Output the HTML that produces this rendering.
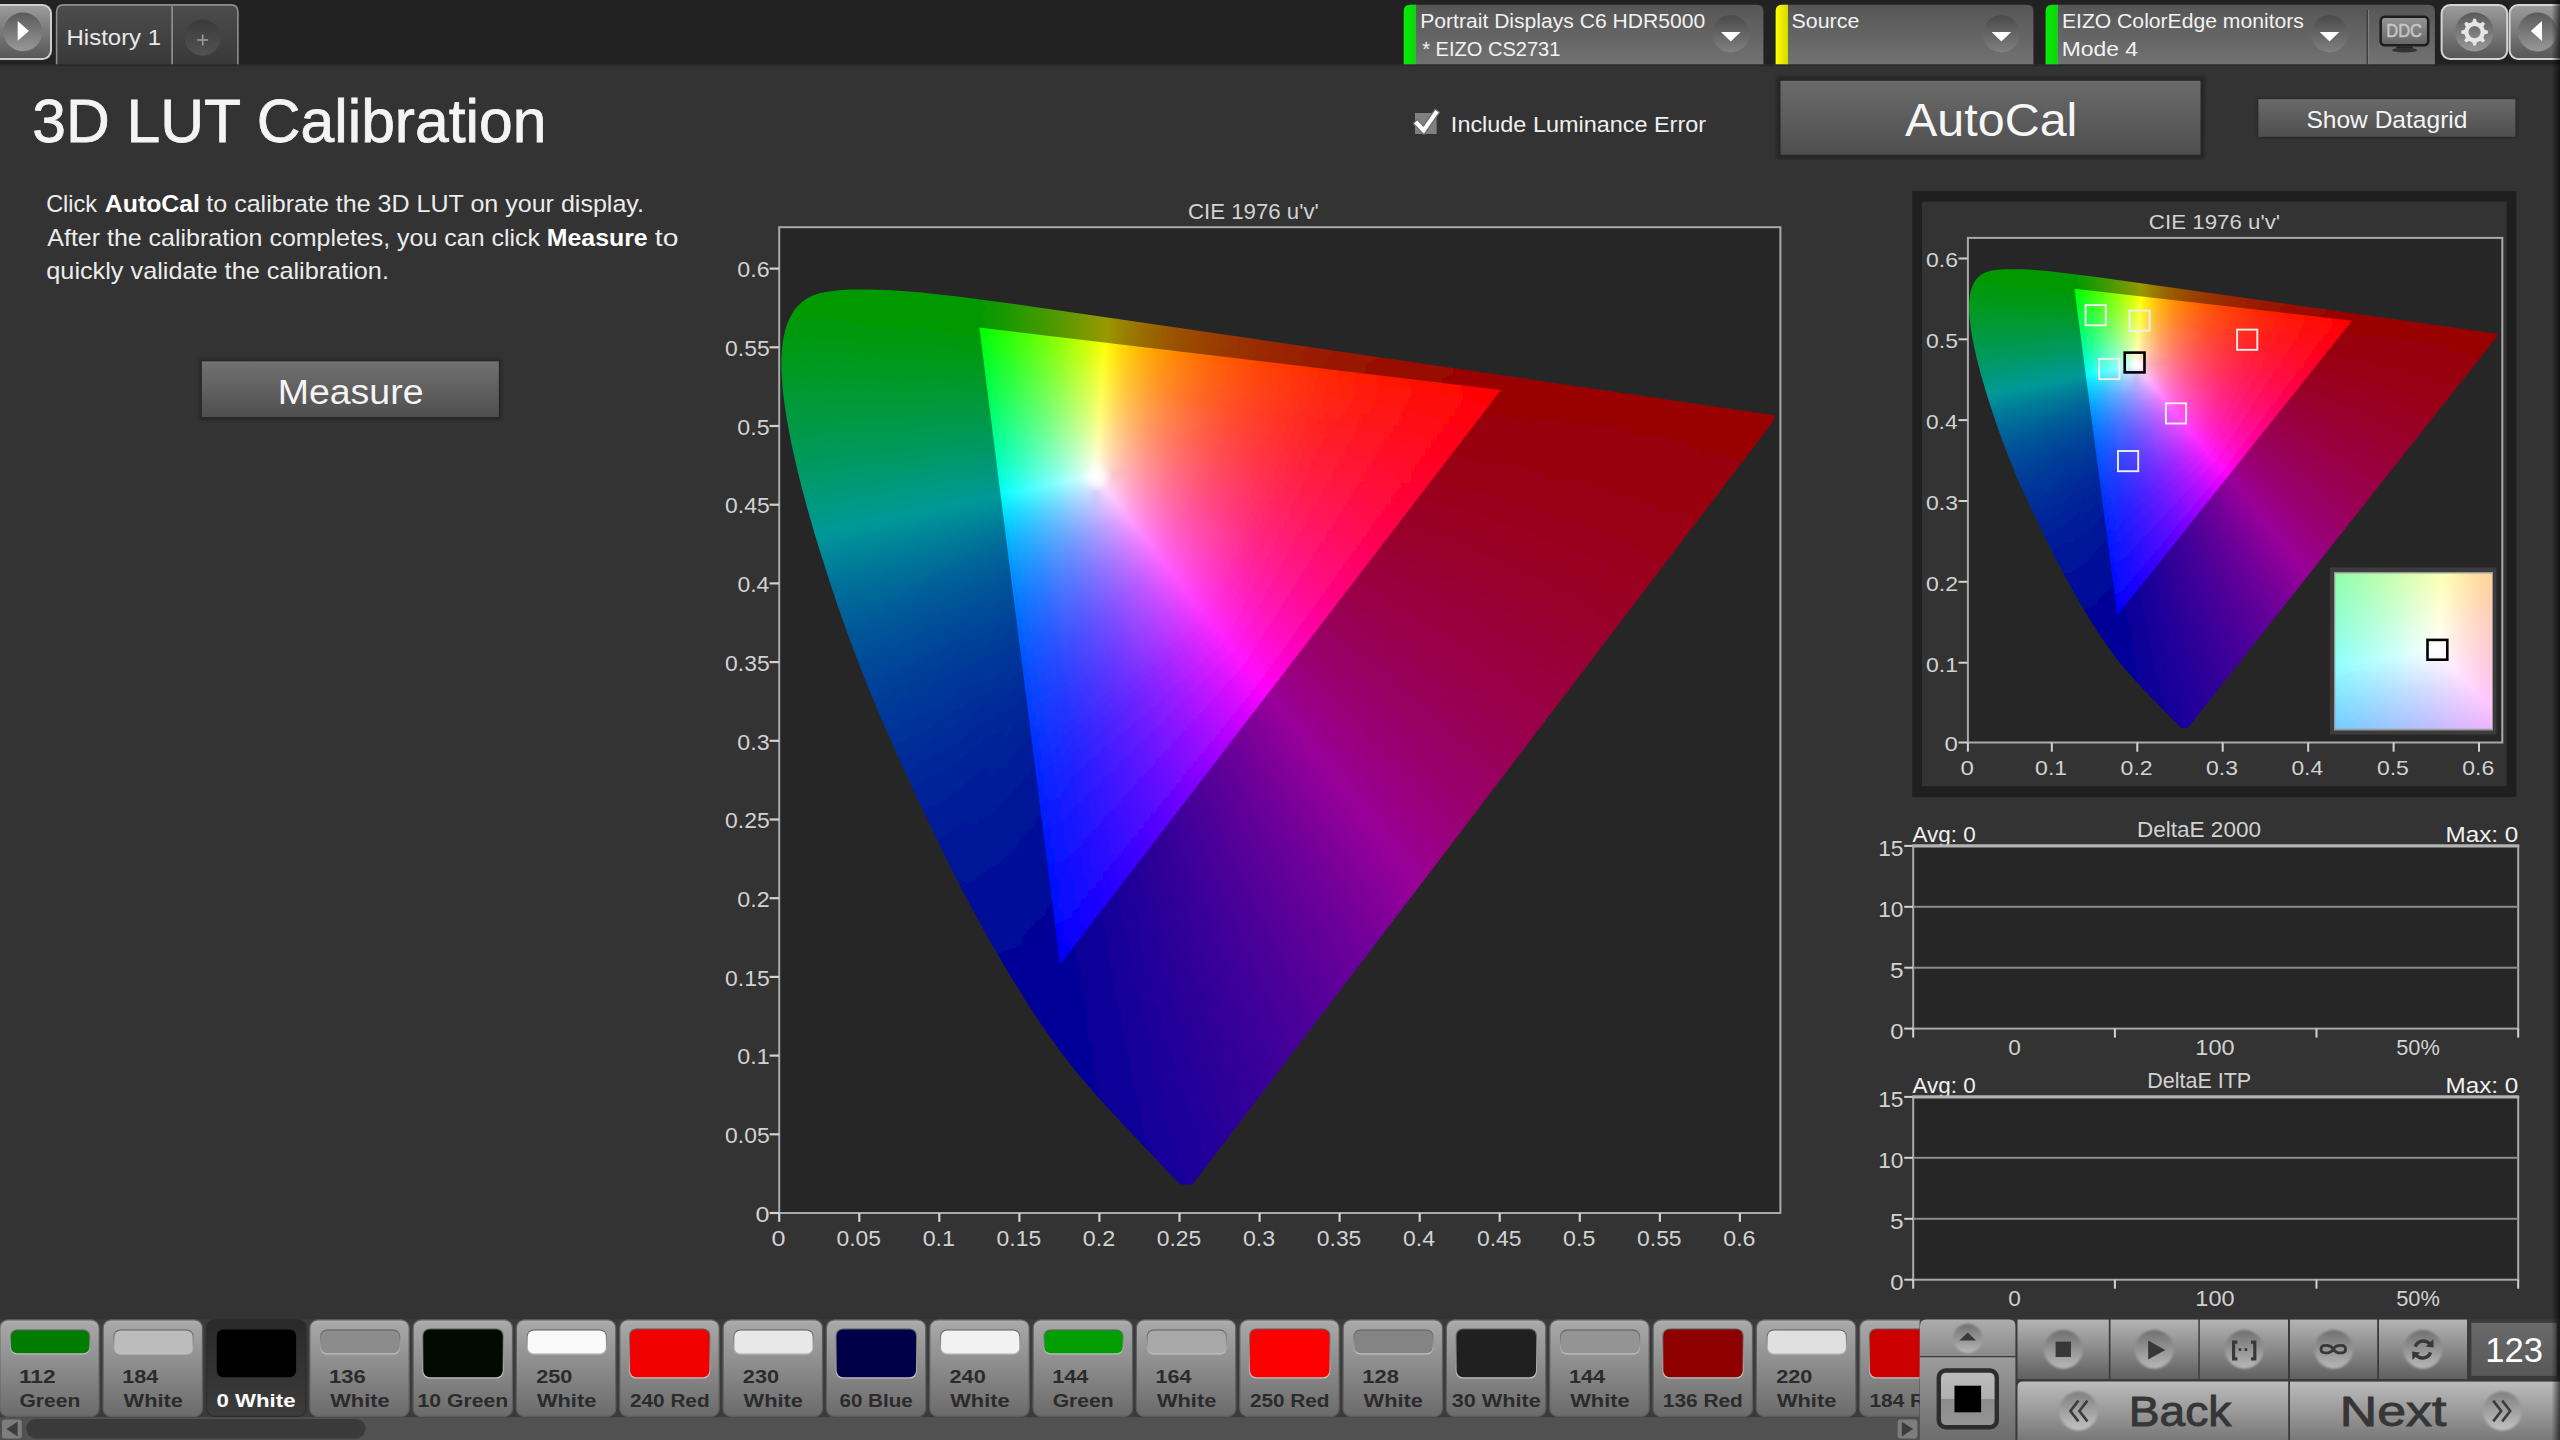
<!DOCTYPE html><html><head><meta charset="utf-8"><title>3D LUT Calibration</title><style>html,body{margin:0;padding:0;background:#333;overflow:hidden}body{width:2560px;height:1440px;font-family:"Liberation Sans",sans-serif}svg{display:block}</style></head><body><svg width="2560" height="1440" viewBox="0 0 2560 1440" font-family="Liberation Sans, sans-serif"><defs><clipPath id="cl"><path d="M1180.6,1184.5 1176.9,1181 1167,1171.1 1150.3,1153 1109.1,1109.4 1090.2,1088.3 1074.2,1069.2 1062.6,1054.4 1056.4,1046.1 1042.7,1026.6 1027.1,1003 1009.9,975.3 991.8,944.3 982.3,927.5 972.7,909.8 962.8,891.2 952.8,871.7 942.6,851.3 922.1,808.7 901.6,764.4 891.5,741.9 881.5,719.2 871.9,696.4 862.7,673.6 854,651 845.8,628.8 838.1,607 831,585.7 818,545 812.3,525.8 807.1,507.4 802.4,489.9 798.2,473.5 794.6,458 791.4,443.5 788.8,430 786.5,417.3 784.7,405.4 783.3,394.4 782.3,384.2 781.7,374.8 781.4,366.1 781.5,358.1 781.9,350.5 782.6,343.5 783.6,337 785,331 786.6,325.5 788.6,320.5 790.8,315.9 793.2,311.8 795.9,308.1 798.8,304.9 802,302 805.3,299.6 808.8,297.5 812.4,295.8 816.2,294.3 820.1,293.1 824.1,292.2 832.5,290.9 841.3,290.1 850.3,289.6 863.9,289.4 877.6,289.7 891.6,290.3 906.1,291.2 921.2,292.5 937.1,294.2 959.7,296.8 1010.4,303.5 1121.4,319.4 1774,415.3 1774,420.2 1192.4,1184.5Z"/></clipPath>
<clipPath id="ct"><path d="M1500.9,390 979.4,327.6 1060.1,964.5Z"/></clipPath>
<linearGradient id="o0" gradientUnits="userSpaceOnUse" x1="1096" y1="475.8" x2="1728.6" y2="479.8"><stop offset=".453" stop-color="#99061e"/><stop offset=".535" stop-color="#990019"/><stop offset="1" stop-color="#99000a"/></linearGradient>
<linearGradient id="o1" gradientUnits="userSpaceOnUse" x1="1096" y1="475.8" x2="1722.6" y2="487.7"><stop offset=".453" stop-color="#99061f"/><stop offset=".535" stop-color="#99001a"/><stop offset="1" stop-color="#99000b"/></linearGradient>
<linearGradient id="o2" gradientUnits="userSpaceOnUse" x1="1096" y1="475.8" x2="1716.7" y2="495.5"><stop offset=".453" stop-color="#990620"/><stop offset=".535" stop-color="#99001b"/><stop offset="1" stop-color="#99000c"/></linearGradient>
<linearGradient id="o3" gradientUnits="userSpaceOnUse" x1="1096" y1="475.8" x2="1710.8" y2="503.3"><stop offset=".453" stop-color="#990622"/><stop offset=".535" stop-color="#99001d"/><stop offset="1" stop-color="#99000e"/></linearGradient>
<linearGradient id="o4" gradientUnits="userSpaceOnUse" x1="1096" y1="475.8" x2="1704.9" y2="510.9"><stop offset=".453" stop-color="#990623"/><stop offset=".535" stop-color="#99001e"/><stop offset="1" stop-color="#99000f"/></linearGradient>
<linearGradient id="o5" gradientUnits="userSpaceOnUse" x1="1096" y1="475.8" x2="1699.1" y2="518.6"><stop offset=".453" stop-color="#990625"/><stop offset=".535" stop-color="#990020"/><stop offset="1" stop-color="#901"/></linearGradient>
<linearGradient id="o6" gradientUnits="userSpaceOnUse" x1="1096" y1="475.8" x2="1693.4" y2="526.1"><stop offset=".453" stop-color="#990626"/><stop offset=".535" stop-color="#990021"/><stop offset="1" stop-color="#990012"/></linearGradient>
<linearGradient id="o7" gradientUnits="userSpaceOnUse" x1="1096" y1="475.8" x2="1687.7" y2="533.6"><stop offset=".453" stop-color="#990627"/><stop offset=".535" stop-color="#990023"/><stop offset="1" stop-color="#990014"/></linearGradient>
<linearGradient id="o8" gradientUnits="userSpaceOnUse" x1="1096" y1="475.8" x2="1682.1" y2="541"><stop offset=".453" stop-color="#990629"/><stop offset=".535" stop-color="#990024"/><stop offset="1" stop-color="#990015"/></linearGradient>
<linearGradient id="o9" gradientUnits="userSpaceOnUse" x1="1096" y1="475.8" x2="1676.5" y2="548.4"><stop offset=".453" stop-color="#99062a"/><stop offset=".535" stop-color="#990026"/><stop offset="1" stop-color="#990017"/></linearGradient>
<linearGradient id="o10" gradientUnits="userSpaceOnUse" x1="1096" y1="475.8" x2="1670.9" y2="555.7"><stop offset=".453" stop-color="#99062c"/><stop offset=".535" stop-color="#990027"/><stop offset="1" stop-color="#990018"/></linearGradient>
<linearGradient id="o11" gradientUnits="userSpaceOnUse" x1="1096" y1="475.8" x2="1665.4" y2="562.9"><stop offset=".453" stop-color="#99062d"/><stop offset=".535" stop-color="#990029"/><stop offset="1" stop-color="#99001a"/></linearGradient>
<linearGradient id="o12" gradientUnits="userSpaceOnUse" x1="1096" y1="475.8" x2="1659.9" y2="570.1"><stop offset=".453" stop-color="#99062f"/><stop offset=".535" stop-color="#99002a"/><stop offset="1" stop-color="#99001c"/></linearGradient>
<linearGradient id="o13" gradientUnits="userSpaceOnUse" x1="1096" y1="475.8" x2="1654.5" y2="577.3"><stop offset=".453" stop-color="#990730"/><stop offset=".535" stop-color="#99002c"/><stop offset="1" stop-color="#99001d"/></linearGradient>
<linearGradient id="o14" gradientUnits="userSpaceOnUse" x1="1096" y1="475.8" x2="1649.1" y2="584.3"><stop offset=".453" stop-color="#990732"/><stop offset=".535" stop-color="#99002d"/><stop offset="1" stop-color="#99001f"/></linearGradient>
<linearGradient id="o15" gradientUnits="userSpaceOnUse" x1="1096" y1="475.8" x2="1643.7" y2="591.4"><stop offset=".453" stop-color="#990734"/><stop offset=".535" stop-color="#99002f"/><stop offset="1" stop-color="#990021"/></linearGradient>
<linearGradient id="o16" gradientUnits="userSpaceOnUse" x1="1096" y1="475.8" x2="1638.4" y2="598.4"><stop offset=".453" stop-color="#990735"/><stop offset=".535" stop-color="#990030"/><stop offset="1" stop-color="#902"/></linearGradient>
<linearGradient id="o17" gradientUnits="userSpaceOnUse" x1="1096" y1="475.8" x2="1633.1" y2="605.3"><stop offset=".453" stop-color="#990737"/><stop offset=".535" stop-color="#990032"/><stop offset="1" stop-color="#990024"/></linearGradient>
<linearGradient id="o18" gradientUnits="userSpaceOnUse" x1="1096" y1="475.8" x2="1627.8" y2="612.3"><stop offset=".453" stop-color="#990738"/><stop offset=".535" stop-color="#990034"/><stop offset="1" stop-color="#990026"/></linearGradient>
<linearGradient id="o19" gradientUnits="userSpaceOnUse" x1="1096" y1="475.8" x2="1622.6" y2="619.1"><stop offset=".453" stop-color="#99073a"/><stop offset=".535" stop-color="#990035"/><stop offset="1" stop-color="#990027"/></linearGradient>
<linearGradient id="o20" gradientUnits="userSpaceOnUse" x1="1096" y1="475.8" x2="1617.4" y2="626"><stop offset=".453" stop-color="#99073c"/><stop offset=".535" stop-color="#990037"/><stop offset="1" stop-color="#990029"/></linearGradient>
<linearGradient id="o21" gradientUnits="userSpaceOnUse" x1="1096" y1="475.8" x2="1612.3" y2="632.7"><stop offset=".453" stop-color="#99073d"/><stop offset=".535" stop-color="#990039"/><stop offset="1" stop-color="#99002b"/></linearGradient>
<linearGradient id="o22" gradientUnits="userSpaceOnUse" x1="1096" y1="475.8" x2="1607.1" y2="639.5"><stop offset=".453" stop-color="#99073f"/><stop offset=".535" stop-color="#99003b"/><stop offset="1" stop-color="#99002d"/></linearGradient>
<linearGradient id="o23" gradientUnits="userSpaceOnUse" x1="1096" y1="475.8" x2="1602" y2="646.2"><stop offset=".453" stop-color="#990741"/><stop offset=".535" stop-color="#99003c"/><stop offset="1" stop-color="#99002f"/></linearGradient>
<linearGradient id="o24" gradientUnits="userSpaceOnUse" x1="1096" y1="475.8" x2="1596.9" y2="652.9"><stop offset=".453" stop-color="#990742"/><stop offset=".535" stop-color="#99003e"/><stop offset="1" stop-color="#990031"/></linearGradient>
<linearGradient id="o25" gradientUnits="userSpaceOnUse" x1="1096" y1="475.8" x2="1591.9" y2="659.6"><stop offset=".452" stop-color="#990744"/><stop offset=".535" stop-color="#990040"/><stop offset="1" stop-color="#903"/></linearGradient>
<linearGradient id="o26" gradientUnits="userSpaceOnUse" x1="1096" y1="475.8" x2="1586.8" y2="666.2"><stop offset=".452" stop-color="#990746"/><stop offset=".535" stop-color="#990042"/><stop offset="1" stop-color="#990035"/></linearGradient>
<linearGradient id="o27" gradientUnits="userSpaceOnUse" x1="1096" y1="475.8" x2="1581.8" y2="672.8"><stop offset=".452" stop-color="#990748"/><stop offset=".535" stop-color="#904"/><stop offset="1" stop-color="#990037"/></linearGradient>
<linearGradient id="o28" gradientUnits="userSpaceOnUse" x1="1096" y1="475.8" x2="1576.8" y2="679.3"><stop offset=".452" stop-color="#99074a"/><stop offset=".535" stop-color="#990045"/><stop offset="1" stop-color="#990039"/></linearGradient>
<linearGradient id="o29" gradientUnits="userSpaceOnUse" x1="1096" y1="475.8" x2="1571.8" y2="685.9"><stop offset=".452" stop-color="#99074b"/><stop offset=".535" stop-color="#990047"/><stop offset="1" stop-color="#99003b"/></linearGradient>
<linearGradient id="o30" gradientUnits="userSpaceOnUse" x1="1096" y1="475.8" x2="1566.8" y2="692.4"><stop offset=".452" stop-color="#99084d"/><stop offset=".534" stop-color="#990049"/><stop offset="1" stop-color="#99003d"/></linearGradient>
<linearGradient id="o31" gradientUnits="userSpaceOnUse" x1="1096" y1="475.8" x2="1561.9" y2="698.9"><stop offset=".452" stop-color="#99084f"/><stop offset=".534" stop-color="#99004b"/><stop offset="1" stop-color="#99003f"/></linearGradient>
<linearGradient id="o32" gradientUnits="userSpaceOnUse" x1="1096" y1="475.8" x2="1557" y2="705.4"><stop offset=".452" stop-color="#990851"/><stop offset=".534" stop-color="#99004d"/><stop offset="1" stop-color="#990041"/></linearGradient>
<linearGradient id="o33" gradientUnits="userSpaceOnUse" x1="1096" y1="475.8" x2="1552.1" y2="711.9"><stop offset=".452" stop-color="#990853"/><stop offset=".534" stop-color="#99004f"/><stop offset="1" stop-color="#990043"/></linearGradient>
<linearGradient id="o34" gradientUnits="userSpaceOnUse" x1="1096" y1="475.8" x2="1547.2" y2="718.3"><stop offset=".452" stop-color="#990855"/><stop offset=".534" stop-color="#990051"/><stop offset="1" stop-color="#990045"/></linearGradient>
<linearGradient id="o35" gradientUnits="userSpaceOnUse" x1="1096" y1="475.8" x2="1542.3" y2="724.7"><stop offset=".452" stop-color="#990857"/><stop offset=".534" stop-color="#990053"/><stop offset="1" stop-color="#990048"/></linearGradient>
<linearGradient id="o36" gradientUnits="userSpaceOnUse" x1="1096" y1="475.8" x2="1537.4" y2="731.2"><stop offset=".452" stop-color="#990859"/><stop offset=".534" stop-color="#905"/><stop offset="1" stop-color="#99004a"/></linearGradient>
<linearGradient id="o37" gradientUnits="userSpaceOnUse" x1="1096" y1="475.8" x2="1532.5" y2="737.6"><stop offset=".452" stop-color="#99085b"/><stop offset=".534" stop-color="#990058"/><stop offset="1" stop-color="#99004c"/></linearGradient>
<linearGradient id="o38" gradientUnits="userSpaceOnUse" x1="1096" y1="475.8" x2="1527.6" y2="744"><stop offset=".452" stop-color="#99085d"/><stop offset=".534" stop-color="#99005a"/><stop offset="1" stop-color="#99004f"/></linearGradient>
<linearGradient id="o39" gradientUnits="userSpaceOnUse" x1="1096" y1="475.8" x2="1522.8" y2="750.3"><stop offset=".452" stop-color="#99085f"/><stop offset=".534" stop-color="#99005c"/><stop offset="1" stop-color="#990051"/></linearGradient>
<linearGradient id="o40" gradientUnits="userSpaceOnUse" x1="1096" y1="475.8" x2="1517.9" y2="756.7"><stop offset=".452" stop-color="#990862"/><stop offset=".534" stop-color="#99005e"/><stop offset="1" stop-color="#990054"/></linearGradient>
<linearGradient id="o41" gradientUnits="userSpaceOnUse" x1="1096" y1="475.8" x2="1513.1" y2="763.1"><stop offset=".452" stop-color="#990864"/><stop offset=".534" stop-color="#990061"/><stop offset="1" stop-color="#990057"/></linearGradient>
<linearGradient id="o42" gradientUnits="userSpaceOnUse" x1="1096" y1="475.8" x2="1508.2" y2="769.5"><stop offset=".452" stop-color="#990866"/><stop offset=".534" stop-color="#990063"/><stop offset="1" stop-color="#990059"/></linearGradient>
<linearGradient id="o43" gradientUnits="userSpaceOnUse" x1="1096" y1="475.8" x2="1503.4" y2="775.8"><stop offset=".452" stop-color="#990868"/><stop offset=".534" stop-color="#990065"/><stop offset="1" stop-color="#99005c"/></linearGradient>
<linearGradient id="o44" gradientUnits="userSpaceOnUse" x1="1096" y1="475.8" x2="1498.5" y2="782.2"><stop offset=".452" stop-color="#99096b"/><stop offset=".534" stop-color="#990068"/><stop offset="1" stop-color="#99005f"/></linearGradient>
<linearGradient id="o45" gradientUnits="userSpaceOnUse" x1="1096" y1="475.8" x2="1493.7" y2="788.6"><stop offset=".452" stop-color="#99096d"/><stop offset=".534" stop-color="#99006a"/><stop offset="1" stop-color="#990062"/></linearGradient>
<linearGradient id="o46" gradientUnits="userSpaceOnUse" x1="1096" y1="475.8" x2="1488.9" y2="794.9"><stop offset=".452" stop-color="#990970"/><stop offset=".534" stop-color="#99006d"/><stop offset="1" stop-color="#990065"/></linearGradient>
<linearGradient id="o47" gradientUnits="userSpaceOnUse" x1="1096" y1="475.8" x2="1484" y2="801.3"><stop offset=".452" stop-color="#990972"/><stop offset=".534" stop-color="#990070"/><stop offset="1" stop-color="#990068"/></linearGradient>
<linearGradient id="o48" gradientUnits="userSpaceOnUse" x1="1096" y1="475.8" x2="1479.1" y2="807.7"><stop offset=".452" stop-color="#990975"/><stop offset=".534" stop-color="#990072"/><stop offset="1" stop-color="#99006b"/></linearGradient>
<linearGradient id="o49" gradientUnits="userSpaceOnUse" x1="1096" y1="475.8" x2="1474.3" y2="814.1"><stop offset=".452" stop-color="#990977"/><stop offset=".534" stop-color="#990075"/><stop offset="1" stop-color="#99006e"/></linearGradient>
<linearGradient id="o50" gradientUnits="userSpaceOnUse" x1="1096" y1="475.8" x2="1469.4" y2="820.5"><stop offset=".452" stop-color="#99097a"/><stop offset=".534" stop-color="#990078"/><stop offset="1" stop-color="#990071"/></linearGradient>
<linearGradient id="o51" gradientUnits="userSpaceOnUse" x1="1096" y1="475.8" x2="1464.5" y2="826.9"><stop offset=".452" stop-color="#99097d"/><stop offset=".534" stop-color="#99007b"/><stop offset="1" stop-color="#990075"/></linearGradient>
<linearGradient id="o52" gradientUnits="userSpaceOnUse" x1="1096" y1="475.8" x2="1459.7" y2="833.3"><stop offset=".452" stop-color="#99097f"/><stop offset=".534" stop-color="#99007e"/><stop offset="1" stop-color="#990078"/></linearGradient>
<linearGradient id="o53" gradientUnits="userSpaceOnUse" x1="1096" y1="475.8" x2="1454.8" y2="839.7"><stop offset=".452" stop-color="#990982"/><stop offset=".534" stop-color="#990081"/><stop offset="1" stop-color="#99007c"/></linearGradient>
<linearGradient id="o54" gradientUnits="userSpaceOnUse" x1="1096" y1="475.8" x2="1449.9" y2="846.2"><stop offset=".452" stop-color="#990985"/><stop offset=".534" stop-color="#990084"/><stop offset="1" stop-color="#99007f"/></linearGradient>
<linearGradient id="o55" gradientUnits="userSpaceOnUse" x1="1096" y1="475.8" x2="1445" y2="852.6"><stop offset=".452" stop-color="#990a88"/><stop offset=".534" stop-color="#990087"/><stop offset="1" stop-color="#990083"/></linearGradient>
<linearGradient id="o56" gradientUnits="userSpaceOnUse" x1="1096" y1="475.8" x2="1440" y2="859.1"><stop offset=".452" stop-color="#990a8b"/><stop offset=".534" stop-color="#99008a"/><stop offset="1" stop-color="#990087"/></linearGradient>
<linearGradient id="o57" gradientUnits="userSpaceOnUse" x1="1096" y1="475.8" x2="1435.1" y2="865.6"><stop offset=".452" stop-color="#990a8e"/><stop offset=".534" stop-color="#99008e"/><stop offset="1" stop-color="#99008b"/></linearGradient>
<linearGradient id="o58" gradientUnits="userSpaceOnUse" x1="1096" y1="475.8" x2="1430.1" y2="872.1"><stop offset=".452" stop-color="#990a92"/><stop offset=".534" stop-color="#990091"/><stop offset="1" stop-color="#99008f"/></linearGradient>
<linearGradient id="o59" gradientUnits="userSpaceOnUse" x1="1096" y1="475.8" x2="1425.1" y2="878.7"><stop offset=".452" stop-color="#990a95"/><stop offset=".534" stop-color="#990095"/><stop offset="1" stop-color="#990094"/></linearGradient>
<linearGradient id="o60" gradientUnits="userSpaceOnUse" x1="1096" y1="475.8" x2="1420.1" y2="885.3"><stop offset=".451" stop-color="#990a98"/><stop offset=".534" stop-color="#990098"/><stop offset="1" stop-color="#990098"/></linearGradient>
<linearGradient id="o61" gradientUnits="userSpaceOnUse" x1="1096" y1="475.8" x2="1415.1" y2="891.9"><stop offset=".451" stop-color="#960a99"/><stop offset=".534" stop-color="#960099"/><stop offset="1" stop-color="#950099"/></linearGradient>
<linearGradient id="o62" gradientUnits="userSpaceOnUse" x1="1096" y1="475.8" x2="1410.1" y2="898.5"><stop offset=".451" stop-color="#930a99"/><stop offset=".534" stop-color="#920099"/><stop offset="1" stop-color="#910099"/></linearGradient>
<linearGradient id="o63" gradientUnits="userSpaceOnUse" x1="1096" y1="475.8" x2="1405" y2="905.1"><stop offset=".451" stop-color="#8f0a99"/><stop offset=".534" stop-color="#8f0099"/><stop offset="1" stop-color="#8d0099"/></linearGradient>
<linearGradient id="o64" gradientUnits="userSpaceOnUse" x1="1096" y1="475.8" x2="1399.9" y2="911.8"><stop offset=".451" stop-color="#8c0a99"/><stop offset=".534" stop-color="#8b0099"/><stop offset="1" stop-color="#809"/></linearGradient>
<linearGradient id="o65" gradientUnits="userSpaceOnUse" x1="1096" y1="475.8" x2="1394.8" y2="918.5"><stop offset=".451" stop-color="#890a99"/><stop offset=".534" stop-color="#809"/><stop offset="1" stop-color="#840099"/></linearGradient>
<linearGradient id="o66" gradientUnits="userSpaceOnUse" x1="1096" y1="475.8" x2="1389.7" y2="925.3"><stop offset=".451" stop-color="#860a99"/><stop offset=".534" stop-color="#840099"/><stop offset="1" stop-color="#800099"/></linearGradient>
<linearGradient id="o67" gradientUnits="userSpaceOnUse" x1="1096" y1="475.8" x2="1384.5" y2="932.1"><stop offset=".451" stop-color="#830999"/><stop offset=".534" stop-color="#810099"/><stop offset="1" stop-color="#7c0099"/></linearGradient>
<linearGradient id="o68" gradientUnits="userSpaceOnUse" x1="1096" y1="475.8" x2="1379.3" y2="938.9"><stop offset=".451" stop-color="#800999"/><stop offset=".534" stop-color="#7e0099"/><stop offset="1" stop-color="#780099"/></linearGradient>
<linearGradient id="o69" gradientUnits="userSpaceOnUse" x1="1096" y1="475.8" x2="1374.1" y2="945.8"><stop offset=".451" stop-color="#7c0999"/><stop offset=".534" stop-color="#7b0099"/><stop offset="1" stop-color="#740099"/></linearGradient>
<linearGradient id="o70" gradientUnits="userSpaceOnUse" x1="1096" y1="475.8" x2="1368.8" y2="952.7"><stop offset=".451" stop-color="#790999"/><stop offset=".534" stop-color="#709"/><stop offset="1" stop-color="#710099"/></linearGradient>
<linearGradient id="o71" gradientUnits="userSpaceOnUse" x1="1096" y1="475.8" x2="1363.5" y2="959.7"><stop offset=".451" stop-color="#770999"/><stop offset=".533" stop-color="#740099"/><stop offset="1" stop-color="#6d0099"/></linearGradient>
<linearGradient id="o72" gradientUnits="userSpaceOnUse" x1="1096" y1="475.8" x2="1358.2" y2="966.7"><stop offset=".451" stop-color="#740999"/><stop offset=".533" stop-color="#710099"/><stop offset="1" stop-color="#690099"/></linearGradient>
<linearGradient id="o73" gradientUnits="userSpaceOnUse" x1="1096" y1="475.8" x2="1352.8" y2="973.7"><stop offset=".451" stop-color="#710999"/><stop offset=".533" stop-color="#6e0099"/><stop offset="1" stop-color="#609"/></linearGradient>
<linearGradient id="o74" gradientUnits="userSpaceOnUse" x1="1096" y1="475.8" x2="1347.4" y2="980.8"><stop offset=".451" stop-color="#6e0999"/><stop offset=".533" stop-color="#6b0099"/><stop offset="1" stop-color="#620099"/></linearGradient>
<linearGradient id="o75" gradientUnits="userSpaceOnUse" x1="1096" y1="475.8" x2="1342" y2="988"><stop offset=".451" stop-color="#6b0999"/><stop offset=".533" stop-color="#680099"/><stop offset="1" stop-color="#5f0099"/></linearGradient>
<linearGradient id="o76" gradientUnits="userSpaceOnUse" x1="1096" y1="475.8" x2="1336.5" y2="995.2"><stop offset=".451" stop-color="#680999"/><stop offset=".533" stop-color="#650099"/><stop offset="1" stop-color="#5c0099"/></linearGradient>
<linearGradient id="o77" gradientUnits="userSpaceOnUse" x1="1096" y1="475.8" x2="1331" y2="1002.4"><stop offset=".451" stop-color="#660999"/><stop offset=".533" stop-color="#620099"/><stop offset="1" stop-color="#580099"/></linearGradient>
<linearGradient id="o78" gradientUnits="userSpaceOnUse" x1="1096" y1="475.8" x2="1325.4" y2="1009.7"><stop offset=".451" stop-color="#630899"/><stop offset=".533" stop-color="#600099"/><stop offset="1" stop-color="#509"/></linearGradient>
<linearGradient id="o79" gradientUnits="userSpaceOnUse" x1="1096" y1="475.8" x2="1319.8" y2="1017.1"><stop offset=".451" stop-color="#600899"/><stop offset=".533" stop-color="#5d0099"/><stop offset="1" stop-color="#520099"/></linearGradient>
<linearGradient id="o80" gradientUnits="userSpaceOnUse" x1="1096" y1="475.8" x2="1314.1" y2="1024.5"><stop offset=".451" stop-color="#5e0899"/><stop offset=".533" stop-color="#5a0099"/><stop offset="1" stop-color="#4f0099"/></linearGradient>
<linearGradient id="o81" gradientUnits="userSpaceOnUse" x1="1096" y1="475.8" x2="1308.4" y2="1032"><stop offset=".451" stop-color="#5b0899"/><stop offset=".533" stop-color="#570099"/><stop offset="1" stop-color="#4c0099"/></linearGradient>
<linearGradient id="o82" gradientUnits="userSpaceOnUse" x1="1096" y1="475.8" x2="1302.7" y2="1039.6"><stop offset=".451" stop-color="#580899"/><stop offset=".533" stop-color="#509"/><stop offset="1" stop-color="#490099"/></linearGradient>
<linearGradient id="o83" gradientUnits="userSpaceOnUse" x1="1096" y1="475.8" x2="1296.9" y2="1047.2"><stop offset=".451" stop-color="#560899"/><stop offset=".533" stop-color="#520099"/><stop offset="1" stop-color="#460099"/></linearGradient>
<linearGradient id="o84" gradientUnits="userSpaceOnUse" x1="1096" y1="475.8" x2="1291" y2="1054.9"><stop offset=".451" stop-color="#530899"/><stop offset=".533" stop-color="#4f0099"/><stop offset="1" stop-color="#430099"/></linearGradient>
<linearGradient id="o85" gradientUnits="userSpaceOnUse" x1="1096" y1="475.8" x2="1285.1" y2="1062.7"><stop offset=".451" stop-color="#510899"/><stop offset=".533" stop-color="#4d0099"/><stop offset="1" stop-color="#400099"/></linearGradient>
<linearGradient id="o86" gradientUnits="userSpaceOnUse" x1="1096" y1="475.8" x2="1279.2" y2="1070.5"><stop offset=".451" stop-color="#4e0899"/><stop offset=".533" stop-color="#4a0099"/><stop offset="1" stop-color="#3d0099"/></linearGradient>
<linearGradient id="o87" gradientUnits="userSpaceOnUse" x1="1096" y1="475.8" x2="1273.2" y2="1078.4"><stop offset=".451" stop-color="#4c0899"/><stop offset=".53" stop-color="#480099"/><stop offset="1" stop-color="#3a0099"/></linearGradient>
<linearGradient id="o88" gradientUnits="userSpaceOnUse" x1="1096" y1="475.8" x2="1267.1" y2="1086.4"><stop offset=".451" stop-color="#490899"/><stop offset=".53" stop-color="#450099"/><stop offset="1" stop-color="#380099"/></linearGradient>
<linearGradient id="o89" gradientUnits="userSpaceOnUse" x1="1096" y1="475.8" x2="1261" y2="1094.4"><stop offset=".451" stop-color="#470899"/><stop offset=".53" stop-color="#430099"/><stop offset="1" stop-color="#350099"/></linearGradient>
<linearGradient id="o90" gradientUnits="userSpaceOnUse" x1="1096" y1="475.8" x2="1254.8" y2="1102.6"><stop offset=".451" stop-color="#450899"/><stop offset=".53" stop-color="#400099"/><stop offset="1" stop-color="#320099"/></linearGradient>
<linearGradient id="o91" gradientUnits="userSpaceOnUse" x1="1096" y1="475.8" x2="1248.5" y2="1110.8"><stop offset=".45" stop-color="#420799"/><stop offset=".529" stop-color="#3e0099"/><stop offset="1" stop-color="#300099"/></linearGradient>
<linearGradient id="o92" gradientUnits="userSpaceOnUse" x1="1096" y1="475.8" x2="1242.2" y2="1119.1"><stop offset=".45" stop-color="#400799"/><stop offset=".529" stop-color="#3c0099"/><stop offset="1" stop-color="#2d0099"/></linearGradient>
<linearGradient id="o93" gradientUnits="userSpaceOnUse" x1="1096" y1="475.8" x2="1235.8" y2="1127.6"><stop offset=".45" stop-color="#3e0799"/><stop offset=".529" stop-color="#390099"/><stop offset="1" stop-color="#2a0099"/></linearGradient>
<linearGradient id="o94" gradientUnits="userSpaceOnUse" x1="1096" y1="475.8" x2="1229.2" y2="1136.2"><stop offset=".45" stop-color="#3b0799"/><stop offset=".529" stop-color="#370099"/><stop offset="1" stop-color="#280099"/></linearGradient>
<linearGradient id="o95" gradientUnits="userSpaceOnUse" x1="1096" y1="475.8" x2="1222.5" y2="1145"><stop offset=".45" stop-color="#390799"/><stop offset=".529" stop-color="#340099"/><stop offset="1" stop-color="#250099"/></linearGradient>
<linearGradient id="o96" gradientUnits="userSpaceOnUse" x1="1096" y1="475.8" x2="1215.6" y2="1154"><stop offset=".45" stop-color="#370799"/><stop offset=".529" stop-color="#320099"/><stop offset="1" stop-color="#230099"/></linearGradient>
<linearGradient id="o97" gradientUnits="userSpaceOnUse" x1="1096" y1="475.8" x2="1208.6" y2="1163.2"><stop offset=".45" stop-color="#340799"/><stop offset=".529" stop-color="#300099"/><stop offset="1" stop-color="#200099"/></linearGradient>
<linearGradient id="o98" gradientUnits="userSpaceOnUse" x1="1096" y1="475.8" x2="1201.4" y2="1172.7"><stop offset=".45" stop-color="#320799"/><stop offset=".529" stop-color="#2d0099"/><stop offset="1" stop-color="#1d0099"/></linearGradient>
<linearGradient id="o99" gradientUnits="userSpaceOnUse" x1="1096" y1="475.8" x2="1194.1" y2="1182.3"><stop offset=".45" stop-color="#300799"/><stop offset=".529" stop-color="#2b0099"/><stop offset="1" stop-color="#1b0099"/></linearGradient>
<linearGradient id="o100" gradientUnits="userSpaceOnUse" x1="1096" y1="475.8" x2="1185.6" y2="1184.5"><stop offset=".455" stop-color="#2d0799"/><stop offset=".537" stop-color="#280099"/><stop offset="1" stop-color="#190099"/></linearGradient>
<linearGradient id="o101" gradientUnits="userSpaceOnUse" x1="1096" y1="475.8" x2="1176.3" y2="1180.5"><stop offset=".464" stop-color="#2b0799"/><stop offset=".548" stop-color="#260099"/><stop offset="1" stop-color="#170099"/></linearGradient>
<linearGradient id="o102" gradientUnits="userSpaceOnUse" x1="1096" y1="475.8" x2="1166.6" y2="1170.7"><stop offset=".477" stop-color="#290799"/><stop offset=".562" stop-color="#240099"/><stop offset="1" stop-color="#150099"/></linearGradient>
<linearGradient id="o103" gradientUnits="userSpaceOnUse" x1="1096" y1="475.8" x2="1157.1" y2="1160.3"><stop offset=".491" stop-color="#260799"/><stop offset=".58" stop-color="#210099"/><stop offset="1" stop-color="#130099"/></linearGradient>
<linearGradient id="o104" gradientUnits="userSpaceOnUse" x1="1096" y1="475.8" x2="1148" y2="1150.5"><stop offset=".506" stop-color="#240799"/><stop offset=".595" stop-color="#1f0099"/><stop offset="1" stop-color="#109"/></linearGradient>
<linearGradient id="o105" gradientUnits="userSpaceOnUse" x1="1096" y1="475.8" x2="1139.1" y2="1141.1"><stop offset=".521" stop-color="#220699"/><stop offset=".614" stop-color="#1c0099"/><stop offset="1" stop-color="#0f0099"/></linearGradient>
<linearGradient id="o106" gradientUnits="userSpaceOnUse" x1="1096" y1="475.8" x2="1130.4" y2="1132"><stop offset=".536" stop-color="#1f0699"/><stop offset=".632" stop-color="#1a0099"/><stop offset="1" stop-color="#0d0099"/></linearGradient>
<linearGradient id="o107" gradientUnits="userSpaceOnUse" x1="1096" y1="475.8" x2="1122" y2="1123.1"><stop offset=".551" stop-color="#1d0699"/><stop offset=".65" stop-color="#170099"/><stop offset="1" stop-color="#0b0099"/></linearGradient>
<linearGradient id="o108" gradientUnits="userSpaceOnUse" x1="1096" y1="475.8" x2="1113.8" y2="1114.4"><stop offset=".568" stop-color="#1a0699"/><stop offset=".668" stop-color="#150099"/><stop offset="1" stop-color="#090099"/></linearGradient>
<linearGradient id="o109" gradientUnits="userSpaceOnUse" x1="1096" y1="475.8" x2="1105.6" y2="1105.6"><stop offset=".585" stop-color="#180699"/><stop offset=".689" stop-color="#120099"/><stop offset="1" stop-color="#080099"/></linearGradient>
<linearGradient id="o110" gradientUnits="userSpaceOnUse" x1="1096" y1="475.8" x2="1097.6" y2="1096.7"><stop offset=".603" stop-color="#150699"/><stop offset=".71" stop-color="#100099"/><stop offset="1" stop-color="#060099"/></linearGradient>
<linearGradient id="o111" gradientUnits="userSpaceOnUse" x1="1096" y1="475.8" x2="1089.7" y2="1087.7"><stop offset=".622" stop-color="#130699"/><stop offset=".733" stop-color="#0d0099"/><stop offset="1" stop-color="#040099"/></linearGradient>
<linearGradient id="o112" gradientUnits="userSpaceOnUse" x1="1096" y1="475.8" x2="1081.9" y2="1078.6"><stop offset=".643" stop-color="#100699"/><stop offset=".757" stop-color="#0a0099"/><stop offset="1" stop-color="#020099"/></linearGradient>
<linearGradient id="o113" gradientUnits="userSpaceOnUse" x1="1096" y1="475.8" x2="1074.3" y2="1069.3"><stop offset=".665" stop-color="#0d0699"/><stop offset=".782" stop-color="#080099"/><stop offset="1" stop-color="#009"/></linearGradient>
<linearGradient id="o114" gradientUnits="userSpaceOnUse" x1="1096" y1="475.8" x2="1066.7" y2="1059.8"><stop offset=".688" stop-color="#0a0699"/><stop offset=".809" stop-color="#050099"/><stop offset="1" stop-color="#009"/></linearGradient>
<linearGradient id="o115" gradientUnits="userSpaceOnUse" x1="1096" y1="475.8" x2="1059.3" y2="1050"><stop offset=".713" stop-color="#080699"/><stop offset=".839" stop-color="#020099"/><stop offset="1" stop-color="#009"/></linearGradient>
<linearGradient id="o116" gradientUnits="userSpaceOnUse" x1="1096" y1="475.8" x2="1052.1" y2="1040.1"><stop offset=".72" stop-color="#060799"/><stop offset=".848" stop-color="#000199"/><stop offset="1" stop-color="#009"/></linearGradient>
<linearGradient id="o117" gradientUnits="userSpaceOnUse" x1="1096" y1="475.8" x2="1045" y2="1030"><stop offset=".686" stop-color="#060a99"/><stop offset=".808" stop-color="#000499"/><stop offset="1" stop-color="#009"/></linearGradient>
<linearGradient id="o118" gradientUnits="userSpaceOnUse" x1="1096" y1="475.8" x2="1038" y2="1019.7"><stop offset=".655" stop-color="#060d99"/><stop offset=".772" stop-color="#000799"/><stop offset="1" stop-color="#009"/></linearGradient>
<linearGradient id="o119" gradientUnits="userSpaceOnUse" x1="1096" y1="475.8" x2="1031.2" y2="1009.3"><stop offset=".628" stop-color="#061099"/><stop offset=".74" stop-color="#000a99"/><stop offset="1" stop-color="#009"/></linearGradient>
<linearGradient id="o120" gradientUnits="userSpaceOnUse" x1="1096" y1="475.8" x2="1024.6" y2="999"><stop offset=".604" stop-color="#071399"/><stop offset=".71" stop-color="#000c99"/><stop offset="1" stop-color="#000199"/></linearGradient>
<linearGradient id="o121" gradientUnits="userSpaceOnUse" x1="1096" y1="475.8" x2="1018.1" y2="988.6"><stop offset=".582" stop-color="#071699"/><stop offset=".684" stop-color="#000f99"/><stop offset="1" stop-color="#000299"/></linearGradient>
<linearGradient id="o122" gradientUnits="userSpaceOnUse" x1="1096" y1="475.8" x2="1011.7" y2="978.2"><stop offset=".562" stop-color="#071899"/><stop offset=".66" stop-color="#001299"/><stop offset="1" stop-color="#000499"/></linearGradient>
<linearGradient id="o123" gradientUnits="userSpaceOnUse" x1="1096" y1="475.8" x2="1005.5" y2="967.8"><stop offset=".544" stop-color="#081b99"/><stop offset=".641" stop-color="#001599"/><stop offset="1" stop-color="#000599"/></linearGradient>
<linearGradient id="o124" gradientUnits="userSpaceOnUse" x1="1096" y1="475.8" x2="999.4" y2="957.5"><stop offset=".527" stop-color="#081e99"/><stop offset=".622" stop-color="#001799"/><stop offset="1" stop-color="#000699"/></linearGradient>
<linearGradient id="o125" gradientUnits="userSpaceOnUse" x1="1096" y1="475.8" x2="993.4" y2="947.2"><stop offset=".512" stop-color="#082199"/><stop offset=".604" stop-color="#001a99"/><stop offset="1" stop-color="#000899"/></linearGradient>
<linearGradient id="o126" gradientUnits="userSpaceOnUse" x1="1096" y1="475.8" x2="987.6" y2="936.9"><stop offset=".498" stop-color="#082399"/><stop offset=".586" stop-color="#001d99"/><stop offset="1" stop-color="#000999"/></linearGradient>
<linearGradient id="o127" gradientUnits="userSpaceOnUse" x1="1096" y1="475.8" x2="981.9" y2="926.8"><stop offset=".486" stop-color="#092699"/><stop offset=".572" stop-color="#001f99"/><stop offset="1" stop-color="#000b99"/></linearGradient>
<linearGradient id="o128" gradientUnits="userSpaceOnUse" x1="1096" y1="475.8" x2="976.4" y2="916.6"><stop offset=".474" stop-color="#092999"/><stop offset=".559" stop-color="#029"/><stop offset="1" stop-color="#000c99"/></linearGradient>
<linearGradient id="o129" gradientUnits="userSpaceOnUse" x1="1096" y1="475.8" x2="971" y2="906.6"><stop offset=".463" stop-color="#092b99"/><stop offset=".547" stop-color="#002499"/><stop offset="1" stop-color="#000e99"/></linearGradient>
<linearGradient id="o130" gradientUnits="userSpaceOnUse" x1="1096" y1="475.8" x2="965.7" y2="896.6"><stop offset=".453" stop-color="#092e99"/><stop offset=".535" stop-color="#002799"/><stop offset="1" stop-color="#001099"/></linearGradient>
<linearGradient id="o131" gradientUnits="userSpaceOnUse" x1="1096" y1="475.8" x2="960.5" y2="886.8"><stop offset=".443" stop-color="#0a3199"/><stop offset=".523" stop-color="#002999"/><stop offset="1" stop-color="#019"/></linearGradient>
<linearGradient id="o132" gradientUnits="userSpaceOnUse" x1="1096" y1="475.8" x2="955.5" y2="877"><stop offset=".435" stop-color="#0a3399"/><stop offset=".512" stop-color="#002c99"/><stop offset="1" stop-color="#001399"/></linearGradient>
<linearGradient id="o133" gradientUnits="userSpaceOnUse" x1="1096" y1="475.8" x2="950.6" y2="867.3"><stop offset=".426" stop-color="#0a3699"/><stop offset=".502" stop-color="#002f99"/><stop offset=".72" stop-color="#002099"/><stop offset="1" stop-color="#001599"/></linearGradient>
<linearGradient id="o134" gradientUnits="userSpaceOnUse" x1="1096" y1="475.8" x2="945.7" y2="857.6"><stop offset=".419" stop-color="#0a3899"/><stop offset=".495" stop-color="#003199"/><stop offset=".717" stop-color="#029"/><stop offset="1" stop-color="#001699"/></linearGradient>
<linearGradient id="o135" gradientUnits="userSpaceOnUse" x1="1096" y1="475.8" x2="941" y2="848.1"><stop offset=".411" stop-color="#0a3b99"/><stop offset=".485" stop-color="#003499"/><stop offset=".713" stop-color="#002499"/><stop offset="1" stop-color="#001899"/></linearGradient>
<linearGradient id="o136" gradientUnits="userSpaceOnUse" x1="1096" y1="475.8" x2="936.4" y2="838.7"><stop offset=".405" stop-color="#0b3d99"/><stop offset=".479" stop-color="#003699"/><stop offset=".71" stop-color="#002699"/><stop offset="1" stop-color="#001a99"/></linearGradient>
<linearGradient id="o137" gradientUnits="userSpaceOnUse" x1="1096" y1="475.8" x2="931.9" y2="829.4"><stop offset=".398" stop-color="#0b3f99"/><stop offset=".47" stop-color="#003999"/><stop offset=".703" stop-color="#002899"/><stop offset="1" stop-color="#001c99"/></linearGradient>
<linearGradient id="o138" gradientUnits="userSpaceOnUse" x1="1096" y1="475.8" x2="927.5" y2="820.2"><stop offset=".392" stop-color="#0b4299"/><stop offset=".464" stop-color="#003b99"/><stop offset=".7" stop-color="#002a99"/><stop offset="1" stop-color="#001e99"/></linearGradient>
<linearGradient id="o139" gradientUnits="userSpaceOnUse" x1="1096" y1="475.8" x2="923.2" y2="811.1"><stop offset=".386" stop-color="#0b4499"/><stop offset=".455" stop-color="#003d99"/><stop offset=".693" stop-color="#002d99"/><stop offset="1" stop-color="#001f99"/></linearGradient>
<linearGradient id="o140" gradientUnits="userSpaceOnUse" x1="1096" y1="475.8" x2="919" y2="802.1"><stop offset=".381" stop-color="#0c4799"/><stop offset=".45" stop-color="#004099"/><stop offset=".69" stop-color="#002f99"/><stop offset="1" stop-color="#002199"/></linearGradient>
<linearGradient id="o141" gradientUnits="userSpaceOnUse" x1="1096" y1="475.8" x2="914.9" y2="793.3"><stop offset=".376" stop-color="#0c4999"/><stop offset=".442" stop-color="#004299"/><stop offset=".688" stop-color="#003199"/><stop offset="1" stop-color="#002399"/></linearGradient>
<linearGradient id="o142" gradientUnits="userSpaceOnUse" x1="1096" y1="475.8" x2="910.8" y2="784.5"><stop offset=".371" stop-color="#0c4b99"/><stop offset=".438" stop-color="#004599"/><stop offset=".681" stop-color="#039"/><stop offset="1" stop-color="#002599"/></linearGradient>
<linearGradient id="o143" gradientUnits="userSpaceOnUse" x1="1096" y1="475.8" x2="906.8" y2="775.8"><stop offset=".366" stop-color="#0c4e99"/><stop offset=".433" stop-color="#004799"/><stop offset=".679" stop-color="#003599"/><stop offset="1" stop-color="#002899"/></linearGradient>
<linearGradient id="o144" gradientUnits="userSpaceOnUse" x1="1096" y1="475.8" x2="902.9" y2="767.3"><stop offset=".361" stop-color="#0c5099"/><stop offset=".425" stop-color="#004a99"/><stop offset=".677" stop-color="#003899"/><stop offset="1" stop-color="#002a99"/></linearGradient>
<linearGradient id="o145" gradientUnits="userSpaceOnUse" x1="1096" y1="475.8" x2="899" y2="758.8"><stop offset=".357" stop-color="#0d5299"/><stop offset=".421" stop-color="#004c99"/><stop offset=".675" stop-color="#003a99"/><stop offset="1" stop-color="#002c99"/></linearGradient>
<linearGradient id="o146" gradientUnits="userSpaceOnUse" x1="1096" y1="475.8" x2="895.3" y2="750.4"><stop offset=".353" stop-color="#0d5599"/><stop offset=".418" stop-color="#004e99"/><stop offset=".672" stop-color="#003c99"/><stop offset="1" stop-color="#002e99"/></linearGradient>
<linearGradient id="o147" gradientUnits="userSpaceOnUse" x1="1096" y1="475.8" x2="891.5" y2="742.1"><stop offset=".349" stop-color="#0d5799"/><stop offset=".414" stop-color="#005199"/><stop offset=".67" stop-color="#003e99"/><stop offset="1" stop-color="#003099"/></linearGradient>
<linearGradient id="o148" gradientUnits="userSpaceOnUse" x1="1096" y1="475.8" x2="887.9" y2="733.8"><stop offset=".345" stop-color="#0d5999"/><stop offset=".407" stop-color="#005399"/><stop offset=".665" stop-color="#004199"/><stop offset="1" stop-color="#039"/></linearGradient>
<linearGradient id="o149" gradientUnits="userSpaceOnUse" x1="1096" y1="475.8" x2="884.4" y2="725.7"><stop offset=".342" stop-color="#0d5c99"/><stop offset=".404" stop-color="#005699"/><stop offset=".663" stop-color="#004399"/><stop offset="1" stop-color="#003599"/></linearGradient>
<linearGradient id="o150" gradientUnits="userSpaceOnUse" x1="1096" y1="475.8" x2="880.9" y2="717.6"><stop offset=".338" stop-color="#0e5e99"/><stop offset=".4" stop-color="#005899"/><stop offset=".661" stop-color="#004699"/><stop offset="1" stop-color="#003899"/></linearGradient>
<linearGradient id="o151" gradientUnits="userSpaceOnUse" x1="1096" y1="475.8" x2="877.5" y2="709.5"><stop offset=".335" stop-color="#0e6099"/><stop offset=".397" stop-color="#005a99"/><stop offset=".659" stop-color="#004899"/><stop offset="1" stop-color="#003a99"/></linearGradient>
<linearGradient id="o152" gradientUnits="userSpaceOnUse" x1="1096" y1="475.8" x2="874.1" y2="701.5"><stop offset=".332" stop-color="#0e6399"/><stop offset=".39" stop-color="#005d99"/><stop offset=".658" stop-color="#004b99"/><stop offset="1" stop-color="#003d99"/></linearGradient>
<linearGradient id="o153" gradientUnits="userSpaceOnUse" x1="1096" y1="475.8" x2="870.8" y2="693.6"><stop offset=".329" stop-color="#0e6599"/><stop offset=".388" stop-color="#006099"/><stop offset=".656" stop-color="#004e99"/><stop offset="1" stop-color="#004099"/></linearGradient>
<linearGradient id="o154" gradientUnits="userSpaceOnUse" x1="1096" y1="475.8" x2="867.6" y2="685.7"><stop offset=".326" stop-color="#0f6799"/><stop offset=".385" stop-color="#006299"/><stop offset=".655" stop-color="#005099"/><stop offset="1" stop-color="#004299"/></linearGradient>
<linearGradient id="o155" gradientUnits="userSpaceOnUse" x1="1096" y1="475.8" x2="864.4" y2="677.8"><stop offset=".323" stop-color="#0f6a99"/><stop offset=".383" stop-color="#006499"/><stop offset=".653" stop-color="#005399"/><stop offset="1" stop-color="#004599"/></linearGradient>
<linearGradient id="o156" gradientUnits="userSpaceOnUse" x1="1096" y1="475.8" x2="861.3" y2="670"><stop offset=".321" stop-color="#0f6c99"/><stop offset=".38" stop-color="#006799"/><stop offset=".652" stop-color="#005699"/><stop offset="1" stop-color="#004899"/></linearGradient>
<linearGradient id="o157" gradientUnits="userSpaceOnUse" x1="1096" y1="475.8" x2="858.3" y2="662.2"><stop offset=".318" stop-color="#0f6e99"/><stop offset=".378" stop-color="#006999"/><stop offset=".651" stop-color="#005999"/><stop offset="1" stop-color="#004b99"/></linearGradient>
<linearGradient id="o158" gradientUnits="userSpaceOnUse" x1="1096" y1="475.8" x2="855.3" y2="654.5"><stop offset=".316" stop-color="#0f7199"/><stop offset=".371" stop-color="#006c99"/><stop offset=".649" stop-color="#005c99"/><stop offset="1" stop-color="#004f99"/></linearGradient>
<linearGradient id="o159" gradientUnits="userSpaceOnUse" x1="1096" y1="475.8" x2="852.4" y2="646.7"><stop offset=".314" stop-color="#107399"/><stop offset=".369" stop-color="#006f99"/><stop offset=".648" stop-color="#005f99"/><stop offset="1" stop-color="#005299"/></linearGradient>
<linearGradient id="o160" gradientUnits="userSpaceOnUse" x1="1096" y1="475.8" x2="849.6" y2="639"><stop offset=".311" stop-color="#107699"/><stop offset=".367" stop-color="#007199"/><stop offset=".647" stop-color="#006299"/><stop offset="1" stop-color="#059"/></linearGradient>
<linearGradient id="o161" gradientUnits="userSpaceOnUse" x1="1096" y1="475.8" x2="846.7" y2="631.3"><stop offset=".309" stop-color="#107899"/><stop offset=".365" stop-color="#007499"/><stop offset=".646" stop-color="#006599"/><stop offset="1" stop-color="#005999"/></linearGradient>
<linearGradient id="o162" gradientUnits="userSpaceOnUse" x1="1096" y1="475.8" x2="844" y2="623.7"><stop offset=".307" stop-color="#107a99"/><stop offset=".363" stop-color="#079"/><stop offset="1" stop-color="#005d99"/></linearGradient>
<linearGradient id="o163" gradientUnits="userSpaceOnUse" x1="1096" y1="475.8" x2="841.3" y2="616"><stop offset=".305" stop-color="#117d99"/><stop offset=".362" stop-color="#007999"/><stop offset="1" stop-color="#006199"/></linearGradient>
<linearGradient id="o164" gradientUnits="userSpaceOnUse" x1="1096" y1="475.8" x2="838.6" y2="608.4"><stop offset=".303" stop-color="#117f99"/><stop offset=".36" stop-color="#007c99"/><stop offset="1" stop-color="#006599"/></linearGradient>
<linearGradient id="o165" gradientUnits="userSpaceOnUse" x1="1096" y1="475.8" x2="836.1" y2="600.8"><stop offset=".302" stop-color="#118299"/><stop offset=".358" stop-color="#007f99"/><stop offset="1" stop-color="#006999"/></linearGradient>
<linearGradient id="o166" gradientUnits="userSpaceOnUse" x1="1096" y1="475.8" x2="833.5" y2="593.2"><stop offset=".3" stop-color="#118499"/><stop offset=".357" stop-color="#008299"/><stop offset="1" stop-color="#006e99"/></linearGradient>
<linearGradient id="o167" gradientUnits="userSpaceOnUse" x1="1096" y1="475.8" x2="830.9" y2="585.6"><stop offset=".298" stop-color="#118799"/><stop offset=".351" stop-color="#008599"/><stop offset="1" stop-color="#007299"/></linearGradient>
<linearGradient id="o168" gradientUnits="userSpaceOnUse" x1="1096" y1="475.8" x2="828.5" y2="577.9"><stop offset=".297" stop-color="#128a99"/><stop offset=".349" stop-color="#089"/><stop offset="1" stop-color="#079"/></linearGradient>
<linearGradient id="o169" gradientUnits="userSpaceOnUse" x1="1096" y1="475.8" x2="826" y2="570.3"><stop offset=".295" stop-color="#128c99"/><stop offset=".348" stop-color="#008b99"/><stop offset="1" stop-color="#007d99"/></linearGradient>
<linearGradient id="o170" gradientUnits="userSpaceOnUse" x1="1096" y1="475.8" x2="823.6" y2="562.7"><stop offset=".293" stop-color="#128f99"/><stop offset=".346" stop-color="#008e99"/><stop offset="1" stop-color="#008299"/></linearGradient>
<linearGradient id="o171" gradientUnits="userSpaceOnUse" x1="1096" y1="475.8" x2="821.2" y2="555.1"><stop offset=".292" stop-color="#129299"/><stop offset=".345" stop-color="#009199"/><stop offset="1" stop-color="#089"/></linearGradient>
<linearGradient id="o172" gradientUnits="userSpaceOnUse" x1="1096" y1="475.8" x2="818.8" y2="547.4"><stop offset=".29" stop-color="#139499"/><stop offset=".344" stop-color="#009499"/><stop offset="1" stop-color="#008e99"/></linearGradient>
<linearGradient id="o173" gradientUnits="userSpaceOnUse" x1="1096" y1="475.8" x2="816.5" y2="539.8"><stop offset=".289" stop-color="#139799"/><stop offset=".342" stop-color="#009799"/><stop offset="1" stop-color="#009599"/></linearGradient>
<linearGradient id="o174" gradientUnits="userSpaceOnUse" x1="1096" y1="475.8" x2="814.2" y2="532.1"><stop offset=".288" stop-color="#139998"/><stop offset=".341" stop-color="#009998"/><stop offset="1" stop-color="#009996"/></linearGradient>
<linearGradient id="o175" gradientUnits="userSpaceOnUse" x1="1096" y1="475.8" x2="811.9" y2="524.3"><stop offset=".287" stop-color="#139995"/><stop offset=".34" stop-color="#009994"/><stop offset="1" stop-color="#00998f"/></linearGradient>
<linearGradient id="o176" gradientUnits="userSpaceOnUse" x1="1096" y1="475.8" x2="809.7" y2="516.6"><stop offset=".285" stop-color="#139992"/><stop offset=".339" stop-color="#009991"/><stop offset="1" stop-color="#098"/></linearGradient>
<linearGradient id="o177" gradientUnits="userSpaceOnUse" x1="1096" y1="475.8" x2="807.5" y2="508.8"><stop offset=".284" stop-color="#13998f"/><stop offset=".338" stop-color="#00998e"/><stop offset="1" stop-color="#009981"/></linearGradient>
<linearGradient id="o178" gradientUnits="userSpaceOnUse" x1="1096" y1="475.8" x2="805.3" y2="500.9"><stop offset=".283" stop-color="#13998c"/><stop offset=".337" stop-color="#00998b"/><stop offset="1" stop-color="#00997b"/></linearGradient>
<linearGradient id="o179" gradientUnits="userSpaceOnUse" x1="1096" y1="475.8" x2="803.2" y2="493"><stop offset=".282" stop-color="#13998a"/><stop offset=".336" stop-color="#009987"/><stop offset="1" stop-color="#009974"/></linearGradient>
<linearGradient id="o180" gradientUnits="userSpaceOnUse" x1="1096" y1="475.8" x2="801.1" y2="485.1"><stop offset=".281" stop-color="#139987"/><stop offset=".33" stop-color="#009985"/><stop offset="1" stop-color="#00996e"/></linearGradient>
<linearGradient id="o181" gradientUnits="userSpaceOnUse" x1="1096" y1="475.8" x2="799.1" y2="477.1"><stop offset=".28" stop-color="#129984"/><stop offset=".329" stop-color="#009982"/><stop offset="1" stop-color="#009968"/></linearGradient>
<linearGradient id="o182" gradientUnits="userSpaceOnUse" x1="1096" y1="475.8" x2="797.2" y2="469.1"><stop offset=".279" stop-color="#129982"/><stop offset=".329" stop-color="#00997f"/><stop offset="1" stop-color="#009962"/></linearGradient>
<linearGradient id="o183" gradientUnits="userSpaceOnUse" x1="1096" y1="475.8" x2="795.3" y2="461"><stop offset=".278" stop-color="#12997f"/><stop offset=".328" stop-color="#00997c"/><stop offset=".63" stop-color="#00996a"/><stop offset="1" stop-color="#00995c"/></linearGradient>
<linearGradient id="o184" gradientUnits="userSpaceOnUse" x1="1096" y1="475.8" x2="793.4" y2="452.8"><stop offset=".278" stop-color="#12997d"/><stop offset=".327" stop-color="#009979"/><stop offset=".63" stop-color="#096"/><stop offset="1" stop-color="#009956"/></linearGradient>
<linearGradient id="o185" gradientUnits="userSpaceOnUse" x1="1096" y1="475.8" x2="791.7" y2="444.6"><stop offset=".277" stop-color="#12997a"/><stop offset=".327" stop-color="#009976"/><stop offset=".629" stop-color="#009961"/><stop offset="1" stop-color="#009951"/></linearGradient>
<linearGradient id="o186" gradientUnits="userSpaceOnUse" x1="1096" y1="475.8" x2="790" y2="436.3"><stop offset=".276" stop-color="#129977"/><stop offset=".326" stop-color="#009973"/><stop offset=".629" stop-color="#00995d"/><stop offset="1" stop-color="#00994b"/></linearGradient>
<linearGradient id="o187" gradientUnits="userSpaceOnUse" x1="1096" y1="475.8" x2="788.4" y2="428"><stop offset=".276" stop-color="#129975"/><stop offset=".326" stop-color="#009970"/><stop offset=".629" stop-color="#009959"/><stop offset="1" stop-color="#009946"/></linearGradient>
<linearGradient id="o188" gradientUnits="userSpaceOnUse" x1="1096" y1="475.8" x2="786.9" y2="419.6"><stop offset=".275" stop-color="#129972"/><stop offset=".325" stop-color="#00996d"/><stop offset=".629" stop-color="#009954"/><stop offset="1" stop-color="#009940"/></linearGradient>
<linearGradient id="o189" gradientUnits="userSpaceOnUse" x1="1096" y1="475.8" x2="785.6" y2="411.1"><stop offset=".275" stop-color="#129970"/><stop offset=".325" stop-color="#00996a"/><stop offset=".629" stop-color="#009950"/><stop offset="1" stop-color="#00993b"/></linearGradient>
<linearGradient id="o190" gradientUnits="userSpaceOnUse" x1="1096" y1="475.8" x2="784.4" y2="402.6"><stop offset=".275" stop-color="#12996d"/><stop offset=".325" stop-color="#009967"/><stop offset=".628" stop-color="#00994c"/><stop offset="1" stop-color="#009936"/></linearGradient>
<linearGradient id="o191" gradientUnits="userSpaceOnUse" x1="1096" y1="475.8" x2="783.3" y2="394.1"><stop offset=".275" stop-color="#12996b"/><stop offset=".325" stop-color="#009964"/><stop offset=".624" stop-color="#009948"/><stop offset="1" stop-color="#009931"/></linearGradient>
<linearGradient id="o192" gradientUnits="userSpaceOnUse" x1="1096" y1="475.8" x2="782.4" y2="385.5"><stop offset=".275" stop-color="#129968"/><stop offset=".325" stop-color="#009962"/><stop offset=".624" stop-color="#094"/><stop offset="1" stop-color="#00992c"/></linearGradient>
<linearGradient id="o193" gradientUnits="userSpaceOnUse" x1="1096" y1="475.8" x2="781.8" y2="376.9"><stop offset=".276" stop-color="#196"/><stop offset=".326" stop-color="#00995f"/><stop offset=".624" stop-color="#009940"/><stop offset="1" stop-color="#009927"/></linearGradient>
<linearGradient id="o194" gradientUnits="userSpaceOnUse" x1="1096" y1="475.8" x2="781.5" y2="368.3"><stop offset=".276" stop-color="#119963"/><stop offset=".326" stop-color="#00995c"/><stop offset=".625" stop-color="#00993c"/><stop offset="1" stop-color="#092"/></linearGradient>
<linearGradient id="o195" gradientUnits="userSpaceOnUse" x1="1096" y1="475.8" x2="781.5" y2="359.8"><stop offset=".277" stop-color="#119960"/><stop offset=".327" stop-color="#009959"/><stop offset=".625" stop-color="#009938"/><stop offset="1" stop-color="#00991d"/></linearGradient>
<linearGradient id="o196" gradientUnits="userSpaceOnUse" x1="1096" y1="475.8" x2="781.8" y2="351.3"><stop offset=".279" stop-color="#11995e"/><stop offset=".328" stop-color="#009956"/><stop offset=".626" stop-color="#009934"/><stop offset="1" stop-color="#009918"/></linearGradient>
<linearGradient id="o197" gradientUnits="userSpaceOnUse" x1="1096" y1="475.8" x2="782.7" y2="343"><stop offset=".281" stop-color="#11995b"/><stop offset=".33" stop-color="#009953"/><stop offset=".627" stop-color="#009930"/><stop offset="1" stop-color="#009914"/></linearGradient>
<linearGradient id="o198" gradientUnits="userSpaceOnUse" x1="1096" y1="475.8" x2="784.1" y2="334.9"><stop offset=".283" stop-color="#119959"/><stop offset=".337" stop-color="#009950"/><stop offset=".632" stop-color="#00992c"/><stop offset="1" stop-color="#009910"/></linearGradient>
<linearGradient id="o199" gradientUnits="userSpaceOnUse" x1="1096" y1="475.8" x2="786.2" y2="327"><stop offset=".286" stop-color="#119956"/><stop offset=".339" stop-color="#00994d"/><stop offset=".634" stop-color="#009928"/><stop offset="1" stop-color="#00990b"/></linearGradient>
<linearGradient id="o200" gradientUnits="userSpaceOnUse" x1="1096" y1="475.8" x2="789" y2="319.5"><stop offset=".29" stop-color="#119953"/><stop offset=".343" stop-color="#00994a"/><stop offset=".636" stop-color="#009925"/><stop offset="1" stop-color="#009907"/></linearGradient>
<linearGradient id="o201" gradientUnits="userSpaceOnUse" x1="1096" y1="475.8" x2="792.8" y2="312.4"><stop offset=".294" stop-color="#119950"/><stop offset=".347" stop-color="#009947"/><stop offset=".638" stop-color="#009921"/><stop offset="1" stop-color="#009904"/></linearGradient>
<linearGradient id="o202" gradientUnits="userSpaceOnUse" x1="1096" y1="475.8" x2="797.8" y2="306"><stop offset=".301" stop-color="#11994e"/><stop offset=".357" stop-color="#094"/><stop offset=".642" stop-color="#00991e"/><stop offset="1" stop-color="#090"/></linearGradient>
<linearGradient id="o203" gradientUnits="userSpaceOnUse" x1="1096" y1="475.8" x2="804.1" y2="300.5"><stop offset=".308" stop-color="#11994b"/><stop offset=".365" stop-color="#009941"/><stop offset=".68" stop-color="#009918"/><stop offset=".935" stop-color="#009902"/><stop offset="1" stop-color="#090"/></linearGradient>
<linearGradient id="o204" gradientUnits="userSpaceOnUse" x1="1096" y1="475.8" x2="812" y2="296"><stop offset=".318" stop-color="#109948"/><stop offset=".378" stop-color="#00993d"/><stop offset=".723" stop-color="#091"/><stop offset=".919" stop-color="#090"/><stop offset="1" stop-color="#090"/></linearGradient>
<linearGradient id="o205" gradientUnits="userSpaceOnUse" x1="1096" y1="475.8" x2="821.6" y2="292.8"><stop offset=".331" stop-color="#109945"/><stop offset=".39" stop-color="#00993a"/><stop offset=".565" stop-color="#009921"/><stop offset=".766" stop-color="#00990b"/><stop offset=".891" stop-color="#090"/><stop offset="1" stop-color="#090"/></linearGradient>
<linearGradient id="o206" gradientUnits="userSpaceOnUse" x1="1096" y1="475.8" x2="832.7" y2="290.8"><stop offset=".347" stop-color="#109941"/><stop offset=".408" stop-color="#009937"/><stop offset=".596" stop-color="#00991c"/><stop offset=".808" stop-color="#009906"/><stop offset=".873" stop-color="#090"/><stop offset="1" stop-color="#090"/></linearGradient>
<linearGradient id="o207" gradientUnits="userSpaceOnUse" x1="1096" y1="475.8" x2="844.8" y2="289.9"><stop offset=".365" stop-color="#10993e"/><stop offset=".433" stop-color="#093"/><stop offset=".631" stop-color="#009918"/><stop offset=".857" stop-color="#090"/><stop offset="1" stop-color="#090"/></linearGradient>
<linearGradient id="o208" gradientUnits="userSpaceOnUse" x1="1096" y1="475.8" x2="857.4" y2="289.5"><stop offset=".387" stop-color="#10993a"/><stop offset=".456" stop-color="#00992f"/><stop offset=".64" stop-color="#009916"/><stop offset=".851" stop-color="#090"/><stop offset="1" stop-color="#090"/></linearGradient>
<linearGradient id="o209" gradientUnits="userSpaceOnUse" x1="1096" y1="475.8" x2="869.9" y2="289.5"><stop offset=".411" stop-color="#109936"/><stop offset=".485" stop-color="#00992b"/><stop offset=".842" stop-color="#090"/><stop offset="1" stop-color="#090"/></linearGradient>
<linearGradient id="o210" gradientUnits="userSpaceOnUse" x1="1096" y1="475.8" x2="882.5" y2="289.8"><stop offset=".438" stop-color="#109932"/><stop offset=".515" stop-color="#009926"/><stop offset=".835" stop-color="#090"/><stop offset="1" stop-color="#090"/></linearGradient>
<linearGradient id="o211" gradientUnits="userSpaceOnUse" x1="1096" y1="475.8" x2="895" y2="290.5"><stop offset=".469" stop-color="#10992d"/><stop offset=".552" stop-color="#009921"/><stop offset=".831" stop-color="#090"/><stop offset="1" stop-color="#090"/></linearGradient>
<linearGradient id="o212" gradientUnits="userSpaceOnUse" x1="1096" y1="475.8" x2="907.3" y2="291.3"><stop offset=".503" stop-color="#0f9928"/><stop offset=".593" stop-color="#00991c"/><stop offset=".829" stop-color="#090"/><stop offset="1" stop-color="#090"/></linearGradient>
<linearGradient id="o213" gradientUnits="userSpaceOnUse" x1="1096" y1="475.8" x2="919.4" y2="292.4"><stop offset=".543" stop-color="#0f9923"/><stop offset=".64" stop-color="#009916"/><stop offset=".826" stop-color="#090"/><stop offset="1" stop-color="#090"/></linearGradient>
<linearGradient id="o214" gradientUnits="userSpaceOnUse" x1="1096" y1="475.8" x2="931.3" y2="293.6"><stop offset=".587" stop-color="#0f991d"/><stop offset=".691" stop-color="#00990f"/><stop offset=".825" stop-color="#090"/><stop offset="1" stop-color="#090"/></linearGradient>
<linearGradient id="o215" gradientUnits="userSpaceOnUse" x1="1096" y1="475.8" x2="942.8" y2="294.8"><stop offset=".639" stop-color="#0f9916"/><stop offset=".752" stop-color="#009908"/><stop offset=".826" stop-color="#090"/><stop offset="1" stop-color="#090"/></linearGradient>
<linearGradient id="o216" gradientUnits="userSpaceOnUse" x1="1096" y1="475.8" x2="954.1" y2="296.1"><stop offset=".698" stop-color="#0f990f"/><stop offset=".824" stop-color="#090"/><stop offset="1" stop-color="#090"/></linearGradient>
<linearGradient id="o217" gradientUnits="userSpaceOnUse" x1="1096" y1="475.8" x2="965" y2="297.5"><stop offset=".701" stop-color="#16990f"/><stop offset=".825" stop-color="#089900"/><stop offset=".903" stop-color="#090"/><stop offset="1" stop-color="#090"/></linearGradient>
<linearGradient id="o218" gradientUnits="userSpaceOnUse" x1="1096" y1="475.8" x2="975.6" y2="298.8"><stop offset=".702" stop-color="#1e990f"/><stop offset=".827" stop-color="#109900"/><stop offset="1" stop-color="#090"/></linearGradient>
<linearGradient id="o219" gradientUnits="userSpaceOnUse" x1="1096" y1="475.8" x2="985.8" y2="300.2"><stop offset=".702" stop-color="#25990f"/><stop offset=".827" stop-color="#199900"/><stop offset="1" stop-color="#099900"/></linearGradient>
<linearGradient id="o220" gradientUnits="userSpaceOnUse" x1="1096" y1="475.8" x2="995.8" y2="301.5"><stop offset=".703" stop-color="#2d990f"/><stop offset=".827" stop-color="#219900"/><stop offset="1" stop-color="#129900"/></linearGradient>
<linearGradient id="o221" gradientUnits="userSpaceOnUse" x1="1096" y1="475.8" x2="1005.6" y2="302.8"><stop offset=".704" stop-color="#359910"/><stop offset=".828" stop-color="#2a9900"/><stop offset="1" stop-color="#1c9900"/></linearGradient>
<linearGradient id="o222" gradientUnits="userSpaceOnUse" x1="1096" y1="475.8" x2="1015" y2="304.2"><stop offset=".704" stop-color="#3d9910"/><stop offset=".828" stop-color="#329900"/><stop offset="1" stop-color="#259900"/></linearGradient>
<linearGradient id="o223" gradientUnits="userSpaceOnUse" x1="1096" y1="475.8" x2="1024.2" y2="305.4"><stop offset=".705" stop-color="#459910"/><stop offset=".831" stop-color="#3b9900"/><stop offset="1" stop-color="#2f9900"/></linearGradient>
<linearGradient id="o224" gradientUnits="userSpaceOnUse" x1="1096" y1="475.8" x2="1033.2" y2="306.7"><stop offset=".706" stop-color="#4d9910"/><stop offset=".831" stop-color="#439900"/><stop offset="1" stop-color="#389900"/></linearGradient>
<linearGradient id="o225" gradientUnits="userSpaceOnUse" x1="1096" y1="475.8" x2="1042" y2="308"><stop offset=".707" stop-color="#591"/><stop offset=".832" stop-color="#4c9900"/><stop offset="1" stop-color="#429900"/></linearGradient>
<linearGradient id="o226" gradientUnits="userSpaceOnUse" x1="1096" y1="475.8" x2="1050.6" y2="309.2"><stop offset=".708" stop-color="#5d9911"/><stop offset=".832" stop-color="#590"/><stop offset="1" stop-color="#4c9900"/></linearGradient>
<linearGradient id="o227" gradientUnits="userSpaceOnUse" x1="1096" y1="475.8" x2="1059.1" y2="310.4"><stop offset=".709" stop-color="#659911"/><stop offset=".834" stop-color="#5e9900"/><stop offset="1" stop-color="#569900"/></linearGradient>
<linearGradient id="o228" gradientUnits="userSpaceOnUse" x1="1096" y1="475.8" x2="1067.4" y2="311.6"><stop offset=".71" stop-color="#6d9911"/><stop offset=".835" stop-color="#689900"/><stop offset="1" stop-color="#619900"/></linearGradient>
<linearGradient id="o229" gradientUnits="userSpaceOnUse" x1="1096" y1="475.8" x2="1075.6" y2="312.8"><stop offset=".71" stop-color="#769912"/><stop offset=".835" stop-color="#719900"/><stop offset="1" stop-color="#6b9900"/></linearGradient>
<linearGradient id="o230" gradientUnits="userSpaceOnUse" x1="1096" y1="475.8" x2="1083.7" y2="313.9"><stop offset=".711" stop-color="#7e9912"/><stop offset=".838" stop-color="#7b9900"/><stop offset="1" stop-color="#769900"/></linearGradient>
<linearGradient id="o231" gradientUnits="userSpaceOnUse" x1="1096" y1="475.8" x2="1091.8" y2="315.1"><stop offset=".712" stop-color="#879912"/><stop offset=".838" stop-color="#849900"/><stop offset="1" stop-color="#829900"/></linearGradient>
<linearGradient id="o232" gradientUnits="userSpaceOnUse" x1="1096" y1="475.8" x2="1099.7" y2="316.3"><stop offset=".713" stop-color="#909912"/><stop offset=".839" stop-color="#8f9900"/><stop offset="1" stop-color="#8d9900"/></linearGradient>
<linearGradient id="o233" gradientUnits="userSpaceOnUse" x1="1096" y1="475.8" x2="1107.7" y2="317.4"><stop offset=".714" stop-color="#999913"/><stop offset=".841" stop-color="#990"/><stop offset="1" stop-color="#990"/></linearGradient>
<linearGradient id="o234" gradientUnits="userSpaceOnUse" x1="1096" y1="475.8" x2="1115.6" y2="318.6"><stop offset=".715" stop-color="#999012"/><stop offset=".842" stop-color="#998f00"/><stop offset="1" stop-color="#998d00"/></linearGradient>
<linearGradient id="o235" gradientUnits="userSpaceOnUse" x1="1096" y1="475.8" x2="1123.5" y2="319.7"><stop offset=".716" stop-color="#981"/><stop offset=".842" stop-color="#998600"/><stop offset="1" stop-color="#998300"/></linearGradient>
<linearGradient id="o236" gradientUnits="userSpaceOnUse" x1="1096" y1="475.8" x2="1131.4" y2="320.9"><stop offset=".717" stop-color="#998010"/><stop offset=".844" stop-color="#997d00"/><stop offset="1" stop-color="#997a00"/></linearGradient>
<linearGradient id="o237" gradientUnits="userSpaceOnUse" x1="1096" y1="475.8" x2="1139.4" y2="322.1"><stop offset=".718" stop-color="#997910"/><stop offset=".845" stop-color="#997600"/><stop offset="1" stop-color="#997200"/></linearGradient>
<linearGradient id="o238" gradientUnits="userSpaceOnUse" x1="1096" y1="475.8" x2="1147.4" y2="323.2"><stop offset=".719" stop-color="#99730f"/><stop offset=".845" stop-color="#996e00"/><stop offset="1" stop-color="#996a00"/></linearGradient>
<linearGradient id="o239" gradientUnits="userSpaceOnUse" x1="1096" y1="475.8" x2="1155.6" y2="324.4"><stop offset=".72" stop-color="#996c0f"/><stop offset=".848" stop-color="#996800"/><stop offset="1" stop-color="#996300"/></linearGradient>
<linearGradient id="o240" gradientUnits="userSpaceOnUse" x1="1096" y1="475.8" x2="1163.8" y2="325.7"><stop offset=".721" stop-color="#99670e"/><stop offset=".848" stop-color="#996200"/><stop offset="1" stop-color="#995c00"/></linearGradient>
<linearGradient id="o241" gradientUnits="userSpaceOnUse" x1="1096" y1="475.8" x2="1172.1" y2="326.9"><stop offset=".722" stop-color="#99610d"/><stop offset=".849" stop-color="#995c00"/><stop offset="1" stop-color="#995600"/></linearGradient>
<linearGradient id="o242" gradientUnits="userSpaceOnUse" x1="1096" y1="475.8" x2="1180.6" y2="328.1"><stop offset=".723" stop-color="#995c0d"/><stop offset=".851" stop-color="#995600"/><stop offset="1" stop-color="#995100"/></linearGradient>
<linearGradient id="o243" gradientUnits="userSpaceOnUse" x1="1096" y1="475.8" x2="1189.3" y2="329.4"><stop offset=".724" stop-color="#99570d"/><stop offset=".852" stop-color="#995100"/><stop offset="1" stop-color="#994b00"/></linearGradient>
<linearGradient id="o244" gradientUnits="userSpaceOnUse" x1="1096" y1="475.8" x2="1198.2" y2="330.7"><stop offset=".725" stop-color="#99520c"/><stop offset=".854" stop-color="#994c00"/><stop offset="1" stop-color="#994600"/></linearGradient>
<linearGradient id="o245" gradientUnits="userSpaceOnUse" x1="1096" y1="475.8" x2="1207.2" y2="332"><stop offset=".727" stop-color="#994e0c"/><stop offset=".855" stop-color="#994800"/><stop offset="1" stop-color="#994200"/></linearGradient>
<linearGradient id="o246" gradientUnits="userSpaceOnUse" x1="1096" y1="475.8" x2="1216.6" y2="333.4"><stop offset=".728" stop-color="#99490b"/><stop offset=".855" stop-color="#994300"/><stop offset="1" stop-color="#993d00"/></linearGradient>
<linearGradient id="o247" gradientUnits="userSpaceOnUse" x1="1096" y1="475.8" x2="1226.1" y2="334.8"><stop offset=".729" stop-color="#99450b"/><stop offset=".858" stop-color="#993f00"/><stop offset="1" stop-color="#993900"/></linearGradient>
<linearGradient id="o248" gradientUnits="userSpaceOnUse" x1="1096" y1="475.8" x2="1236" y2="336.3"><stop offset=".73" stop-color="#99410b"/><stop offset=".858" stop-color="#993b00"/><stop offset="1" stop-color="#993500"/></linearGradient>
<linearGradient id="o249" gradientUnits="userSpaceOnUse" x1="1096" y1="475.8" x2="1246.2" y2="337.8"><stop offset=".731" stop-color="#993d0a"/><stop offset=".861" stop-color="#993700"/><stop offset="1" stop-color="#993100"/></linearGradient>
<linearGradient id="o250" gradientUnits="userSpaceOnUse" x1="1096" y1="475.8" x2="1256.7" y2="339.3"><stop offset=".733" stop-color="#993a0a"/><stop offset=".861" stop-color="#930"/><stop offset="1" stop-color="#992d00"/></linearGradient>
<linearGradient id="o251" gradientUnits="userSpaceOnUse" x1="1096" y1="475.8" x2="1267.6" y2="340.9"><stop offset=".734" stop-color="#993609"/><stop offset=".864" stop-color="#992f00"/><stop offset="1" stop-color="#992a00"/></linearGradient>
<linearGradient id="o252" gradientUnits="userSpaceOnUse" x1="1096" y1="475.8" x2="1279" y2="342.6"><stop offset=".736" stop-color="#993209"/><stop offset=".866" stop-color="#992c00"/><stop offset="1" stop-color="#992600"/></linearGradient>
<linearGradient id="o253" gradientUnits="userSpaceOnUse" x1="1096" y1="475.8" x2="1290.7" y2="344.3"><stop offset=".737" stop-color="#992f09"/><stop offset=".867" stop-color="#992800"/><stop offset="1" stop-color="#992300"/></linearGradient>
<linearGradient id="o254" gradientUnits="userSpaceOnUse" x1="1096" y1="475.8" x2="1302.9" y2="346.1"><stop offset=".739" stop-color="#992c09"/><stop offset=".869" stop-color="#992500"/><stop offset="1" stop-color="#992000"/></linearGradient>
<linearGradient id="o255" gradientUnits="userSpaceOnUse" x1="1096" y1="475.8" x2="1315.6" y2="347.9"><stop offset=".74" stop-color="#992808"/><stop offset=".87" stop-color="#920"/><stop offset="1" stop-color="#991d00"/></linearGradient>
<linearGradient id="o256" gradientUnits="userSpaceOnUse" x1="1096" y1="475.8" x2="1328.8" y2="349.9"><stop offset=".742" stop-color="#992508"/><stop offset=".873" stop-color="#991f00"/><stop offset="1" stop-color="#991a00"/></linearGradient>
<linearGradient id="o257" gradientUnits="userSpaceOnUse" x1="1096" y1="475.8" x2="1342.6" y2="351.9"><stop offset=".744" stop-color="#992208"/><stop offset=".875" stop-color="#991c00"/><stop offset="1" stop-color="#991700"/></linearGradient>
<linearGradient id="o258" gradientUnits="userSpaceOnUse" x1="1096" y1="475.8" x2="1356.9" y2="354"><stop offset=".746" stop-color="#991f07"/><stop offset=".878" stop-color="#991900"/><stop offset="1" stop-color="#991400"/></linearGradient>
<linearGradient id="o259" gradientUnits="userSpaceOnUse" x1="1096" y1="475.8" x2="1371.9" y2="356.2"><stop offset=".748" stop-color="#991c07"/><stop offset=".88" stop-color="#991600"/><stop offset="1" stop-color="#991200"/></linearGradient>
<linearGradient id="o260" gradientUnits="userSpaceOnUse" x1="1096" y1="475.8" x2="1387.6" y2="358.6"><stop offset=".75" stop-color="#991907"/><stop offset=".883" stop-color="#991300"/><stop offset="1" stop-color="#990f00"/></linearGradient>
<linearGradient id="o261" gradientUnits="userSpaceOnUse" x1="1096" y1="475.8" x2="1404.1" y2="361"><stop offset=".752" stop-color="#991607"/><stop offset=".885" stop-color="#910"/><stop offset="1" stop-color="#990d00"/></linearGradient>
<linearGradient id="o262" gradientUnits="userSpaceOnUse" x1="1096" y1="475.8" x2="1421.3" y2="363.5"><stop offset=".755" stop-color="#991406"/><stop offset="1" stop-color="#990a00"/></linearGradient>
<linearGradient id="o263" gradientUnits="userSpaceOnUse" x1="1096" y1="475.8" x2="1439.3" y2="366.1"><stop offset=".757" stop-color="#991106"/><stop offset="1" stop-color="#990800"/></linearGradient>
<linearGradient id="o264" gradientUnits="userSpaceOnUse" x1="1096" y1="475.8" x2="1458.1" y2="368.9"><stop offset=".76" stop-color="#990f06"/><stop offset="1" stop-color="#990600"/></linearGradient>
<linearGradient id="o265" gradientUnits="userSpaceOnUse" x1="1096" y1="475.8" x2="1477.9" y2="371.8"><stop offset=".762" stop-color="#990c06"/><stop offset="1" stop-color="#990300"/></linearGradient>
<linearGradient id="o266" gradientUnits="userSpaceOnUse" x1="1096" y1="475.8" x2="1498.7" y2="374.8"><stop offset=".765" stop-color="#990a05"/><stop offset="1" stop-color="#990100"/></linearGradient>
<linearGradient id="o267" gradientUnits="userSpaceOnUse" x1="1096" y1="475.8" x2="1520.5" y2="378"><stop offset=".768" stop-color="#990705"/><stop offset="1" stop-color="#900"/></linearGradient>
<linearGradient id="o268" gradientUnits="userSpaceOnUse" x1="1096" y1="475.8" x2="1543.3" y2="381.4"><stop offset=".769" stop-color="#990505"/><stop offset="1" stop-color="#900"/></linearGradient>
<linearGradient id="o269" gradientUnits="userSpaceOnUse" x1="1096" y1="475.8" x2="1567.3" y2="384.9"><stop offset=".718" stop-color="#990507"/><stop offset="1" stop-color="#900"/></linearGradient>
<linearGradient id="o270" gradientUnits="userSpaceOnUse" x1="1096" y1="475.8" x2="1592.5" y2="388.6"><stop offset=".671" stop-color="#990509"/><stop offset=".79" stop-color="#990004"/><stop offset="1" stop-color="#900"/></linearGradient>
<linearGradient id="o271" gradientUnits="userSpaceOnUse" x1="1096" y1="475.8" x2="1618.9" y2="392.5"><stop offset=".628" stop-color="#99050b"/><stop offset=".739" stop-color="#990006"/><stop offset="1" stop-color="#900"/></linearGradient>
<linearGradient id="o272" gradientUnits="userSpaceOnUse" x1="1096" y1="475.8" x2="1646.7" y2="396.6"><stop offset=".588" stop-color="#99050d"/><stop offset=".694" stop-color="#990008"/><stop offset="1" stop-color="#900"/></linearGradient>
<linearGradient id="o273" gradientUnits="userSpaceOnUse" x1="1096" y1="475.8" x2="1675.9" y2="400.9"><stop offset=".552" stop-color="#99050e"/><stop offset=".65" stop-color="#990009"/><stop offset="1" stop-color="#900"/></linearGradient>
<linearGradient id="o274" gradientUnits="userSpaceOnUse" x1="1096" y1="475.8" x2="1706.6" y2="405.4"><stop offset=".518" stop-color="#990510"/><stop offset=".611" stop-color="#99000b"/><stop offset="1" stop-color="#900"/></linearGradient>
<linearGradient id="o275" gradientUnits="userSpaceOnUse" x1="1096" y1="475.8" x2="1738.9" y2="410.1"><stop offset=".486" stop-color="#990511"/><stop offset=".573" stop-color="#99000c"/><stop offset="1" stop-color="#900"/></linearGradient>
<linearGradient id="o276" gradientUnits="userSpaceOnUse" x1="1096" y1="475.8" x2="1773" y2="415.1"><stop offset=".457" stop-color="#990513"/><stop offset=".539" stop-color="#99000e"/><stop offset="1" stop-color="#900"/></linearGradient>
<linearGradient id="o277" gradientUnits="userSpaceOnUse" x1="1096" y1="475.8" x2="1771.4" y2="423.6"><stop offset=".454" stop-color="#990614"/><stop offset=".536" stop-color="#99000f"/><stop offset="1" stop-color="#900"/></linearGradient>
<linearGradient id="o278" gradientUnits="userSpaceOnUse" x1="1096" y1="475.8" x2="1764.8" y2="432.3"><stop offset=".454" stop-color="#990616"/><stop offset=".535" stop-color="#901"/><stop offset="1" stop-color="#990002"/></linearGradient>
<linearGradient id="o279" gradientUnits="userSpaceOnUse" x1="1096" y1="475.8" x2="1758.3" y2="440.9"><stop offset=".453" stop-color="#990617"/><stop offset=".535" stop-color="#990012"/><stop offset="1" stop-color="#990003"/></linearGradient>
<linearGradient id="o280" gradientUnits="userSpaceOnUse" x1="1096" y1="475.8" x2="1751.9" y2="449.2"><stop offset=".453" stop-color="#990618"/><stop offset=".535" stop-color="#990013"/><stop offset="1" stop-color="#990004"/></linearGradient>
<linearGradient id="o281" gradientUnits="userSpaceOnUse" x1="1096" y1="475.8" x2="1745.6" y2="457.4"><stop offset=".453" stop-color="#99061a"/><stop offset=".535" stop-color="#990015"/><stop offset="1" stop-color="#990006"/></linearGradient>
<linearGradient id="o282" gradientUnits="userSpaceOnUse" x1="1096" y1="475.8" x2="1739.5" y2="465.5"><stop offset=".453" stop-color="#99061b"/><stop offset=".535" stop-color="#990016"/><stop offset="1" stop-color="#990007"/></linearGradient>
<linearGradient id="o283" gradientUnits="userSpaceOnUse" x1="1096" y1="475.8" x2="1734" y2="472.7"><stop offset=".453" stop-color="#99061c"/><stop offset=".535" stop-color="#990017"/><stop offset="1" stop-color="#990008"/></linearGradient>
<linearGradient id="i0" gradientUnits="userSpaceOnUse" x1="1096" y1="475.8" x2="1432" y2="479.8"><stop offset="0" stop-color="#fff"/><stop offset=".062" stop-color="#ffc5ce"/><stop offset=".131" stop-color="#f9a"/><stop offset=".219" stop-color="#ff7289"/><stop offset=".325" stop-color="#ff516e"/><stop offset=".45" stop-color="#ff3758"/><stop offset=".6" stop-color="#ff2146"/><stop offset="1" stop-color="#ff002a"/></linearGradient>
<linearGradient id="i1" gradientUnits="userSpaceOnUse" x1="1096" y1="475.8" x2="1426" y2="487.6"><stop offset="0" stop-color="#fff"/><stop offset=".062" stop-color="#ffc6d0"/><stop offset=".131" stop-color="#ff9aac"/><stop offset=".219" stop-color="#ff738c"/><stop offset=".325" stop-color="#ff5272"/><stop offset=".45" stop-color="#ff385c"/><stop offset=".6" stop-color="#ff224a"/><stop offset="1" stop-color="#ff002e"/></linearGradient>
<linearGradient id="i2" gradientUnits="userSpaceOnUse" x1="1096" y1="475.8" x2="1420.1" y2="495.3"><stop offset="0" stop-color="#fff"/><stop offset=".062" stop-color="#ffc6d2"/><stop offset=".131" stop-color="#ff9baf"/><stop offset=".219" stop-color="#ff7490"/><stop offset=".325" stop-color="#ff5376"/><stop offset=".45" stop-color="#ff3960"/><stop offset=".6" stop-color="#ff224e"/><stop offset="1" stop-color="#f03"/></linearGradient>
<linearGradient id="i3" gradientUnits="userSpaceOnUse" x1="1096" y1="475.8" x2="1414.3" y2="502.8"><stop offset="0" stop-color="#fff"/><stop offset=".062" stop-color="#ffc7d3"/><stop offset=".131" stop-color="#ff9cb1"/><stop offset=".219" stop-color="#ff7593"/><stop offset=".325" stop-color="#ff5479"/><stop offset=".45" stop-color="#ff3964"/><stop offset=".6" stop-color="#ff2353"/><stop offset="1" stop-color="#ff0037"/></linearGradient>
<linearGradient id="i4" gradientUnits="userSpaceOnUse" x1="1096" y1="475.8" x2="1408.6" y2="510.2"><stop offset="0" stop-color="#fff"/><stop offset=".062" stop-color="#ffc8d5"/><stop offset=".138" stop-color="#ff99b1"/><stop offset=".225" stop-color="#ff7494"/><stop offset=".331" stop-color="#ff537c"/><stop offset=".456" stop-color="#ff3968"/><stop offset=".606" stop-color="#ff2356"/><stop offset="1" stop-color="#ff003c"/></linearGradient>
<linearGradient id="i5" gradientUnits="userSpaceOnUse" x1="1096" y1="475.8" x2="1403" y2="517.5"><stop offset="0" stop-color="#fff"/><stop offset=".062" stop-color="#ffc8d6"/><stop offset=".138" stop-color="#ff9ab4"/><stop offset=".225" stop-color="#ff7598"/><stop offset=".331" stop-color="#ff5480"/><stop offset=".456" stop-color="#ff3a6c"/><stop offset=".606" stop-color="#ff235b"/><stop offset="1" stop-color="#ff0041"/></linearGradient>
<linearGradient id="i6" gradientUnits="userSpaceOnUse" x1="1096" y1="475.8" x2="1397.5" y2="524.7"><stop offset="0" stop-color="#fff"/><stop offset=".062" stop-color="#ffc9d8"/><stop offset=".137" stop-color="#ff9bb7"/><stop offset=".225" stop-color="#ff769b"/><stop offset=".331" stop-color="#ff5584"/><stop offset=".456" stop-color="#ff3a70"/><stop offset=".606" stop-color="#ff235f"/><stop offset="1" stop-color="#ff0046"/></linearGradient>
<linearGradient id="i7" gradientUnits="userSpaceOnUse" x1="1096" y1="475.8" x2="1392" y2="531.8"><stop offset="0" stop-color="#fff"/><stop offset=".062" stop-color="#ffcad9"/><stop offset=".138" stop-color="#ff9cb9"/><stop offset=".231" stop-color="#ff749d"/><stop offset=".338" stop-color="#ff5586"/><stop offset=".462" stop-color="#ff3a73"/><stop offset=".613" stop-color="#ff2363"/><stop offset="1" stop-color="#ff004a"/></linearGradient>
<linearGradient id="i8" gradientUnits="userSpaceOnUse" x1="1096" y1="475.8" x2="1386.6" y2="538.9"><stop offset="0" stop-color="#fff"/><stop offset=".062" stop-color="#ffcadb"/><stop offset=".137" stop-color="#ff9dbc"/><stop offset=".231" stop-color="#ff76a0"/><stop offset=".338" stop-color="#ff568a"/><stop offset=".462" stop-color="#ff3b78"/><stop offset=".613" stop-color="#ff2468"/><stop offset="1" stop-color="#ff004f"/></linearGradient>
<linearGradient id="i9" gradientUnits="userSpaceOnUse" x1="1096" y1="475.8" x2="1381.3" y2="545.8"><stop offset="0" stop-color="#fff"/><stop offset=".069" stop-color="#ffc7d9"/><stop offset=".144" stop-color="#ff9bbc"/><stop offset=".231" stop-color="#ff77a4"/><stop offset=".338" stop-color="#ff568e"/><stop offset=".462" stop-color="#ff3b7c"/><stop offset=".612" stop-color="#ff246d"/><stop offset="1" stop-color="#ff0054"/></linearGradient>
<linearGradient id="i10" gradientUnits="userSpaceOnUse" x1="1096" y1="475.8" x2="1376.1" y2="552.6"><stop offset="0" stop-color="#fff"/><stop offset=".069" stop-color="#ffc8db"/><stop offset=".144" stop-color="#ff9cbf"/><stop offset=".231" stop-color="#ff78a7"/><stop offset=".337" stop-color="#ff5792"/><stop offset=".463" stop-color="#ff3c81"/><stop offset=".613" stop-color="#ff2571"/><stop offset="1" stop-color="#ff005a"/></linearGradient>
<linearGradient id="i11" gradientUnits="userSpaceOnUse" x1="1096" y1="475.8" x2="1370.9" y2="559.4"><stop offset="0" stop-color="#fff"/><stop offset=".069" stop-color="#ffc8dd"/><stop offset=".144" stop-color="#ff9dc2"/><stop offset=".237" stop-color="#ff76a9"/><stop offset=".344" stop-color="#ff5795"/><stop offset=".469" stop-color="#ff3c84"/><stop offset=".619" stop-color="#ff2476"/><stop offset="1" stop-color="#ff005f"/></linearGradient>
<linearGradient id="i12" gradientUnits="userSpaceOnUse" x1="1096" y1="475.8" x2="1365.7" y2="566.1"><stop offset="0" stop-color="#fff"/><stop offset=".069" stop-color="#ffc9de"/><stop offset=".144" stop-color="#ff9ec4"/><stop offset=".238" stop-color="#ff78ad"/><stop offset=".344" stop-color="#ff589a"/><stop offset=".469" stop-color="#ff3d89"/><stop offset=".619" stop-color="#ff257b"/><stop offset="1" stop-color="#ff0064"/></linearGradient>
<linearGradient id="i13" gradientUnits="userSpaceOnUse" x1="1096" y1="475.8" x2="1360.6" y2="572.8"><stop offset="0" stop-color="#fff"/><stop offset=".069" stop-color="#ffcae0"/><stop offset=".144" stop-color="#ff9fc7"/><stop offset=".237" stop-color="#ff79b0"/><stop offset=".344" stop-color="#ff599e"/><stop offset=".469" stop-color="#ff3d8e"/><stop offset=".619" stop-color="#ff2580"/><stop offset="1" stop-color="#ff006a"/></linearGradient>
<linearGradient id="i14" gradientUnits="userSpaceOnUse" x1="1096" y1="475.8" x2="1355.6" y2="579.4"><stop offset="0" stop-color="#fff"/><stop offset=".069" stop-color="#ffcae1"/><stop offset=".15" stop-color="#ff9dc8"/><stop offset=".244" stop-color="#ff77b3"/><stop offset=".35" stop-color="#ff58a1"/><stop offset=".625" stop-color="#ff2584"/><stop offset="1" stop-color="#ff0070"/></linearGradient>
<linearGradient id="i15" gradientUnits="userSpaceOnUse" x1="1096" y1="475.8" x2="1350.5" y2="585.9"><stop offset="0" stop-color="#fff"/><stop offset=".069" stop-color="#ffcbe3"/><stop offset=".15" stop-color="#ff9ecb"/><stop offset=".244" stop-color="#ff79b6"/><stop offset=".35" stop-color="#ff59a5"/><stop offset=".625" stop-color="#ff268a"/><stop offset="1" stop-color="#ff0075"/></linearGradient>
<linearGradient id="i16" gradientUnits="userSpaceOnUse" x1="1096" y1="475.8" x2="1345.6" y2="592.4"><stop offset="0" stop-color="#fff"/><stop offset=".069" stop-color="#ffcce5"/><stop offset=".15" stop-color="#ff9fce"/><stop offset=".244" stop-color="#ff7aba"/><stop offset=".35" stop-color="#ff5aaa"/><stop offset=".625" stop-color="#ff268f"/><stop offset="1" stop-color="#ff007b"/></linearGradient>
<linearGradient id="i17" gradientUnits="userSpaceOnUse" x1="1096" y1="475.8" x2="1340.6" y2="598.9"><stop offset="0" stop-color="#fff"/><stop offset=".069" stop-color="#ffcde6"/><stop offset=".15" stop-color="#ffa0d1"/><stop offset=".244" stop-color="#ff7bbe"/><stop offset=".356" stop-color="#ff5aae"/><stop offset=".631" stop-color="#ff2694"/><stop offset="1" stop-color="#ff0082"/></linearGradient>
<linearGradient id="i18" gradientUnits="userSpaceOnUse" x1="1096" y1="475.8" x2="1335.7" y2="605.3"><stop offset="0" stop-color="#fff"/><stop offset=".069" stop-color="#ffcde8"/><stop offset=".15" stop-color="#ffa1d3"/><stop offset=".244" stop-color="#ff7cc2"/><stop offset=".356" stop-color="#ff5bb2"/><stop offset=".631" stop-color="#ff279a"/><stop offset="1" stop-color="#f08"/></linearGradient>
<linearGradient id="i19" gradientUnits="userSpaceOnUse" x1="1096" y1="475.8" x2="1330.8" y2="611.7"><stop offset="0" stop-color="#fff"/><stop offset=".069" stop-color="#ffcee9"/><stop offset=".15" stop-color="#ffa3d6"/><stop offset=".244" stop-color="#ff7dc6"/><stop offset=".356" stop-color="#ff5cb7"/><stop offset=".631" stop-color="#ff27a0"/><stop offset="1" stop-color="#ff008f"/></linearGradient>
<linearGradient id="i20" gradientUnits="userSpaceOnUse" x1="1096" y1="475.8" x2="1325.9" y2="618.1"><stop offset="0" stop-color="#fff"/><stop offset=".075" stop-color="#ffcbe9"/><stop offset=".156" stop-color="#ffa1d8"/><stop offset=".25" stop-color="#ff7cc9"/><stop offset=".363" stop-color="#ff5bbb"/><stop offset=".638" stop-color="#ff27a5"/><stop offset="1" stop-color="#ff0095"/></linearGradient>
<linearGradient id="i21" gradientUnits="userSpaceOnUse" x1="1096" y1="475.8" x2="1321" y2="624.4"><stop offset="0" stop-color="#fff"/><stop offset=".075" stop-color="#ffcceb"/><stop offset=".156" stop-color="#ffa2db"/><stop offset=".25" stop-color="#ff7dcd"/><stop offset=".363" stop-color="#ff5cc0"/><stop offset=".637" stop-color="#ff27ac"/><stop offset="1" stop-color="#ff009c"/></linearGradient>
<linearGradient id="i22" gradientUnits="userSpaceOnUse" x1="1096" y1="475.8" x2="1316.1" y2="630.8"><stop offset="0" stop-color="#fff"/><stop offset=".075" stop-color="#ffcced"/><stop offset=".156" stop-color="#ffa3de"/><stop offset=".25" stop-color="#ff7ed1"/><stop offset=".363" stop-color="#ff5dc5"/><stop offset=".638" stop-color="#ff28b2"/><stop offset="1" stop-color="#ff00a4"/></linearGradient>
<linearGradient id="i23" gradientUnits="userSpaceOnUse" x1="1096" y1="475.8" x2="1311.2" y2="637.1"><stop offset="0" stop-color="#fff"/><stop offset=".075" stop-color="#ffcdef"/><stop offset=".156" stop-color="#ffa4e1"/><stop offset=".256" stop-color="#ff7ed5"/><stop offset=".369" stop-color="#ff5dca"/><stop offset=".644" stop-color="#ff28b8"/><stop offset="1" stop-color="#ff00ab"/></linearGradient>
<linearGradient id="i24" gradientUnits="userSpaceOnUse" x1="1096" y1="475.8" x2="1306.4" y2="643.5"><stop offset="0" stop-color="#fff"/><stop offset=".075" stop-color="#ffcef0"/><stop offset=".162" stop-color="#ffa3e4"/><stop offset=".256" stop-color="#ff7fd9"/><stop offset=".369" stop-color="#ff5ecf"/><stop offset=".644" stop-color="#ff28bf"/><stop offset="1" stop-color="#ff00b3"/></linearGradient>
<linearGradient id="i25" gradientUnits="userSpaceOnUse" x1="1096" y1="475.8" x2="1301.5" y2="649.8"><stop offset="0" stop-color="#fff"/><stop offset=".075" stop-color="#ffcff2"/><stop offset=".163" stop-color="#ffa4e7"/><stop offset=".256" stop-color="#ff80dd"/><stop offset=".369" stop-color="#ff5fd5"/><stop offset=".644" stop-color="#ff29c6"/><stop offset="1" stop-color="#f0b"/></linearGradient>
<linearGradient id="i26" gradientUnits="userSpaceOnUse" x1="1096" y1="475.8" x2="1296.6" y2="656.2"><stop offset="0" stop-color="#fff"/><stop offset=".075" stop-color="#ffd0f4"/><stop offset=".163" stop-color="#ffa5ea"/><stop offset=".263" stop-color="#ff7fe1"/><stop offset=".375" stop-color="#ff5fda"/><stop offset=".65" stop-color="#ff29cd"/><stop offset="1" stop-color="#ff00c4"/></linearGradient>
<linearGradient id="i27" gradientUnits="userSpaceOnUse" x1="1096" y1="475.8" x2="1291.7" y2="662.6"><stop offset="0" stop-color="#fff"/><stop offset=".075" stop-color="#ffd0f6"/><stop offset=".163" stop-color="#ffa6ee"/><stop offset=".263" stop-color="#ff81e6"/><stop offset=".375" stop-color="#ff60e0"/><stop offset=".65" stop-color="#ff2ad5"/><stop offset="1" stop-color="#ff00cd"/></linearGradient>
<linearGradient id="i28" gradientUnits="userSpaceOnUse" x1="1096" y1="475.8" x2="1286.8" y2="669"><stop offset="0" stop-color="#fff"/><stop offset=".081" stop-color="#ffcef7"/><stop offset=".169" stop-color="#ffa5f1"/><stop offset=".269" stop-color="#ff80eb"/><stop offset=".381" stop-color="#ff60e6"/><stop offset=".65" stop-color="#ff2add"/><stop offset="1" stop-color="#ff00d6"/></linearGradient>
<linearGradient id="i29" gradientUnits="userSpaceOnUse" x1="1096" y1="475.8" x2="1281.9" y2="675.4"><stop offset="0" stop-color="#fff"/><stop offset=".081" stop-color="#ffcff9"/><stop offset=".169" stop-color="#ffa6f4"/><stop offset=".269" stop-color="#ff81f0"/><stop offset=".381" stop-color="#ff61ec"/><stop offset=".656" stop-color="#ff2ae5"/><stop offset="1" stop-color="#ff00e0"/></linearGradient>
<linearGradient id="i30" gradientUnits="userSpaceOnUse" x1="1096" y1="475.8" x2="1276.9" y2="681.9"><stop offset="0" stop-color="#fff"/><stop offset=".081" stop-color="#ffd0fb"/><stop offset=".169" stop-color="#ffa7f8"/><stop offset=".269" stop-color="#ff83f5"/><stop offset=".381" stop-color="#ff62f2"/><stop offset=".656" stop-color="#ff2bee"/><stop offset="1" stop-color="#ff00ea"/></linearGradient>
<linearGradient id="i31" gradientUnits="userSpaceOnUse" x1="1096" y1="475.8" x2="1271.9" y2="688.4"><stop offset="0" stop-color="#fff"/><stop offset=".081" stop-color="#ffd0fd"/><stop offset=".169" stop-color="#ffa9fc"/><stop offset=".269" stop-color="#ff84fa"/><stop offset=".388" stop-color="#ff62f9"/><stop offset=".656" stop-color="#ff2cf7"/><stop offset="1" stop-color="#ff00f5"/></linearGradient>
<linearGradient id="i32" gradientUnits="userSpaceOnUse" x1="1096" y1="475.8" x2="1266.9" y2="695"><stop offset="0" stop-color="#fff"/><stop offset=".081" stop-color="#ffd1ff"/><stop offset=".175" stop-color="#fea7ff"/><stop offset=".388" stop-color="#fe63ff"/><stop offset=".662" stop-color="#fe2bff"/><stop offset="1" stop-color="#fd00ff"/></linearGradient>
<linearGradient id="i33" gradientUnits="userSpaceOnUse" x1="1096" y1="475.8" x2="1261.8" y2="701.6"><stop offset="0" stop-color="#fff"/><stop offset=".081" stop-color="#fdd0ff"/><stop offset=".169" stop-color="#fba8ff"/><stop offset=".269" stop-color="#f984ff"/><stop offset=".387" stop-color="#f762ff"/><stop offset=".656" stop-color="#f42cff"/><stop offset="1" stop-color="#f200ff"/></linearGradient>
<linearGradient id="i34" gradientUnits="userSpaceOnUse" x1="1096" y1="475.8" x2="1256.7" y2="708.2"><stop offset="0" stop-color="#fff"/><stop offset=".081" stop-color="#fad0ff"/><stop offset=".169" stop-color="#f7a7ff"/><stop offset=".269" stop-color="#f383ff"/><stop offset=".381" stop-color="#f062ff"/><stop offset=".656" stop-color="#eb2bff"/><stop offset="1" stop-color="#e700ff"/></linearGradient>
<linearGradient id="i35" gradientUnits="userSpaceOnUse" x1="1096" y1="475.8" x2="1251.5" y2="715"><stop offset="0" stop-color="#fff"/><stop offset=".081" stop-color="#f8cfff"/><stop offset=".169" stop-color="#f3a6ff"/><stop offset=".269" stop-color="#ee81ff"/><stop offset=".381" stop-color="#e961ff"/><stop offset=".656" stop-color="#e22aff"/><stop offset="1" stop-color="#dc00ff"/></linearGradient>
<linearGradient id="i36" gradientUnits="userSpaceOnUse" x1="1096" y1="475.8" x2="1246.3" y2="721.8"><stop offset="0" stop-color="#fff"/><stop offset=".081" stop-color="#f6ceff"/><stop offset=".169" stop-color="#efa5ff"/><stop offset=".269" stop-color="#e880ff"/><stop offset=".381" stop-color="#e360ff"/><stop offset=".65" stop-color="#d92aff"/><stop offset="1" stop-color="#d200ff"/></linearGradient>
<linearGradient id="i37" gradientUnits="userSpaceOnUse" x1="1096" y1="475.8" x2="1241" y2="728.6"><stop offset="0" stop-color="#fff"/><stop offset=".075" stop-color="#f5d0ff"/><stop offset=".163" stop-color="#eca6ff"/><stop offset=".262" stop-color="#e481ff"/><stop offset=".375" stop-color="#dc60ff"/><stop offset=".65" stop-color="#d12aff"/><stop offset="1" stop-color="#c800ff"/></linearGradient>
<linearGradient id="i38" gradientUnits="userSpaceOnUse" x1="1096" y1="475.8" x2="1235.7" y2="735.6"><stop offset="0" stop-color="#fff"/><stop offset=".075" stop-color="#f3d0ff"/><stop offset=".163" stop-color="#e8a5ff"/><stop offset=".262" stop-color="#de7fff"/><stop offset=".375" stop-color="#d65fff"/><stop offset=".65" stop-color="#c829ff"/><stop offset="1" stop-color="#be00ff"/></linearGradient>
<linearGradient id="i39" gradientUnits="userSpaceOnUse" x1="1096" y1="475.8" x2="1230.3" y2="742.6"><stop offset="0" stop-color="#fff"/><stop offset=".075" stop-color="#f1cfff"/><stop offset=".163" stop-color="#e4a4ff"/><stop offset=".256" stop-color="#da80ff"/><stop offset=".369" stop-color="#d05fff"/><stop offset=".644" stop-color="#c029ff"/><stop offset="1" stop-color="#b400ff"/></linearGradient>
<linearGradient id="i40" gradientUnits="userSpaceOnUse" x1="1096" y1="475.8" x2="1224.8" y2="749.8"><stop offset="0" stop-color="#fff"/><stop offset=".075" stop-color="#efceff"/><stop offset=".163" stop-color="#e1a3ff"/><stop offset=".256" stop-color="#d57fff"/><stop offset=".369" stop-color="#ca5eff"/><stop offset=".644" stop-color="#b829ff"/><stop offset="1" stop-color="#ab00ff"/></linearGradient>
<linearGradient id="i41" gradientUnits="userSpaceOnUse" x1="1096" y1="475.8" x2="1219.3" y2="757"><stop offset="0" stop-color="#fff"/><stop offset=".075" stop-color="#edcdff"/><stop offset=".156" stop-color="#dea4ff"/><stop offset=".256" stop-color="#d07eff"/><stop offset=".369" stop-color="#c45dff"/><stop offset=".644" stop-color="#b128ff"/><stop offset="1" stop-color="#a200ff"/></linearGradient>
<linearGradient id="i42" gradientUnits="userSpaceOnUse" x1="1096" y1="475.8" x2="1213.6" y2="764.4"><stop offset="0" stop-color="#fff"/><stop offset=".075" stop-color="#ebcdff"/><stop offset=".156" stop-color="#daa3ff"/><stop offset=".25" stop-color="#cc7fff"/><stop offset=".362" stop-color="#be5dff"/><stop offset=".638" stop-color="#a928ff"/><stop offset="1" stop-color="#90f"/></linearGradient>
<linearGradient id="i43" gradientUnits="userSpaceOnUse" x1="1096" y1="475.8" x2="1207.9" y2="771.8"><stop offset="0" stop-color="#fff"/><stop offset=".075" stop-color="#e9ccff"/><stop offset=".156" stop-color="#d7a2ff"/><stop offset=".25" stop-color="#c77dff"/><stop offset=".362" stop-color="#b85cff"/><stop offset=".637" stop-color="#a227ff"/><stop offset="1" stop-color="#9100ff"/></linearGradient>
<linearGradient id="i44" gradientUnits="userSpaceOnUse" x1="1096" y1="475.8" x2="1202.1" y2="779.4"><stop offset="0" stop-color="#fff"/><stop offset=".075" stop-color="#e7cbff"/><stop offset=".156" stop-color="#d3a1ff"/><stop offset=".25" stop-color="#c27cff"/><stop offset=".363" stop-color="#b35bff"/><stop offset=".637" stop-color="#9a27ff"/><stop offset="1" stop-color="#80f"/></linearGradient>
<linearGradient id="i45" gradientUnits="userSpaceOnUse" x1="1096" y1="475.8" x2="1196.2" y2="787.2"><stop offset="0" stop-color="#fff"/><stop offset=".069" stop-color="#e7ceff"/><stop offset=".15" stop-color="#d1a2ff"/><stop offset=".244" stop-color="#be7dff"/><stop offset=".356" stop-color="#ae5bff"/><stop offset=".631" stop-color="#9327ff"/><stop offset="1" stop-color="#8000ff"/></linearGradient>
<linearGradient id="i46" gradientUnits="userSpaceOnUse" x1="1096" y1="475.8" x2="1190.1" y2="795"><stop offset="0" stop-color="#fff"/><stop offset=".069" stop-color="#e5cdff"/><stop offset=".15" stop-color="#cda1ff"/><stop offset=".244" stop-color="#b97cff"/><stop offset=".356" stop-color="#a85aff"/><stop offset=".631" stop-color="#8c26ff"/><stop offset="1" stop-color="#7800ff"/></linearGradient>
<linearGradient id="i47" gradientUnits="userSpaceOnUse" x1="1096" y1="475.8" x2="1184" y2="803"><stop offset="0" stop-color="#fff"/><stop offset=".069" stop-color="#e3ccff"/><stop offset=".15" stop-color="#caa0ff"/><stop offset=".244" stop-color="#b57aff"/><stop offset=".35" stop-color="#a35bff"/><stop offset=".625" stop-color="#8627ff"/><stop offset="1" stop-color="#7000ff"/></linearGradient>
<linearGradient id="i48" gradientUnits="userSpaceOnUse" x1="1096" y1="475.8" x2="1177.7" y2="811.1"><stop offset="0" stop-color="#fff"/><stop offset=".069" stop-color="#e1ccff"/><stop offset=".15" stop-color="#c69fff"/><stop offset=".244" stop-color="#b079ff"/><stop offset=".35" stop-color="#9d5aff"/><stop offset=".625" stop-color="#7f26ff"/><stop offset="1" stop-color="#6800ff"/></linearGradient>
<linearGradient id="i49" gradientUnits="userSpaceOnUse" x1="1096" y1="475.8" x2="1171.4" y2="819.4"><stop offset="0" stop-color="#fff"/><stop offset=".069" stop-color="#dfcbff"/><stop offset=".15" stop-color="#c39eff"/><stop offset=".244" stop-color="#ab78ff"/><stop offset=".35" stop-color="#9859ff"/><stop offset=".625" stop-color="#7825ff"/><stop offset="1" stop-color="#6100ff"/></linearGradient>
<linearGradient id="i50" gradientUnits="userSpaceOnUse" x1="1096" y1="475.8" x2="1164.9" y2="827.9"><stop offset="0" stop-color="#fff"/><stop offset=".069" stop-color="#ddcaff"/><stop offset=".144" stop-color="#c1a0ff"/><stop offset=".237" stop-color="#a879ff"/><stop offset=".344" stop-color="#9359ff"/><stop offset=".469" stop-color="#813eff"/><stop offset=".619" stop-color="#7226ff"/><stop offset="1" stop-color="#5900ff"/></linearGradient>
<linearGradient id="i51" gradientUnits="userSpaceOnUse" x1="1096" y1="475.8" x2="1158.3" y2="836.5"><stop offset="0" stop-color="#fff"/><stop offset=".069" stop-color="#dac9ff"/><stop offset=".144" stop-color="#be9eff"/><stop offset=".238" stop-color="#a378ff"/><stop offset=".344" stop-color="#8e58ff"/><stop offset=".469" stop-color="#7b3dff"/><stop offset=".619" stop-color="#6b25ff"/><stop offset="1" stop-color="#5200ff"/></linearGradient>
<linearGradient id="i52" gradientUnits="userSpaceOnUse" x1="1096" y1="475.8" x2="1151.5" y2="845.4"><stop offset="0" stop-color="#fff"/><stop offset=".069" stop-color="#d8c8ff"/><stop offset=".144" stop-color="#ba9dff"/><stop offset=".237" stop-color="#9f76ff"/><stop offset=".344" stop-color="#8857ff"/><stop offset=".469" stop-color="#753cff"/><stop offset=".619" stop-color="#6524ff"/><stop offset="1" stop-color="#4b00ff"/></linearGradient>
<linearGradient id="i53" gradientUnits="userSpaceOnUse" x1="1096" y1="475.8" x2="1144.6" y2="854.4"><stop offset="0" stop-color="#fff"/><stop offset=".069" stop-color="#d6c7ff"/><stop offset=".144" stop-color="#b69cff"/><stop offset=".231" stop-color="#9c77ff"/><stop offset=".337" stop-color="#8457ff"/><stop offset=".462" stop-color="#703cff"/><stop offset=".612" stop-color="#5f25ff"/><stop offset="1" stop-color="#40f"/></linearGradient>
<linearGradient id="i54" gradientUnits="userSpaceOnUse" x1="1096" y1="475.8" x2="1137.5" y2="863.6"><stop offset="0" stop-color="#fff"/><stop offset=".062" stop-color="#d7cbff"/><stop offset=".138" stop-color="#b59eff"/><stop offset=".231" stop-color="#9776ff"/><stop offset=".337" stop-color="#7f56ff"/><stop offset=".462" stop-color="#6a3bff"/><stop offset=".613" stop-color="#5824ff"/><stop offset="1" stop-color="#3d00ff"/></linearGradient>
<linearGradient id="i55" gradientUnits="userSpaceOnUse" x1="1096" y1="475.8" x2="1130.3" y2="873"><stop offset="0" stop-color="#fff"/><stop offset=".062" stop-color="#d5caff"/><stop offset=".137" stop-color="#b29dff"/><stop offset=".231" stop-color="#9275ff"/><stop offset=".338" stop-color="#7955ff"/><stop offset=".463" stop-color="#643aff"/><stop offset=".613" stop-color="#5223ff"/><stop offset="1" stop-color="#3600ff"/></linearGradient>
<linearGradient id="i56" gradientUnits="userSpaceOnUse" x1="1096" y1="475.8" x2="1122.9" y2="882.6"><stop offset="0" stop-color="#fff"/><stop offset=".062" stop-color="#d3c9ff"/><stop offset=".137" stop-color="#ae9cff"/><stop offset=".225" stop-color="#9076ff"/><stop offset=".331" stop-color="#7555ff"/><stop offset=".456" stop-color="#5f3aff"/><stop offset=".606" stop-color="#4d24ff"/><stop offset="1" stop-color="#3000ff"/></linearGradient>
<linearGradient id="i57" gradientUnits="userSpaceOnUse" x1="1096" y1="475.8" x2="1115.4" y2="892.4"><stop offset="0" stop-color="#fff"/><stop offset=".062" stop-color="#d1c8ff"/><stop offset=".137" stop-color="#ab9aff"/><stop offset=".225" stop-color="#8b75ff"/><stop offset=".331" stop-color="#7054ff"/><stop offset=".456" stop-color="#593aff"/><stop offset=".606" stop-color="#4623ff"/><stop offset="1" stop-color="#2900ff"/></linearGradient>
<linearGradient id="i58" gradientUnits="userSpaceOnUse" x1="1096" y1="475.8" x2="1107.7" y2="902.5"><stop offset="0" stop-color="#fff"/><stop offset=".062" stop-color="#cfc8ff"/><stop offset=".137" stop-color="#a799ff"/><stop offset=".225" stop-color="#8673ff"/><stop offset=".331" stop-color="#6b53ff"/><stop offset=".456" stop-color="#5439ff"/><stop offset=".606" stop-color="#4022ff"/><stop offset="1" stop-color="#2300ff"/></linearGradient>
<linearGradient id="i59" gradientUnits="userSpaceOnUse" x1="1096" y1="475.8" x2="1099.7" y2="912.8"><stop offset="0" stop-color="#fff"/><stop offset=".062" stop-color="#cdc7ff"/><stop offset=".131" stop-color="#a69bff"/><stop offset=".219" stop-color="#8474ff"/><stop offset=".325" stop-color="#6754ff"/><stop offset=".45" stop-color="#4f39ff"/><stop offset=".6" stop-color="#3b23ff"/><stop offset="1" stop-color="#1c00ff"/></linearGradient>
<linearGradient id="i60" gradientUnits="userSpaceOnUse" x1="1096" y1="475.8" x2="1091.6" y2="923.4"><stop offset="0" stop-color="#fff"/><stop offset=".062" stop-color="#cbc6ff"/><stop offset=".131" stop-color="#a39aff"/><stop offset=".219" stop-color="#7f73ff"/><stop offset=".325" stop-color="#6253ff"/><stop offset=".45" stop-color="#4938ff"/><stop offset=".6" stop-color="#3522ff"/><stop offset="1" stop-color="#1600ff"/></linearGradient>
<linearGradient id="i61" gradientUnits="userSpaceOnUse" x1="1096" y1="475.8" x2="1083.3" y2="934.2"><stop offset="0" stop-color="#fff"/><stop offset=".062" stop-color="#c9c5ff"/><stop offset=".131" stop-color="#9f99ff"/><stop offset=".219" stop-color="#7b72ff"/><stop offset=".325" stop-color="#5c51ff"/><stop offset=".45" stop-color="#4437ff"/><stop offset=".6" stop-color="#2f21ff"/><stop offset="1" stop-color="#1000ff"/></linearGradient>
<linearGradient id="i62" gradientUnits="userSpaceOnUse" x1="1096" y1="475.8" x2="1074.8" y2="945.3"><stop offset="0" stop-color="#fff"/><stop offset=".062" stop-color="#c6c4ff"/><stop offset=".131" stop-color="#9c98ff"/><stop offset=".219" stop-color="#7671ff"/><stop offset=".319" stop-color="#5952ff"/><stop offset=".444" stop-color="#3f37ff"/><stop offset=".594" stop-color="#2a22ff"/><stop offset="1" stop-color="#0a00ff"/></linearGradient>
<linearGradient id="i63" gradientUnits="userSpaceOnUse" x1="1096" y1="475.8" x2="1065.8" y2="957"><stop offset="0" stop-color="#fff"/><stop offset=".056" stop-color="#c9c8ff"/><stop offset=".131" stop-color="#9896ff"/><stop offset=".219" stop-color="#716fff"/><stop offset=".319" stop-color="#5351ff"/><stop offset=".444" stop-color="#3937ff"/><stop offset=".594" stop-color="#2421ff"/><stop offset="1" stop-color="#0400ff"/></linearGradient>
<linearGradient id="i64" gradientUnits="userSpaceOnUse" x1="1096" y1="475.8" x2="1058.1" y2="948.5"><stop offset="0" stop-color="#fff"/><stop offset=".062" stop-color="#c4c4ff"/><stop offset=".131" stop-color="#9798ff"/><stop offset=".219" stop-color="#7071ff"/><stop offset=".319" stop-color="#5153ff"/><stop offset=".444" stop-color="#3739ff"/><stop offset=".594" stop-color="#2123ff"/><stop offset="1" stop-color="#0002ff"/></linearGradient>
<linearGradient id="i65" gradientUnits="userSpaceOnUse" x1="1096" y1="475.8" x2="1053.4" y2="911.3"><stop offset="0" stop-color="#fff"/><stop offset=".063" stop-color="#c6c8ff"/><stop offset=".131" stop-color="#9b9eff"/><stop offset=".219" stop-color="#7479ff"/><stop offset=".325" stop-color="#5359ff"/><stop offset=".45" stop-color="#393fff"/><stop offset=".6" stop-color="#222aff"/><stop offset="1" stop-color="#0008ff"/></linearGradient>
<linearGradient id="i66" gradientUnits="userSpaceOnUse" x1="1096" y1="475.8" x2="1049.2" y2="878.2"><stop offset="0" stop-color="#fff"/><stop offset=".062" stop-color="#c9ccff"/><stop offset=".137" stop-color="#9ba1ff"/><stop offset=".225" stop-color="#757dff"/><stop offset=".331" stop-color="#555fff"/><stop offset=".456" stop-color="#3a45ff"/><stop offset=".606" stop-color="#2330ff"/><stop offset="1" stop-color="#000eff"/></linearGradient>
<linearGradient id="i67" gradientUnits="userSpaceOnUse" x1="1096" y1="475.8" x2="1045.3" y2="847.5"><stop offset="0" stop-color="#fff"/><stop offset=".069" stop-color="#c7ccff"/><stop offset=".144" stop-color="#9ba4ff"/><stop offset=".231" stop-color="#7782ff"/><stop offset=".338" stop-color="#5764ff"/><stop offset=".462" stop-color="#3c4bff"/><stop offset=".612" stop-color="#2436ff"/><stop offset="1" stop-color="#0015ff"/></linearGradient>
<linearGradient id="i68" gradientUnits="userSpaceOnUse" x1="1096" y1="475.8" x2="1041.7" y2="819.1"><stop offset="0" stop-color="#fff"/><stop offset=".069" stop-color="#c9cfff"/><stop offset=".144" stop-color="#9fa9ff"/><stop offset=".237" stop-color="#7886ff"/><stop offset=".344" stop-color="#586aff"/><stop offset=".469" stop-color="#3d52ff"/><stop offset=".619" stop-color="#253cff"/><stop offset="1" stop-color="#001bff"/></linearGradient>
<linearGradient id="i69" gradientUnits="userSpaceOnUse" x1="1096" y1="475.8" x2="1038.3" y2="792.8"><stop offset="0" stop-color="#fff"/><stop offset=".069" stop-color="#ccd3ff"/><stop offset=".15" stop-color="#9facff"/><stop offset=".244" stop-color="#798bff"/><stop offset=".35" stop-color="#5a70ff"/><stop offset=".625" stop-color="#2643ff"/><stop offset="1" stop-color="#02f"/></linearGradient>
<linearGradient id="i70" gradientUnits="userSpaceOnUse" x1="1096" y1="475.8" x2="1035.2" y2="768.4"><stop offset="0" stop-color="#fff"/><stop offset=".069" stop-color="#ced6ff"/><stop offset=".15" stop-color="#a2b1ff"/><stop offset=".244" stop-color="#7d92ff"/><stop offset=".356" stop-color="#5b76ff"/><stop offset=".631" stop-color="#274aff"/><stop offset="1" stop-color="#0029ff"/></linearGradient>
<linearGradient id="i71" gradientUnits="userSpaceOnUse" x1="1096" y1="475.8" x2="1032.4" y2="745.7"><stop offset="0" stop-color="#fff"/><stop offset=".075" stop-color="#ccd6ff"/><stop offset=".156" stop-color="#a3b4ff"/><stop offset=".25" stop-color="#7e96ff"/><stop offset=".362" stop-color="#5d7bff"/><stop offset=".638" stop-color="#2850ff"/><stop offset="1" stop-color="#0030ff"/></linearGradient>
<linearGradient id="i72" gradientUnits="userSpaceOnUse" x1="1096" y1="475.8" x2="1029.7" y2="724.6"><stop offset="0" stop-color="#fff"/><stop offset=".075" stop-color="#ced9ff"/><stop offset=".163" stop-color="#a3b7ff"/><stop offset=".256" stop-color="#7f9bff"/><stop offset=".369" stop-color="#5e81ff"/><stop offset=".644" stop-color="#2957ff"/><stop offset="1" stop-color="#0037ff"/></linearGradient>
<linearGradient id="i73" gradientUnits="userSpaceOnUse" x1="1096" y1="475.8" x2="1027.2" y2="705.1"><stop offset="0" stop-color="#fff"/><stop offset=".075" stop-color="#d0dcff"/><stop offset=".163" stop-color="#a6bcff"/><stop offset=".263" stop-color="#80a0ff"/><stop offset=".375" stop-color="#6087ff"/><stop offset=".65" stop-color="#2a5eff"/><stop offset="1" stop-color="#003fff"/></linearGradient>
<linearGradient id="i74" gradientUnits="userSpaceOnUse" x1="1096" y1="475.8" x2="1024.9" y2="686.9"><stop offset="0" stop-color="#fff"/><stop offset=".081" stop-color="#cfdcff"/><stop offset=".169" stop-color="#a6bfff"/><stop offset=".269" stop-color="#82a4ff"/><stop offset=".381" stop-color="#618dff"/><stop offset=".656" stop-color="#2a65ff"/><stop offset="1" stop-color="#0047ff"/></linearGradient>
<linearGradient id="i75" gradientUnits="userSpaceOnUse" x1="1096" y1="475.8" x2="1022.8" y2="669.9"><stop offset="0" stop-color="#fff"/><stop offset=".081" stop-color="#d1dfff"/><stop offset=".169" stop-color="#a9c4ff"/><stop offset=".269" stop-color="#85aaff"/><stop offset=".388" stop-color="#6393ff"/><stop offset=".656" stop-color="#2c6dff"/><stop offset="1" stop-color="#004fff"/></linearGradient>
<linearGradient id="i76" gradientUnits="userSpaceOnUse" x1="1096" y1="475.8" x2="1020.8" y2="654.1"><stop offset="0" stop-color="#fff"/><stop offset=".081" stop-color="#d2e2ff"/><stop offset=".175" stop-color="#a9c6ff"/><stop offset=".394" stop-color="#6499ff"/><stop offset=".663" stop-color="#2d75ff"/><stop offset="1" stop-color="#0057ff"/></linearGradient>
<linearGradient id="i77" gradientUnits="userSpaceOnUse" x1="1096" y1="475.8" x2="1018.9" y2="639.3"><stop offset="0" stop-color="#fff"/><stop offset=".088" stop-color="#d1e2ff"/><stop offset=".181" stop-color="#a9c9ff"/><stop offset=".4" stop-color="#659fff"/><stop offset=".669" stop-color="#2d7cff"/><stop offset="1" stop-color="#0060ff"/></linearGradient>
<linearGradient id="i78" gradientUnits="userSpaceOnUse" x1="1096" y1="475.8" x2="1017.1" y2="625.5"><stop offset="0" stop-color="#fff"/><stop offset=".087" stop-color="#d3e5ff"/><stop offset=".181" stop-color="#acceff"/><stop offset=".406" stop-color="#66a5ff"/><stop offset=".675" stop-color="#2e84ff"/><stop offset="1" stop-color="#0068ff"/></linearGradient>
<linearGradient id="i79" gradientUnits="userSpaceOnUse" x1="1096" y1="475.8" x2="1015.5" y2="612.5"><stop offset="0" stop-color="#fff"/><stop offset=".188" stop-color="#acd1ff"/><stop offset=".406" stop-color="#69acff"/><stop offset=".675" stop-color="#308cff"/><stop offset="1" stop-color="#0071ff"/></linearGradient>
<linearGradient id="i80" gradientUnits="userSpaceOnUse" x1="1096" y1="475.8" x2="1013.9" y2="600.4"><stop offset="0" stop-color="#fff"/><stop offset=".188" stop-color="#aed5ff"/><stop offset=".412" stop-color="#6ab2ff"/><stop offset=".681" stop-color="#3094ff"/><stop offset="1" stop-color="#007aff"/></linearGradient>
<linearGradient id="i81" gradientUnits="userSpaceOnUse" x1="1096" y1="475.8" x2="1012.5" y2="589.2"><stop offset="0" stop-color="#fff"/><stop offset=".194" stop-color="#afd8ff"/><stop offset=".419" stop-color="#6bb7ff"/><stop offset=".688" stop-color="#319bff"/><stop offset="1" stop-color="#0084ff"/></linearGradient>
<linearGradient id="i82" gradientUnits="userSpaceOnUse" x1="1096" y1="475.8" x2="1011.2" y2="579.1"><stop offset="0" stop-color="#fff"/><stop offset=".194" stop-color="#b1dcff"/><stop offset=".425" stop-color="#6cbdff"/><stop offset=".694" stop-color="#31a3ff"/><stop offset="1" stop-color="#008dff"/></linearGradient>
<linearGradient id="i83" gradientUnits="userSpaceOnUse" x1="1096" y1="475.8" x2="1010.1" y2="570"><stop offset="0" stop-color="#fff"/><stop offset=".2" stop-color="#b1deff"/><stop offset=".431" stop-color="#6dc2ff"/><stop offset=".694" stop-color="#3af"/><stop offset="1" stop-color="#0095ff"/></linearGradient>
<linearGradient id="i84" gradientUnits="userSpaceOnUse" x1="1096" y1="475.8" x2="1009" y2="561.7"><stop offset="0" stop-color="#fff"/><stop offset=".2" stop-color="#b2e2ff"/><stop offset=".431" stop-color="#6fc8ff"/><stop offset=".7" stop-color="#33b1ff"/><stop offset="1" stop-color="#009eff"/></linearGradient>
<linearGradient id="i85" gradientUnits="userSpaceOnUse" x1="1096" y1="475.8" x2="1008.1" y2="554"><stop offset="0" stop-color="#fff"/><stop offset=".206" stop-color="#b2e4ff"/><stop offset=".437" stop-color="#6fcdff"/><stop offset=".7" stop-color="#34b8ff"/><stop offset="1" stop-color="#00a6ff"/></linearGradient>
<linearGradient id="i86" gradientUnits="userSpaceOnUse" x1="1096" y1="475.8" x2="1007.1" y2="546.8"><stop offset="0" stop-color="#fff"/><stop offset=".206" stop-color="#b4e7ff"/><stop offset=".444" stop-color="#70d2ff"/><stop offset=".706" stop-color="#34bfff"/><stop offset="1" stop-color="#00afff"/></linearGradient>
<linearGradient id="i87" gradientUnits="userSpaceOnUse" x1="1096" y1="475.8" x2="1006.3" y2="540.1"><stop offset="0" stop-color="#fff"/><stop offset=".212" stop-color="#b4eaff"/><stop offset=".444" stop-color="#72d7ff"/><stop offset=".706" stop-color="#36c6ff"/><stop offset="1" stop-color="#00b7ff"/></linearGradient>
<linearGradient id="i88" gradientUnits="userSpaceOnUse" x1="1096" y1="475.8" x2="1005.5" y2="533.8"><stop offset="0" stop-color="#fff"/><stop offset=".213" stop-color="#b5edff"/><stop offset=".45" stop-color="#72dcff"/><stop offset=".713" stop-color="#36cdff"/><stop offset="1" stop-color="#00c0ff"/></linearGradient>
<linearGradient id="i89" gradientUnits="userSpaceOnUse" x1="1096" y1="475.8" x2="1004.7" y2="527.7"><stop offset="0" stop-color="#fff"/><stop offset=".212" stop-color="#b7efff"/><stop offset=".45" stop-color="#74e1ff"/><stop offset=".712" stop-color="#37d4ff"/><stop offset="1" stop-color="#00c8ff"/></linearGradient>
<linearGradient id="i90" gradientUnits="userSpaceOnUse" x1="1096" y1="475.8" x2="1004" y2="522"><stop offset="0" stop-color="#fff"/><stop offset=".219" stop-color="#b6f2ff"/><stop offset=".456" stop-color="#74e6ff"/><stop offset=".719" stop-color="#37dbff"/><stop offset="1" stop-color="#00d1ff"/></linearGradient>
<linearGradient id="i91" gradientUnits="userSpaceOnUse" x1="1096" y1="475.8" x2="1003.3" y2="516.4"><stop offset="0" stop-color="#fff"/><stop offset=".219" stop-color="#b8f5ff"/><stop offset=".462" stop-color="#74ebff"/><stop offset=".719" stop-color="#38e2ff"/><stop offset="1" stop-color="#00daff"/></linearGradient>
<linearGradient id="i92" gradientUnits="userSpaceOnUse" x1="1096" y1="475.8" x2="1002.6" y2="511"><stop offset="0" stop-color="#fff"/><stop offset=".225" stop-color="#b7f7ff"/><stop offset=".463" stop-color="#76f0ff"/><stop offset=".725" stop-color="#38e9ff"/><stop offset="1" stop-color="#00e3ff"/></linearGradient>
<linearGradient id="i93" gradientUnits="userSpaceOnUse" x1="1096" y1="475.8" x2="1001.9" y2="505.7"><stop offset="0" stop-color="#fff"/><stop offset=".225" stop-color="#b9faff"/><stop offset=".469" stop-color="#76f5ff"/><stop offset="1" stop-color="#00ecff"/></linearGradient>
<linearGradient id="i94" gradientUnits="userSpaceOnUse" x1="1096" y1="475.8" x2="1001.3" y2="500.6"><stop offset="0" stop-color="#fff"/><stop offset=".469" stop-color="#78faff"/><stop offset="1" stop-color="#00f6ff"/></linearGradient>
<linearGradient id="i95" gradientUnits="userSpaceOnUse" x1="1096" y1="475.8" x2="1000.6" y2="495.5"><stop offset="0" stop-color="#fff"/><stop offset=".475" stop-color="#78fffe"/><stop offset="1" stop-color="#00fffe"/></linearGradient>
<linearGradient id="i96" gradientUnits="userSpaceOnUse" x1="1096" y1="475.8" x2="1000" y2="490.4"><stop offset="0" stop-color="#fff"/><stop offset=".475" stop-color="#78fff9"/><stop offset="1" stop-color="#00fff4"/></linearGradient>
<linearGradient id="i97" gradientUnits="userSpaceOnUse" x1="1096" y1="475.8" x2="999.4" y2="485.4"><stop offset="0" stop-color="#fff"/><stop offset=".469" stop-color="#79fff4"/><stop offset="1" stop-color="#00ffea"/></linearGradient>
<linearGradient id="i98" gradientUnits="userSpaceOnUse" x1="1096" y1="475.8" x2="998.7" y2="480.3"><stop offset="0" stop-color="#fff"/><stop offset=".225" stop-color="#bafff7"/><stop offset=".469" stop-color="#78ffee"/><stop offset="1" stop-color="#00ffe0"/></linearGradient>
<linearGradient id="i99" gradientUnits="userSpaceOnUse" x1="1096" y1="475.8" x2="998.1" y2="475.2"><stop offset="0" stop-color="#fff"/><stop offset=".225" stop-color="#bafff4"/><stop offset=".469" stop-color="#77ffe9"/><stop offset="1" stop-color="#00ffd6"/></linearGradient>
<linearGradient id="i100" gradientUnits="userSpaceOnUse" x1="1096" y1="475.8" x2="997.4" y2="470"><stop offset="0" stop-color="#fff"/><stop offset=".225" stop-color="#b9fff1"/><stop offset=".469" stop-color="#77ffe4"/><stop offset="1" stop-color="#0fc"/></linearGradient>
<linearGradient id="i101" gradientUnits="userSpaceOnUse" x1="1096" y1="475.8" x2="996.7" y2="464.8"><stop offset="0" stop-color="#fff"/><stop offset=".225" stop-color="#b8ffee"/><stop offset=".469" stop-color="#76ffdf"/><stop offset=".725" stop-color="#39ffd0"/><stop offset="1" stop-color="#00ffc3"/></linearGradient>
<linearGradient id="i102" gradientUnits="userSpaceOnUse" x1="1096" y1="475.8" x2="996.1" y2="459.3"><stop offset="0" stop-color="#fff"/><stop offset=".225" stop-color="#b8ffeb"/><stop offset=".463" stop-color="#77ffda"/><stop offset=".725" stop-color="#39ffc8"/><stop offset="1" stop-color="#00ffb9"/></linearGradient>
<linearGradient id="i103" gradientUnits="userSpaceOnUse" x1="1096" y1="475.8" x2="995.3" y2="453.8"><stop offset="0" stop-color="#fff"/><stop offset=".225" stop-color="#b7ffe9"/><stop offset=".462" stop-color="#76ffd4"/><stop offset=".725" stop-color="#38ffc1"/><stop offset="1" stop-color="#00ffaf"/></linearGradient>
<linearGradient id="i104" gradientUnits="userSpaceOnUse" x1="1096" y1="475.8" x2="994.6" y2="448"><stop offset="0" stop-color="#fff"/><stop offset=".225" stop-color="#b7ffe6"/><stop offset=".463" stop-color="#75ffcf"/><stop offset=".725" stop-color="#38ffb9"/><stop offset="1" stop-color="#00ffa5"/></linearGradient>
<linearGradient id="i105" gradientUnits="userSpaceOnUse" x1="1096" y1="475.8" x2="993.8" y2="441.9"><stop offset="0" stop-color="#fff"/><stop offset=".225" stop-color="#b6ffe2"/><stop offset=".463" stop-color="#75ffc9"/><stop offset=".719" stop-color="#38ffb1"/><stop offset="1" stop-color="#00ff9b"/></linearGradient>
<linearGradient id="i106" gradientUnits="userSpaceOnUse" x1="1096" y1="475.8" x2="993" y2="435.6"><stop offset="0" stop-color="#fff"/><stop offset=".219" stop-color="#b7ffe0"/><stop offset=".456" stop-color="#75ffc4"/><stop offset=".719" stop-color="#38ffa9"/><stop offset="1" stop-color="#00ff91"/></linearGradient>
<linearGradient id="i107" gradientUnits="userSpaceOnUse" x1="1096" y1="475.8" x2="992.2" y2="428.8"><stop offset="0" stop-color="#fff"/><stop offset=".219" stop-color="#b7ffdd"/><stop offset=".456" stop-color="#75ffbd"/><stop offset=".719" stop-color="#37ffa0"/><stop offset="1" stop-color="#00ff86"/></linearGradient>
<linearGradient id="i108" gradientUnits="userSpaceOnUse" x1="1096" y1="475.8" x2="991.3" y2="421.6"><stop offset="0" stop-color="#fff"/><stop offset=".219" stop-color="#b6ffd9"/><stop offset=".456" stop-color="#74ffb7"/><stop offset=".719" stop-color="#37ff97"/><stop offset="1" stop-color="#00ff7b"/></linearGradient>
<linearGradient id="i109" gradientUnits="userSpaceOnUse" x1="1096" y1="475.8" x2="990.3" y2="413.9"><stop offset="0" stop-color="#fff"/><stop offset=".219" stop-color="#b5ffd5"/><stop offset=".456" stop-color="#73ffb0"/><stop offset=".719" stop-color="#36ff8e"/><stop offset="1" stop-color="#00ff6f"/></linearGradient>
<linearGradient id="i110" gradientUnits="userSpaceOnUse" x1="1096" y1="475.8" x2="989.2" y2="405.5"><stop offset="0" stop-color="#fff"/><stop offset=".212" stop-color="#b6ffd3"/><stop offset=".45" stop-color="#74ffaa"/><stop offset=".713" stop-color="#37ff84"/><stop offset="1" stop-color="#00ff63"/></linearGradient>
<linearGradient id="i111" gradientUnits="userSpaceOnUse" x1="1096" y1="475.8" x2="988.1" y2="396.4"><stop offset="0" stop-color="#fff"/><stop offset=".213" stop-color="#b6ffce"/><stop offset=".45" stop-color="#73ffa2"/><stop offset=".713" stop-color="#36ff7a"/><stop offset="1" stop-color="#00ff56"/></linearGradient>
<linearGradient id="i112" gradientUnits="userSpaceOnUse" x1="1096" y1="475.8" x2="986.8" y2="386.2"><stop offset="0" stop-color="#fff"/><stop offset=".212" stop-color="#b5ffca"/><stop offset=".45" stop-color="#71ff99"/><stop offset=".713" stop-color="#35ff6e"/><stop offset="1" stop-color="#00ff48"/></linearGradient>
<linearGradient id="i113" gradientUnits="userSpaceOnUse" x1="1096" y1="475.8" x2="985.3" y2="374.9"><stop offset="0" stop-color="#fff"/><stop offset=".212" stop-color="#b4ffc4"/><stop offset=".444" stop-color="#72ff91"/><stop offset=".706" stop-color="#36ff63"/><stop offset="1" stop-color="#00ff39"/></linearGradient>
<linearGradient id="i114" gradientUnits="userSpaceOnUse" x1="1096" y1="475.8" x2="983.7" y2="362.2"><stop offset="0" stop-color="#fff"/><stop offset=".206" stop-color="#b5ffc0"/><stop offset=".444" stop-color="#70ff87"/><stop offset=".706" stop-color="#35ff55"/><stop offset="1" stop-color="#00ff29"/></linearGradient>
<linearGradient id="i115" gradientUnits="userSpaceOnUse" x1="1096" y1="475.8" x2="982" y2="348.2"><stop offset="0" stop-color="#fff"/><stop offset=".206" stop-color="#b3ffba"/><stop offset=".437" stop-color="#71ff7e"/><stop offset=".7" stop-color="#35ff48"/><stop offset="1" stop-color="#00ff18"/></linearGradient>
<linearGradient id="i116" gradientUnits="userSpaceOnUse" x1="1096" y1="475.8" x2="980.1" y2="333.2"><stop offset="0" stop-color="#fff"/><stop offset=".206" stop-color="#b2ffb4"/><stop offset=".437" stop-color="#6fff73"/><stop offset=".7" stop-color="#34ff39"/><stop offset="1" stop-color="#00ff06"/></linearGradient>
<linearGradient id="i117" gradientUnits="userSpaceOnUse" x1="1096" y1="475.8" x2="986.6" y2="328.5"><stop offset="0" stop-color="#fff"/><stop offset=".206" stop-color="#b6ffb2"/><stop offset=".438" stop-color="#76ff6f"/><stop offset=".7" stop-color="#3dff34"/><stop offset="1" stop-color="#0bff00"/></linearGradient>
<linearGradient id="i118" gradientUnits="userSpaceOnUse" x1="1096" y1="475.8" x2="997.1" y2="329.7"><stop offset="0" stop-color="#fff"/><stop offset=".206" stop-color="#bcffb3"/><stop offset=".438" stop-color="#80ff71"/><stop offset=".7" stop-color="#4cff35"/><stop offset="1" stop-color="#1cff00"/></linearGradient>
<linearGradient id="i119" gradientUnits="userSpaceOnUse" x1="1096" y1="475.8" x2="1007.2" y2="331"><stop offset="0" stop-color="#fff"/><stop offset=".206" stop-color="#c2ffb4"/><stop offset=".444" stop-color="#8aff70"/><stop offset=".706" stop-color="#59ff35"/><stop offset="1" stop-color="#2dff00"/></linearGradient>
<linearGradient id="i120" gradientUnits="userSpaceOnUse" x1="1096" y1="475.8" x2="1017" y2="332.1"><stop offset="0" stop-color="#fff"/><stop offset=".212" stop-color="#c6ffb4"/><stop offset=".444" stop-color="#94ff72"/><stop offset=".706" stop-color="#67ff36"/><stop offset="1" stop-color="#3eff00"/></linearGradient>
<linearGradient id="i121" gradientUnits="userSpaceOnUse" x1="1096" y1="475.8" x2="1026.4" y2="333.3"><stop offset="0" stop-color="#fff"/><stop offset=".212" stop-color="#ccffb5"/><stop offset=".45" stop-color="#9dff71"/><stop offset=".713" stop-color="#74ff35"/><stop offset="1" stop-color="#4fff00"/></linearGradient>
<linearGradient id="i122" gradientUnits="userSpaceOnUse" x1="1096" y1="475.8" x2="1035.6" y2="334.4"><stop offset="0" stop-color="#fff"/><stop offset=".213" stop-color="#d1ffb6"/><stop offset=".45" stop-color="#a8ff73"/><stop offset=".713" stop-color="#82ff36"/><stop offset="1" stop-color="#60ff00"/></linearGradient>
<linearGradient id="i123" gradientUnits="userSpaceOnUse" x1="1096" y1="475.8" x2="1044.5" y2="335.4"><stop offset="0" stop-color="#fff"/><stop offset=".212" stop-color="#d7ffb7"/><stop offset=".45" stop-color="#b2ff74"/><stop offset=".713" stop-color="#90ff37"/><stop offset="1" stop-color="#72ff00"/></linearGradient>
<linearGradient id="i124" gradientUnits="userSpaceOnUse" x1="1096" y1="475.8" x2="1053" y2="336.4"><stop offset="0" stop-color="#fff"/><stop offset=".219" stop-color="#dbffb6"/><stop offset=".456" stop-color="#bbff73"/><stop offset=".719" stop-color="#9dff36"/><stop offset="1" stop-color="#83ff00"/></linearGradient>
<linearGradient id="i125" gradientUnits="userSpaceOnUse" x1="1096" y1="475.8" x2="1061.1" y2="337.4"><stop offset="0" stop-color="#fff"/><stop offset=".219" stop-color="#e1ffb7"/><stop offset=".456" stop-color="#c5ff75"/><stop offset=".719" stop-color="#abff37"/><stop offset="1" stop-color="#94ff00"/></linearGradient>
<linearGradient id="i126" gradientUnits="userSpaceOnUse" x1="1096" y1="475.8" x2="1068.9" y2="338.3"><stop offset="0" stop-color="#fff"/><stop offset=".219" stop-color="#e6ffb8"/><stop offset=".463" stop-color="#ceff74"/><stop offset=".719" stop-color="#b9ff38"/><stop offset="1" stop-color="#a5ff00"/></linearGradient>
<linearGradient id="i127" gradientUnits="userSpaceOnUse" x1="1096" y1="475.8" x2="1076.4" y2="339.2"><stop offset="0" stop-color="#fff"/><stop offset=".225" stop-color="#eaffb7"/><stop offset=".463" stop-color="#d8ff75"/><stop offset=".725" stop-color="#c6ff37"/><stop offset="1" stop-color="#b6ff00"/></linearGradient>
<linearGradient id="i128" gradientUnits="userSpaceOnUse" x1="1096" y1="475.8" x2="1083.8" y2="340.1"><stop offset="0" stop-color="#fff"/><stop offset=".225" stop-color="#efffb7"/><stop offset=".463" stop-color="#e1ff76"/><stop offset=".725" stop-color="#d4ff38"/><stop offset="1" stop-color="#c8ff00"/></linearGradient>
<linearGradient id="i129" gradientUnits="userSpaceOnUse" x1="1096" y1="475.8" x2="1090.9" y2="341"><stop offset="0" stop-color="#fff"/><stop offset=".225" stop-color="#f4ffb8"/><stop offset=".469" stop-color="#ebff76"/><stop offset=".725" stop-color="#e1ff39"/><stop offset="1" stop-color="#d9ff00"/></linearGradient>
<linearGradient id="i130" gradientUnits="userSpaceOnUse" x1="1096" y1="475.8" x2="1098" y2="341.8"><stop offset="0" stop-color="#fff"/><stop offset=".225" stop-color="#f9ffb9"/><stop offset=".469" stop-color="#f4ff77"/><stop offset="1" stop-color="#ebff00"/></linearGradient>
<linearGradient id="i131" gradientUnits="userSpaceOnUse" x1="1096" y1="475.8" x2="1105" y2="342.6"><stop offset="0" stop-color="#fff"/><stop offset=".225" stop-color="#feffba"/><stop offset=".469" stop-color="#feff78"/><stop offset="1" stop-color="#fdff00"/></linearGradient>
<linearGradient id="i132" gradientUnits="userSpaceOnUse" x1="1096" y1="475.8" x2="1111.9" y2="343.5"><stop offset="0" stop-color="#fff"/><stop offset=".225" stop-color="#fffbb8"/><stop offset=".463" stop-color="#fff777"/><stop offset=".725" stop-color="#fff338"/><stop offset="1" stop-color="#ffef00"/></linearGradient>
<linearGradient id="i133" gradientUnits="userSpaceOnUse" x1="1096" y1="475.8" x2="1118.8" y2="344.3"><stop offset="0" stop-color="#fff"/><stop offset=".219" stop-color="#fff6b7"/><stop offset=".456" stop-color="#ffee75"/><stop offset=".719" stop-color="#ffe638"/><stop offset="1" stop-color="#ffdf00"/></linearGradient>
<linearGradient id="i134" gradientUnits="userSpaceOnUse" x1="1096" y1="475.8" x2="1125.8" y2="345.1"><stop offset="0" stop-color="#fff"/><stop offset=".212" stop-color="#fff2b6"/><stop offset=".45" stop-color="#ffe674"/><stop offset=".713" stop-color="#ffdb37"/><stop offset="1" stop-color="#ffd100"/></linearGradient>
<linearGradient id="i135" gradientUnits="userSpaceOnUse" x1="1096" y1="475.8" x2="1132.9" y2="346"><stop offset="0" stop-color="#fff"/><stop offset=".213" stop-color="#ffeeb4"/><stop offset=".444" stop-color="#ffde72"/><stop offset=".706" stop-color="#ffd036"/><stop offset="1" stop-color="#ffc400"/></linearGradient>
<linearGradient id="i136" gradientUnits="userSpaceOnUse" x1="1096" y1="475.8" x2="1140" y2="346.8"><stop offset="0" stop-color="#fff"/><stop offset=".206" stop-color="#ffeab4"/><stop offset=".438" stop-color="#ffd771"/><stop offset=".7" stop-color="#ffc635"/><stop offset="1" stop-color="#ffb700"/></linearGradient>
<linearGradient id="i137" gradientUnits="userSpaceOnUse" x1="1096" y1="475.8" x2="1147.4" y2="347.7"><stop offset="0" stop-color="#fff"/><stop offset=".206" stop-color="#ffe6b1"/><stop offset=".438" stop-color="#ffd06e"/><stop offset=".7" stop-color="#ffbc34"/><stop offset="1" stop-color="#ffac00"/></linearGradient>
<linearGradient id="i138" gradientUnits="userSpaceOnUse" x1="1096" y1="475.8" x2="1154.9" y2="348.6"><stop offset="0" stop-color="#fff"/><stop offset=".2" stop-color="#ffe2b1"/><stop offset=".431" stop-color="#ffc96d"/><stop offset=".694" stop-color="#ffb433"/><stop offset="1" stop-color="#ffa100"/></linearGradient>
<linearGradient id="i139" gradientUnits="userSpaceOnUse" x1="1096" y1="475.8" x2="1162.7" y2="349.5"><stop offset="0" stop-color="#fff"/><stop offset=".194" stop-color="#ffdfb1"/><stop offset=".425" stop-color="#ffc36c"/><stop offset=".694" stop-color="#ffab31"/><stop offset="1" stop-color="#ff9600"/></linearGradient>
<linearGradient id="i140" gradientUnits="userSpaceOnUse" x1="1096" y1="475.8" x2="1170.9" y2="350.5"><stop offset="0" stop-color="#fff"/><stop offset=".194" stop-color="#ffdbae"/><stop offset=".419" stop-color="#ffbc6b"/><stop offset=".688" stop-color="#ffa231"/><stop offset="1" stop-color="#ff8d00"/></linearGradient>
<linearGradient id="i141" gradientUnits="userSpaceOnUse" x1="1096" y1="475.8" x2="1179.4" y2="351.5"><stop offset="0" stop-color="#fff"/><stop offset=".188" stop-color="#ffd8ae"/><stop offset=".413" stop-color="#ffb66a"/><stop offset=".681" stop-color="#ff9a30"/><stop offset="1" stop-color="#ff8300"/></linearGradient>
<linearGradient id="i142" gradientUnits="userSpaceOnUse" x1="1096" y1="475.8" x2="1188.4" y2="352.6"><stop offset="0" stop-color="#fff"/><stop offset=".181" stop-color="#ffd5ae"/><stop offset=".406" stop-color="#ffb169"/><stop offset=".675" stop-color="#ff932f"/><stop offset="1" stop-color="#ff7a00"/></linearGradient>
<linearGradient id="i143" gradientUnits="userSpaceOnUse" x1="1096" y1="475.8" x2="1197.8" y2="353.7"><stop offset="0" stop-color="#fff"/><stop offset=".087" stop-color="#ffe6d3"/><stop offset=".181" stop-color="#ffd1ac"/><stop offset=".4" stop-color="#ffab67"/><stop offset=".669" stop-color="#ff8b2f"/><stop offset="1" stop-color="#ff7100"/></linearGradient>
<linearGradient id="i144" gradientUnits="userSpaceOnUse" x1="1096" y1="475.8" x2="1207.6" y2="354.9"><stop offset="0" stop-color="#fff"/><stop offset=".087" stop-color="#ffe4d1"/><stop offset=".181" stop-color="#ffcca9"/><stop offset=".4" stop-color="#ffa465"/><stop offset=".669" stop-color="#ff832d"/><stop offset="1" stop-color="#ff6900"/></linearGradient>
<linearGradient id="i145" gradientUnits="userSpaceOnUse" x1="1096" y1="475.8" x2="1217.8" y2="356.1"><stop offset="0" stop-color="#fff"/><stop offset=".081" stop-color="#ffe3d2"/><stop offset=".175" stop-color="#ffcaa9"/><stop offset=".394" stop-color="#ff9f64"/><stop offset=".663" stop-color="#ff7d2d"/><stop offset="1" stop-color="#ff6100"/></linearGradient>
<linearGradient id="i146" gradientUnits="userSpaceOnUse" x1="1096" y1="475.8" x2="1228.3" y2="357.4"><stop offset="0" stop-color="#fff"/><stop offset=".081" stop-color="#ffe1d1"/><stop offset=".169" stop-color="#ffc7a9"/><stop offset=".269" stop-color="#ffb085"/><stop offset=".388" stop-color="#ff9963"/><stop offset=".656" stop-color="#ff762c"/><stop offset="1" stop-color="#ff5900"/></linearGradient>
<linearGradient id="i147" gradientUnits="userSpaceOnUse" x1="1096" y1="475.8" x2="1239.4" y2="358.7"><stop offset="0" stop-color="#fff"/><stop offset=".081" stop-color="#ffdecf"/><stop offset=".169" stop-color="#ffc3a7"/><stop offset=".269" stop-color="#ffaa82"/><stop offset=".381" stop-color="#ff9462"/><stop offset=".656" stop-color="#ff6f2b"/><stop offset="1" stop-color="#ff5200"/></linearGradient>
<linearGradient id="i148" gradientUnits="userSpaceOnUse" x1="1096" y1="475.8" x2="1250.9" y2="360.1"><stop offset="0" stop-color="#fff"/><stop offset=".075" stop-color="#ffded1"/><stop offset=".163" stop-color="#ffc1a7"/><stop offset=".263" stop-color="#ffa681"/><stop offset=".375" stop-color="#ff8f61"/><stop offset=".65" stop-color="#ff692a"/><stop offset="1" stop-color="#ff4b00"/></linearGradient>
<linearGradient id="i149" gradientUnits="userSpaceOnUse" x1="1096" y1="475.8" x2="1262.9" y2="361.5"><stop offset="0" stop-color="#fff"/><stop offset=".075" stop-color="#ffdccf"/><stop offset=".162" stop-color="#ffbda4"/><stop offset=".263" stop-color="#ffa17e"/><stop offset=".375" stop-color="#ff895e"/><stop offset=".65" stop-color="#ff6228"/><stop offset="1" stop-color="#f40"/></linearGradient>
<linearGradient id="i150" gradientUnits="userSpaceOnUse" x1="1096" y1="475.8" x2="1275.5" y2="363"><stop offset="0" stop-color="#fff"/><stop offset=".075" stop-color="#ffd9cd"/><stop offset=".156" stop-color="#ffbaa4"/><stop offset=".256" stop-color="#ff9d7e"/><stop offset=".369" stop-color="#ff845d"/><stop offset=".644" stop-color="#ff5c28"/><stop offset="1" stop-color="#ff3e00"/></linearGradient>
<linearGradient id="i151" gradientUnits="userSpaceOnUse" x1="1096" y1="475.8" x2="1288.8" y2="364.6"><stop offset="0" stop-color="#fff"/><stop offset=".075" stop-color="#ffd7cc"/><stop offset=".156" stop-color="#ffb6a2"/><stop offset=".25" stop-color="#ff9a7d"/><stop offset=".363" stop-color="#ff805c"/><stop offset=".637" stop-color="#ff5727"/><stop offset="1" stop-color="#ff3800"/></linearGradient>
<linearGradient id="i152" gradientUnits="userSpaceOnUse" x1="1096" y1="475.8" x2="1302.7" y2="366.3"><stop offset="0" stop-color="#fff"/><stop offset=".069" stop-color="#ffd7ce"/><stop offset=".15" stop-color="#ffb4a2"/><stop offset=".244" stop-color="#ff967c"/><stop offset=".356" stop-color="#ff7b5b"/><stop offset=".631" stop-color="#ff5127"/><stop offset="1" stop-color="#ff3200"/></linearGradient>
<linearGradient id="i153" gradientUnits="userSpaceOnUse" x1="1096" y1="475.8" x2="1317.4" y2="368"><stop offset="0" stop-color="#fff"/><stop offset=".069" stop-color="#ffd5cc"/><stop offset=".15" stop-color="#ffb09f"/><stop offset=".244" stop-color="#ff917a"/><stop offset=".35" stop-color="#ff775a"/><stop offset=".625" stop-color="#ff4c26"/><stop offset="1" stop-color="#ff2c00"/></linearGradient>
<linearGradient id="i154" gradientUnits="userSpaceOnUse" x1="1096" y1="475.8" x2="1332.9" y2="369.9"><stop offset="0" stop-color="#fff"/><stop offset=".069" stop-color="#ffd2ca"/><stop offset=".144" stop-color="#ffaea0"/><stop offset=".237" stop-color="#ff8d79"/><stop offset=".344" stop-color="#ff7259"/><stop offset=".469" stop-color="#ff5b3e"/><stop offset=".619" stop-color="#ff4726"/><stop offset="1" stop-color="#ff2700"/></linearGradient>
<linearGradient id="i155" gradientUnits="userSpaceOnUse" x1="1096" y1="475.8" x2="1349.2" y2="371.8"><stop offset="0" stop-color="#fff"/><stop offset=".069" stop-color="#ffcfc8"/><stop offset=".144" stop-color="#ffaa9d"/><stop offset=".238" stop-color="#ff8876"/><stop offset=".344" stop-color="#ff6d56"/><stop offset=".469" stop-color="#ff553c"/><stop offset=".619" stop-color="#ff4124"/><stop offset="1" stop-color="#ff2100"/></linearGradient>
<linearGradient id="i156" gradientUnits="userSpaceOnUse" x1="1096" y1="475.8" x2="1366.4" y2="373.9"><stop offset="0" stop-color="#fff"/><stop offset=".062" stop-color="#ffd0ca"/><stop offset=".138" stop-color="#ffa89d"/><stop offset=".231" stop-color="#ff8575"/><stop offset=".337" stop-color="#ff6855"/><stop offset=".463" stop-color="#ff503b"/><stop offset=".612" stop-color="#ff3c24"/><stop offset="1" stop-color="#ff1c00"/></linearGradient>
<linearGradient id="i157" gradientUnits="userSpaceOnUse" x1="1096" y1="475.8" x2="1384.6" y2="376.1"><stop offset="0" stop-color="#fff"/><stop offset=".062" stop-color="#ffcdc8"/><stop offset=".138" stop-color="#ffa49b"/><stop offset=".225" stop-color="#ff8175"/><stop offset=".331" stop-color="#ff6454"/><stop offset=".456" stop-color="#ff4c3a"/><stop offset=".606" stop-color="#ff3723"/><stop offset="1" stop-color="#ff1700"/></linearGradient>
<linearGradient id="i158" gradientUnits="userSpaceOnUse" x1="1096" y1="475.8" x2="1403.8" y2="378.4"><stop offset="0" stop-color="#fff"/><stop offset=".062" stop-color="#ffcbc6"/><stop offset=".131" stop-color="#ffa29b"/><stop offset=".219" stop-color="#ff7e74"/><stop offset=".325" stop-color="#ff6053"/><stop offset=".45" stop-color="#ff4739"/><stop offset=".6" stop-color="#f32"/><stop offset="1" stop-color="#ff1300"/></linearGradient>
<linearGradient id="i159" gradientUnits="userSpaceOnUse" x1="1096" y1="475.8" x2="1424.2" y2="380.8"><stop offset="0" stop-color="#fff"/><stop offset=".062" stop-color="#ffc8c4"/><stop offset=".131" stop-color="#ff9e98"/><stop offset=".219" stop-color="#ff7971"/><stop offset=".319" stop-color="#ff5c52"/><stop offset=".444" stop-color="#ff4338"/><stop offset=".594" stop-color="#ff2e22"/><stop offset="1" stop-color="#ff0e00"/></linearGradient>
<linearGradient id="i160" gradientUnits="userSpaceOnUse" x1="1096" y1="475.8" x2="1445.7" y2="383.4"><stop offset="0" stop-color="#fff"/><stop offset=".056" stop-color="#ffc9c7"/><stop offset=".131" stop-color="#ff9995"/><stop offset=".219" stop-color="#ff746e"/><stop offset=".319" stop-color="#ff5650"/><stop offset=".444" stop-color="#ff3d36"/><stop offset=".594" stop-color="#ff2920"/><stop offset="1" stop-color="#ff0a00"/></linearGradient>
<linearGradient id="i161" gradientUnits="userSpaceOnUse" x1="1096" y1="475.8" x2="1468.5" y2="386.1"><stop offset="0" stop-color="#fff"/><stop offset=".056" stop-color="#ffc6c5"/><stop offset=".125" stop-color="#ff9896"/><stop offset=".212" stop-color="#ff716d"/><stop offset=".312" stop-color="#ff524f"/><stop offset=".437" stop-color="#ff3935"/><stop offset=".587" stop-color="#ff2520"/><stop offset="1" stop-color="#ff0500"/></linearGradient>
<linearGradient id="i162" gradientUnits="userSpaceOnUse" x1="1096" y1="475.8" x2="1492.7" y2="389"><stop offset="0" stop-color="#fff"/><stop offset=".056" stop-color="#ffc3c3"/><stop offset=".125" stop-color="#ff9393"/><stop offset=".206" stop-color="#ff6e6d"/><stop offset=".306" stop-color="#ff4f4e"/><stop offset=".431" stop-color="#ff3534"/><stop offset=".581" stop-color="#ff201f"/><stop offset="1" stop-color="#ff0100"/></linearGradient>
<linearGradient id="i163" gradientUnits="userSpaceOnUse" x1="1096" y1="475.8" x2="1495.8" y2="396.6"><stop offset="0" stop-color="#fff"/><stop offset=".056" stop-color="#ffc3c3"/><stop offset=".125" stop-color="#ff9294"/><stop offset=".206" stop-color="#ff6d6e"/><stop offset=".306" stop-color="#ff4d4f"/><stop offset=".431" stop-color="#ff3436"/><stop offset=".581" stop-color="#ff1f21"/><stop offset="1" stop-color="#ff0003"/></linearGradient>
<linearGradient id="i164" gradientUnits="userSpaceOnUse" x1="1096" y1="475.8" x2="1488.6" y2="406"><stop offset="0" stop-color="#fff"/><stop offset=".056" stop-color="#ffc4c5"/><stop offset=".125" stop-color="#ff9396"/><stop offset=".206" stop-color="#ff6e71"/><stop offset=".306" stop-color="#ff4e53"/><stop offset=".431" stop-color="#ff343a"/><stop offset=".581" stop-color="#ff2025"/><stop offset="1" stop-color="#ff0007"/></linearGradient>
<linearGradient id="i165" gradientUnits="userSpaceOnUse" x1="1096" y1="475.8" x2="1481.5" y2="415.2"><stop offset="0" stop-color="#fff"/><stop offset=".056" stop-color="#ffc4c7"/><stop offset=".125" stop-color="#ff9599"/><stop offset=".206" stop-color="#ff6f75"/><stop offset=".306" stop-color="#ff4f56"/><stop offset=".431" stop-color="#ff353d"/><stop offset=".581" stop-color="#ff2029"/><stop offset="1" stop-color="#ff000a"/></linearGradient>
<linearGradient id="i166" gradientUnits="userSpaceOnUse" x1="1096" y1="475.8" x2="1474.6" y2="424.2"><stop offset="0" stop-color="#fff"/><stop offset=".056" stop-color="#ffc5c8"/><stop offset=".125" stop-color="#ff969b"/><stop offset=".206" stop-color="#ff7078"/><stop offset=".312" stop-color="#ff4f59"/><stop offset=".437" stop-color="#ff3540"/><stop offset=".587" stop-color="#ff202c"/><stop offset="1" stop-color="#ff000e"/></linearGradient>
<linearGradient id="i167" gradientUnits="userSpaceOnUse" x1="1096" y1="475.8" x2="1467.8" y2="433.1"><stop offset="0" stop-color="#fff"/><stop offset=".056" stop-color="#ffc6ca"/><stop offset=".125" stop-color="#ff979e"/><stop offset=".213" stop-color="#ff6e79"/><stop offset=".313" stop-color="#ff505c"/><stop offset=".438" stop-color="#ff3544"/><stop offset=".587" stop-color="#ff2030"/><stop offset="1" stop-color="#ff0012"/></linearGradient>
<linearGradient id="i168" gradientUnits="userSpaceOnUse" x1="1096" y1="475.8" x2="1461.2" y2="441.7"><stop offset="0" stop-color="#fff"/><stop offset=".056" stop-color="#ffc6cb"/><stop offset=".125" stop-color="#ff98a1"/><stop offset=".213" stop-color="#ff6f7c"/><stop offset=".312" stop-color="#ff5060"/><stop offset=".438" stop-color="#ff3648"/><stop offset=".588" stop-color="#ff2134"/><stop offset="1" stop-color="#ff0016"/></linearGradient>
<linearGradient id="i169" gradientUnits="userSpaceOnUse" x1="1096" y1="475.8" x2="1454.7" y2="450.2"><stop offset="0" stop-color="#fff"/><stop offset=".056" stop-color="#ffc7cd"/><stop offset=".131" stop-color="#ff95a0"/><stop offset=".219" stop-color="#ff6e7d"/><stop offset=".319" stop-color="#ff5062"/><stop offset=".444" stop-color="#ff364b"/><stop offset=".594" stop-color="#ff2038"/><stop offset="1" stop-color="#ff001b"/></linearGradient>
<linearGradient id="i170" gradientUnits="userSpaceOnUse" x1="1096" y1="475.8" x2="1448.3" y2="458.5"><stop offset="0" stop-color="#fff"/><stop offset=".056" stop-color="#ffc8cf"/><stop offset=".131" stop-color="#ff96a3"/><stop offset=".219" stop-color="#ff6f80"/><stop offset=".319" stop-color="#ff5166"/><stop offset=".444" stop-color="#ff364f"/><stop offset=".594" stop-color="#ff213c"/><stop offset="1" stop-color="#ff001f"/></linearGradient>
<linearGradient id="i171" gradientUnits="userSpaceOnUse" x1="1096" y1="475.8" x2="1442" y2="466.7"><stop offset="0" stop-color="#fff"/><stop offset=".062" stop-color="#ffc4cc"/><stop offset=".131" stop-color="#ff97a5"/><stop offset=".219" stop-color="#ff7084"/><stop offset=".319" stop-color="#ff5269"/><stop offset=".444" stop-color="#ff3753"/><stop offset=".594" stop-color="#ff2140"/><stop offset="1" stop-color="#ff0023"/></linearGradient>
<linearGradient id="i172" gradientUnits="userSpaceOnUse" x1="1096" y1="475.8" x2="1436.9" y2="473.3"><stop offset="0" stop-color="#fff"/><stop offset=".062" stop-color="#ffc4cd"/><stop offset=".131" stop-color="#ff98a8"/><stop offset=".219" stop-color="#ff7186"/><stop offset=".319" stop-color="#ff526c"/><stop offset=".444" stop-color="#ff3856"/><stop offset=".594" stop-color="#ff2243"/><stop offset="1" stop-color="#ff0027"/></linearGradient>
<filter id="gb" filterUnits="userSpaceOnUse" x="700" y="150" width="1160" height="1120"><feGaussianBlur stdDeviation="2.2"/></filter>
<radialGradient id="wg"><stop offset="0" stop-color="#fff"/><stop offset=".35" stop-color="#fff" stop-opacity=".8"/><stop offset="1" stop-color="#fff" stop-opacity="0"/></radialGradient>
<clipPath id="cin"><rect x="2335.3" y="573.5" width="156.7" height="155.3"/></clipPath>
<linearGradient id="n0" gradientUnits="userSpaceOnUse" x1="2437.4" y1="649.8" x2="2498.9" y2="652.5"><stop offset="0" stop-color="#fff"/><stop offset=".475" stop-color="#ffdfe5"/><stop offset="1" stop-color="#ffc1cd"/></linearGradient>
<linearGradient id="n1" gradientUnits="userSpaceOnUse" x1="2437.4" y1="649.8" x2="2498.9" y2="657.9"><stop offset="0" stop-color="#fff"/><stop offset=".475" stop-color="#ffdee7"/><stop offset="1" stop-color="#ffc1d2"/></linearGradient>
<linearGradient id="n2" gradientUnits="userSpaceOnUse" x1="2437.4" y1="649.8" x2="2498.9" y2="663.4"><stop offset="0" stop-color="#fff"/><stop offset=".475" stop-color="#ffdee9"/><stop offset="1" stop-color="#ffc0d6"/></linearGradient>
<linearGradient id="n3" gradientUnits="userSpaceOnUse" x1="2437.4" y1="649.8" x2="2498.9" y2="669.2"><stop offset="0" stop-color="#fff"/><stop offset=".475" stop-color="#ffdeec"/><stop offset="1" stop-color="#ffc0da"/></linearGradient>
<linearGradient id="n4" gradientUnits="userSpaceOnUse" x1="2437.4" y1="649.8" x2="2498.9" y2="675.3"><stop offset="0" stop-color="#fff"/><stop offset=".475" stop-color="#fde"/><stop offset="1" stop-color="#ffbfdf"/></linearGradient>
<linearGradient id="n5" gradientUnits="userSpaceOnUse" x1="2437.4" y1="649.8" x2="2498.9" y2="681.8"><stop offset="0" stop-color="#fff"/><stop offset=".475" stop-color="#ffddf1"/><stop offset="1" stop-color="#ffbee4"/></linearGradient>
<linearGradient id="n6" gradientUnits="userSpaceOnUse" x1="2437.4" y1="649.8" x2="2498.9" y2="689"><stop offset="0" stop-color="#fff"/><stop offset=".475" stop-color="#ffddf4"/><stop offset="1" stop-color="#ffbdea"/></linearGradient>
<linearGradient id="n7" gradientUnits="userSpaceOnUse" x1="2437.4" y1="649.8" x2="2498.9" y2="697"><stop offset="0" stop-color="#fff"/><stop offset=".475" stop-color="#ffdcf7"/><stop offset="1" stop-color="#ffbcf1"/></linearGradient>
<linearGradient id="n8" gradientUnits="userSpaceOnUse" x1="2437.4" y1="649.8" x2="2498.9" y2="706.2"><stop offset="0" stop-color="#fff"/><stop offset=".475" stop-color="#ffdcfb"/><stop offset="1" stop-color="#ffbbf8"/></linearGradient>
<linearGradient id="n9" gradientUnits="userSpaceOnUse" x1="2437.4" y1="649.8" x2="2498.9" y2="716.9"><stop offset="0" stop-color="#fff"/><stop offset=".475" stop-color="#fedaff"/><stop offset="1" stop-color="#fdb9ff"/></linearGradient>
<linearGradient id="n10" gradientUnits="userSpaceOnUse" x1="2437.4" y1="649.8" x2="2498.9" y2="730"><stop offset="0" stop-color="#fff"/><stop offset=".475" stop-color="#f9d5ff"/><stop offset="1" stop-color="#f3b0ff"/></linearGradient>
<linearGradient id="n11" gradientUnits="userSpaceOnUse" x1="2437.4" y1="649.8" x2="2492.9" y2="736.9"><stop offset="0" stop-color="#fff"/><stop offset=".475" stop-color="#f3d3ff"/><stop offset="1" stop-color="#e9acff"/></linearGradient>
<linearGradient id="n12" gradientUnits="userSpaceOnUse" x1="2437.4" y1="649.8" x2="2482.8" y2="736.9"><stop offset="0" stop-color="#fff"/><stop offset=".475" stop-color="#efd4ff"/><stop offset="1" stop-color="#e1aeff"/></linearGradient>
<linearGradient id="n13" gradientUnits="userSpaceOnUse" x1="2437.4" y1="649.8" x2="2473.5" y2="736.9"><stop offset="0" stop-color="#fff"/><stop offset=".475" stop-color="#ebd4ff"/><stop offset="1" stop-color="#d9afff"/></linearGradient>
<linearGradient id="n14" gradientUnits="userSpaceOnUse" x1="2437.4" y1="649.8" x2="2464.9" y2="736.9"><stop offset="0" stop-color="#fff"/><stop offset=".475" stop-color="#e7d5ff"/><stop offset="1" stop-color="#d3b1ff"/></linearGradient>
<linearGradient id="n15" gradientUnits="userSpaceOnUse" x1="2437.4" y1="649.8" x2="2456.7" y2="736.9"><stop offset="0" stop-color="#fff"/><stop offset=".475" stop-color="#e4d6ff"/><stop offset="1" stop-color="#ccb2ff"/></linearGradient>
<linearGradient id="n16" gradientUnits="userSpaceOnUse" x1="2437.4" y1="649.8" x2="2448.9" y2="736.9"><stop offset="0" stop-color="#fff"/><stop offset=".475" stop-color="#e0d7ff"/><stop offset="1" stop-color="#c6b4ff"/></linearGradient>
<linearGradient id="n17" gradientUnits="userSpaceOnUse" x1="2437.4" y1="649.8" x2="2441.2" y2="736.9"><stop offset="0" stop-color="#fff"/><stop offset=".475" stop-color="#ddd7ff"/><stop offset="1" stop-color="#c0b5ff"/></linearGradient>
<linearGradient id="n18" gradientUnits="userSpaceOnUse" x1="2437.4" y1="649.8" x2="2433.6" y2="736.9"><stop offset="0" stop-color="#fff"/><stop offset=".463" stop-color="#dbd9ff"/><stop offset="1" stop-color="#bab6ff"/></linearGradient>
<linearGradient id="n19" gradientUnits="userSpaceOnUse" x1="2437.4" y1="649.8" x2="2425.9" y2="736.9"><stop offset="0" stop-color="#fff"/><stop offset=".462" stop-color="#d7d9ff"/><stop offset="1" stop-color="#b4b7ff"/></linearGradient>
<linearGradient id="n20" gradientUnits="userSpaceOnUse" x1="2437.4" y1="649.8" x2="2418.1" y2="736.9"><stop offset="0" stop-color="#fff"/><stop offset=".462" stop-color="#d4daff"/><stop offset="1" stop-color="#aeb9ff"/></linearGradient>
<linearGradient id="n21" gradientUnits="userSpaceOnUse" x1="2437.4" y1="649.8" x2="2409.9" y2="736.9"><stop offset="0" stop-color="#fff"/><stop offset=".463" stop-color="#d1dbff"/><stop offset="1" stop-color="#a7baff"/></linearGradient>
<linearGradient id="n22" gradientUnits="userSpaceOnUse" x1="2437.4" y1="649.8" x2="2401.3" y2="736.9"><stop offset="0" stop-color="#fff"/><stop offset=".462" stop-color="#cddbff"/><stop offset="1" stop-color="#a1bbff"/></linearGradient>
<linearGradient id="n23" gradientUnits="userSpaceOnUse" x1="2437.4" y1="649.8" x2="2392" y2="736.9"><stop offset="0" stop-color="#fff"/><stop offset=".463" stop-color="#c9dcff"/><stop offset="1" stop-color="#9abdff"/></linearGradient>
<linearGradient id="n24" gradientUnits="userSpaceOnUse" x1="2437.4" y1="649.8" x2="2381.9" y2="736.9"><stop offset="0" stop-color="#fff"/><stop offset=".463" stop-color="#c5ddff"/><stop offset="1" stop-color="#92bfff"/></linearGradient>
<linearGradient id="n25" gradientUnits="userSpaceOnUse" x1="2437.4" y1="649.8" x2="2370.5" y2="736.9"><stop offset="0" stop-color="#fff"/><stop offset=".462" stop-color="#c1deff"/><stop offset="1" stop-color="#89c1ff"/></linearGradient>
<linearGradient id="n26" gradientUnits="userSpaceOnUse" x1="2437.4" y1="649.8" x2="2357.5" y2="736.9"><stop offset="0" stop-color="#fff"/><stop offset=".462" stop-color="#bbdfff"/><stop offset="1" stop-color="#7fc3ff"/></linearGradient>
<linearGradient id="n27" gradientUnits="userSpaceOnUse" x1="2437.4" y1="649.8" x2="2342.3" y2="736.9"><stop offset="0" stop-color="#fff"/><stop offset=".463" stop-color="#b5e0ff"/><stop offset="1" stop-color="#74c5ff"/></linearGradient>
<linearGradient id="n28" gradientUnits="userSpaceOnUse" x1="2437.4" y1="649.8" x2="2326" y2="735.3"><stop offset="0" stop-color="#fff"/><stop offset=".463" stop-color="#afe2ff"/><stop offset="1" stop-color="#68c9ff"/></linearGradient>
<linearGradient id="n29" gradientUnits="userSpaceOnUse" x1="2437.4" y1="649.8" x2="2326" y2="720.8"><stop offset="0" stop-color="#fff"/><stop offset=".475" stop-color="#b1e8ff"/><stop offset="1" stop-color="#6ed3ff"/></linearGradient>
<linearGradient id="n30" gradientUnits="userSpaceOnUse" x1="2437.4" y1="649.8" x2="2326" y2="707.8"><stop offset="0" stop-color="#fff"/><stop offset=".475" stop-color="#b5edff"/><stop offset="1" stop-color="#73ddff"/></linearGradient>
<linearGradient id="n31" gradientUnits="userSpaceOnUse" x1="2437.4" y1="649.8" x2="2326" y2="695.9"><stop offset="0" stop-color="#fff"/><stop offset=".475" stop-color="#b9f2ff"/><stop offset="1" stop-color="#78e7ff"/></linearGradient>
<linearGradient id="n32" gradientUnits="userSpaceOnUse" x1="2437.4" y1="649.8" x2="2326" y2="684.9"><stop offset="0" stop-color="#fff"/><stop offset=".488" stop-color="#bbf7ff"/><stop offset="1" stop-color="#7df0ff"/></linearGradient>
<linearGradient id="n33" gradientUnits="userSpaceOnUse" x1="2437.4" y1="649.8" x2="2326" y2="674.5"><stop offset="0" stop-color="#fff"/><stop offset=".487" stop-color="#bffcff"/><stop offset="1" stop-color="#83faff"/></linearGradient>
<linearGradient id="n34" gradientUnits="userSpaceOnUse" x1="2437.4" y1="649.8" x2="2326" y2="664.5"><stop offset="0" stop-color="#fff"/><stop offset=".487" stop-color="#c1fffc"/><stop offset="1" stop-color="#85fffa"/></linearGradient>
<linearGradient id="n35" gradientUnits="userSpaceOnUse" x1="2437.4" y1="649.8" x2="2326" y2="654.7"><stop offset="0" stop-color="#fff"/><stop offset=".487" stop-color="#c0fff8"/><stop offset="1" stop-color="#85fff1"/></linearGradient>
<linearGradient id="n36" gradientUnits="userSpaceOnUse" x1="2437.4" y1="649.8" x2="2326" y2="644.9"><stop offset="0" stop-color="#fff"/><stop offset=".487" stop-color="#c0fff3"/><stop offset="1" stop-color="#85ffe7"/></linearGradient>
<linearGradient id="n37" gradientUnits="userSpaceOnUse" x1="2437.4" y1="649.8" x2="2326" y2="635.1"><stop offset="0" stop-color="#fff"/><stop offset=".488" stop-color="#c0ffee"/><stop offset="1" stop-color="#86ffde"/></linearGradient>
<linearGradient id="n38" gradientUnits="userSpaceOnUse" x1="2437.4" y1="649.8" x2="2326" y2="625.1"><stop offset="0" stop-color="#fff"/><stop offset=".487" stop-color="#c0ffe9"/><stop offset="1" stop-color="#86ffd5"/></linearGradient>
<linearGradient id="n39" gradientUnits="userSpaceOnUse" x1="2437.4" y1="649.8" x2="2326" y2="614.7"><stop offset="0" stop-color="#fff"/><stop offset=".488" stop-color="#c0ffe4"/><stop offset="1" stop-color="#86ffcc"/></linearGradient>
<linearGradient id="n40" gradientUnits="userSpaceOnUse" x1="2437.4" y1="649.8" x2="2326" y2="603.7"><stop offset="0" stop-color="#fff"/><stop offset=".475" stop-color="#c1ffe0"/><stop offset="1" stop-color="#86ffc2"/></linearGradient>
<linearGradient id="n41" gradientUnits="userSpaceOnUse" x1="2437.4" y1="649.8" x2="2326" y2="591.8"><stop offset="0" stop-color="#fff"/><stop offset=".475" stop-color="#c1ffda"/><stop offset="1" stop-color="#86ffb8"/></linearGradient>
<linearGradient id="n42" gradientUnits="userSpaceOnUse" x1="2437.4" y1="649.8" x2="2326" y2="578.8"><stop offset="0" stop-color="#fff"/><stop offset=".475" stop-color="#c0ffd4"/><stop offset="1" stop-color="#86ffad"/></linearGradient>
<linearGradient id="n43" gradientUnits="userSpaceOnUse" x1="2437.4" y1="649.8" x2="2327.5" y2="565.5"><stop offset="0" stop-color="#fff"/><stop offset=".475" stop-color="#c1ffce"/><stop offset="1" stop-color="#88ffa2"/></linearGradient>
<linearGradient id="n44" gradientUnits="userSpaceOnUse" x1="2437.4" y1="649.8" x2="2345.4" y2="565.5"><stop offset="0" stop-color="#fff"/><stop offset=".475" stop-color="#caffcf"/><stop offset="1" stop-color="#98ffa3"/></linearGradient>
<linearGradient id="n45" gradientUnits="userSpaceOnUse" x1="2437.4" y1="649.8" x2="2360.1" y2="565.5"><stop offset="0" stop-color="#fff"/><stop offset=".475" stop-color="#d1ffd0"/><stop offset="1" stop-color="#a6ffa4"/></linearGradient>
<linearGradient id="n46" gradientUnits="userSpaceOnUse" x1="2437.4" y1="649.8" x2="2372.7" y2="565.5"><stop offset="0" stop-color="#fff"/><stop offset=".487" stop-color="#d7ffd0"/><stop offset="1" stop-color="#b3ffa5"/></linearGradient>
<linearGradient id="n47" gradientUnits="userSpaceOnUse" x1="2437.4" y1="649.8" x2="2383.7" y2="565.5"><stop offset="0" stop-color="#fff"/><stop offset="1" stop-color="#beffa6"/></linearGradient>
<linearGradient id="n48" gradientUnits="userSpaceOnUse" x1="2437.4" y1="649.8" x2="2393.5" y2="565.5"><stop offset="0" stop-color="#fff"/><stop offset="1" stop-color="#c8ffa7"/></linearGradient>
<linearGradient id="n49" gradientUnits="userSpaceOnUse" x1="2437.4" y1="649.8" x2="2402.5" y2="565.5"><stop offset="0" stop-color="#fff"/><stop offset="1" stop-color="#d1ffa8"/></linearGradient>
<linearGradient id="n50" gradientUnits="userSpaceOnUse" x1="2437.4" y1="649.8" x2="2410.8" y2="565.5"><stop offset="0" stop-color="#fff"/><stop offset="1" stop-color="#daffa8"/></linearGradient>
<linearGradient id="n51" gradientUnits="userSpaceOnUse" x1="2437.4" y1="649.8" x2="2418.7" y2="565.5"><stop offset="0" stop-color="#fff"/><stop offset="1" stop-color="#e2ffa9"/></linearGradient>
<linearGradient id="n52" gradientUnits="userSpaceOnUse" x1="2437.4" y1="649.8" x2="2426.3" y2="565.5"><stop offset="0" stop-color="#fff"/><stop offset="1" stop-color="#eaffaa"/></linearGradient>
<linearGradient id="n53" gradientUnits="userSpaceOnUse" x1="2437.4" y1="649.8" x2="2433.7" y2="565.5"><stop offset="0" stop-color="#fff"/><stop offset="1" stop-color="#f3ffaa"/></linearGradient>
<linearGradient id="n54" gradientUnits="userSpaceOnUse" x1="2437.4" y1="649.8" x2="2441.1" y2="565.5"><stop offset="0" stop-color="#fff"/><stop offset="1" stop-color="#fbffab"/></linearGradient>
<linearGradient id="n55" gradientUnits="userSpaceOnUse" x1="2437.4" y1="649.8" x2="2448.5" y2="565.5"><stop offset="0" stop-color="#fff"/><stop offset="1" stop-color="#fffba9"/></linearGradient>
<linearGradient id="n56" gradientUnits="userSpaceOnUse" x1="2437.4" y1="649.8" x2="2456.1" y2="565.5"><stop offset="0" stop-color="#fff"/><stop offset="1" stop-color="#fff3a4"/></linearGradient>
<linearGradient id="n57" gradientUnits="userSpaceOnUse" x1="2437.4" y1="649.8" x2="2464" y2="565.5"><stop offset="0" stop-color="#fff"/><stop offset=".487" stop-color="#fff4cd"/><stop offset="1" stop-color="#ffeb9f"/></linearGradient>
<linearGradient id="n58" gradientUnits="userSpaceOnUse" x1="2437.4" y1="649.8" x2="2472.3" y2="565.5"><stop offset="0" stop-color="#fff"/><stop offset=".475" stop-color="#fff0cb"/><stop offset="1" stop-color="#ffe29b"/></linearGradient>
<linearGradient id="n59" gradientUnits="userSpaceOnUse" x1="2437.4" y1="649.8" x2="2481.3" y2="565.5"><stop offset="0" stop-color="#fff"/><stop offset=".475" stop-color="#ffecc8"/><stop offset="1" stop-color="#ffda96"/></linearGradient>
<linearGradient id="n60" gradientUnits="userSpaceOnUse" x1="2437.4" y1="649.8" x2="2491.1" y2="565.5"><stop offset="0" stop-color="#fff"/><stop offset=".475" stop-color="#ffe7c5"/><stop offset="1" stop-color="#ffd291"/></linearGradient>
<linearGradient id="n61" gradientUnits="userSpaceOnUse" x1="2437.4" y1="649.8" x2="2498.9" y2="569.6"><stop offset="0" stop-color="#fff"/><stop offset=".475" stop-color="#ffe3c3"/><stop offset="1" stop-color="#ffcb90"/></linearGradient>
<linearGradient id="n62" gradientUnits="userSpaceOnUse" x1="2437.4" y1="649.8" x2="2498.9" y2="582.7"><stop offset="0" stop-color="#fff"/><stop offset=".475" stop-color="#ffe2c9"/><stop offset="1" stop-color="#ffc999"/></linearGradient>
<linearGradient id="n63" gradientUnits="userSpaceOnUse" x1="2437.4" y1="649.8" x2="2498.9" y2="593.4"><stop offset="0" stop-color="#fff"/><stop offset=".475" stop-color="#ffe2cd"/><stop offset="1" stop-color="#ffc8a1"/></linearGradient>
<linearGradient id="n64" gradientUnits="userSpaceOnUse" x1="2437.4" y1="649.8" x2="2498.9" y2="602.6"><stop offset="0" stop-color="#fff"/><stop offset=".475" stop-color="#ffe1d1"/><stop offset="1" stop-color="#ffc7a8"/></linearGradient>
<linearGradient id="n65" gradientUnits="userSpaceOnUse" x1="2437.4" y1="649.8" x2="2498.9" y2="610.6"><stop offset="0" stop-color="#fff"/><stop offset=".475" stop-color="#ffe1d4"/><stop offset="1" stop-color="#ffc6ae"/></linearGradient>
<linearGradient id="n66" gradientUnits="userSpaceOnUse" x1="2437.4" y1="649.8" x2="2498.9" y2="617.8"><stop offset="0" stop-color="#fff"/><stop offset=".475" stop-color="#ffe0d7"/><stop offset="1" stop-color="#ffc5b3"/></linearGradient>
<linearGradient id="n67" gradientUnits="userSpaceOnUse" x1="2437.4" y1="649.8" x2="2498.9" y2="624.3"><stop offset="0" stop-color="#fff"/><stop offset=".475" stop-color="#ffe0d9"/><stop offset="1" stop-color="#ffc5b8"/></linearGradient>
<linearGradient id="n68" gradientUnits="userSpaceOnUse" x1="2437.4" y1="649.8" x2="2498.9" y2="630.4"><stop offset="0" stop-color="#fff"/><stop offset=".475" stop-color="#ffe0dc"/><stop offset="1" stop-color="#ffc4bd"/></linearGradient>
<linearGradient id="n69" gradientUnits="userSpaceOnUse" x1="2437.4" y1="649.8" x2="2498.9" y2="636.2"><stop offset="0" stop-color="#fff"/><stop offset=".475" stop-color="#ffe0de"/><stop offset="1" stop-color="#ffc3c1"/></linearGradient>
<linearGradient id="n70" gradientUnits="userSpaceOnUse" x1="2437.4" y1="649.8" x2="2498.9" y2="641.7"><stop offset="0" stop-color="#fff"/><stop offset=".475" stop-color="#ffdfe0"/><stop offset="1" stop-color="#ffc3c5"/></linearGradient>
<linearGradient id="n71" gradientUnits="userSpaceOnUse" x1="2437.4" y1="649.8" x2="2498.9" y2="647.1"><stop offset="0" stop-color="#fff"/><stop offset=".475" stop-color="#ffdfe3"/><stop offset="1" stop-color="#ffc2c9"/></linearGradient>
<filter id="nb" filterUnits="userSpaceOnUse" x="2315.3" y="553.5" width="196.7" height="195.3"><feGaussianBlur stdDeviation="1.6"/></filter>
<linearGradient id="gPlay" x1="0" y1="0" x2="0" y2="1"><stop offset="0" stop-color="#9c9c9c"/><stop offset="1" stop-color="#565656"/></linearGradient>
<linearGradient id="gCirc" x1="0" y1="0" x2="0" y2="1"><stop offset="0" stop-color="#5a5a5a"/><stop offset="1" stop-color="#989898"/></linearGradient>
<linearGradient id="gCircD" x1="0" y1="0" x2="0" y2="1"><stop offset="0" stop-color="#3a3a3a"/><stop offset="1" stop-color="#525252"/></linearGradient>
<linearGradient id="gTab" x1="0" y1="0" x2="0" y2="1"><stop offset="0" stop-color="#4c4c4c"/><stop offset="1" stop-color="#393939"/></linearGradient>
<linearGradient id="gDD" x1="0" y1="0" x2="0" y2="1"><stop offset="0" stop-color="#565656"/><stop offset="1" stop-color="#727272"/></linearGradient>
<linearGradient id="gDDc" x1="0" y1="0" x2="0" y2="1"><stop offset="0" stop-color="#4a4a4a"/><stop offset="1" stop-color="#808080"/></linearGradient>
<linearGradient id="gGreen" x1="0" y1="0" x2="1" y2="0"><stop offset="0" stop-color="#00f000"/><stop offset="1" stop-color="#14d014"/></linearGradient>
<linearGradient id="gYellow" x1="0" y1="0" x2="1" y2="0"><stop offset="0" stop-color="#ffff00"/><stop offset="1" stop-color="#d8d800"/></linearGradient>
<linearGradient id="gMon" x1="0" y1="0" x2="0" y2="1"><stop offset="0" stop-color="#979797"/><stop offset="1" stop-color="#646464"/></linearGradient>
<linearGradient id="gBtn" x1="0" y1="0" x2="0" y2="1"><stop offset="0" stop-color="#717171"/><stop offset="1" stop-color="#4f4f4f"/></linearGradient>
<linearGradient id="gBtn2" x1="0" y1="0" x2="0" y2="1"><stop offset="0" stop-color="#6a6a6a"/><stop offset="1" stop-color="#4e4e4e"/></linearGradient>
<filter id="bl" x="-5%" y="-20%" width="110%" height="140%"><feGaussianBlur stdDeviation="1.2"/></filter>
<linearGradient id="gTile" x1="0" y1="0" x2="0" y2="1"><stop offset="0" stop-color="#b0b0b0"/><stop offset="0.06" stop-color="#a6a6a6"/><stop offset="1" stop-color="#6b6b6b"/></linearGradient>
<linearGradient id="gTileS" x1="0" y1="0" x2="0" y2="1"><stop offset="0" stop-color="#2a2a2a"/><stop offset="1" stop-color="#3c3c3c"/></linearGradient>
<linearGradient id="gInset" x1="0" y1="0" x2="0" y2="1"><stop offset="0" stop-color="#5c5c5c"/><stop offset="0.5" stop-color="#8a8a8a"/><stop offset="1" stop-color="#c4c4c4"/></linearGradient>
<clipPath id="cstrip"><rect x="0" y="1319" width="1919.6" height="121"/></clipPath>
<linearGradient id="gP1" x1="0" y1="0" x2="0" y2="1"><stop offset="0" stop-color="#adadad"/><stop offset="1" stop-color="#8a8a8a"/></linearGradient>
<linearGradient id="gP2" x1="0" y1="0" x2="0" y2="1"><stop offset="0" stop-color="#9c9c9c"/><stop offset="1" stop-color="#6c6c6c"/></linearGradient>
<linearGradient id="gB1" x1="0" y1="0" x2="0" y2="1"><stop offset="0" stop-color="#b4b4b4"/><stop offset="1" stop-color="#606060"/></linearGradient>
<linearGradient id="gB2" x1="0" y1="0" x2="0" y2="1"><stop offset="0" stop-color="#bcbcbc"/><stop offset="1" stop-color="#787878"/></linearGradient>
<linearGradient id="gIc" x1="0" y1="0" x2="0" y2="1"><stop offset="0" stop-color="#707070"/><stop offset="1" stop-color="#b8b8b8"/></linearGradient>
<filter id="sf"><feGaussianBlur stdDeviation="0.9"/></filter>
<linearGradient id="gIc2" x1="0" y1="0" x2="0" y2="1"><stop offset="0" stop-color="#808080"/><stop offset="1" stop-color="#c2c2c2"/></linearGradient>
<linearGradient id="gStop" x1="0" y1="0" x2="0" y2="1"><stop offset="0" stop-color="#bcbcbc"/><stop offset="0.5" stop-color="#b0b0b0"/><stop offset="0.5" stop-color="#8c8c8c"/><stop offset="1" stop-color="#949494"/></linearGradient>
<linearGradient id="g123" x1="0" y1="0" x2="0" y2="1"><stop offset="0" stop-color="#6a6a6a"/><stop offset="1" stop-color="#585858"/></linearGradient>
<linearGradient id="gEdge" x1="0" y1="0" x2="1" y2="0"><stop offset="0" stop-color="#000" stop-opacity="0"/><stop offset="1" stop-color="#000" stop-opacity=".62"/></linearGradient></defs>
<rect x="0" y="0" width="2560" height="1440" fill="#333" />
<rect x="0" y="0" width="2560" height="64.5" fill="#222" />
<rect x="779.2" y="227.2" width="1001.2" height="985.8" fill="#262626" />
<g id="gamut"><g clip-path="url(#cl)"><g filter="url(#gb)"><polygon points="1096,475.8 1856,475.8 1855.7,495.1" fill="url(#o0)"/><polygon points="1096,475.8 1855.9,485.4 1855.4,504.8" fill="url(#o1)"/><polygon points="1096,475.8 1855.7,495.1 1855,514.6" fill="url(#o2)"/><polygon points="1096,475.8 1855.4,504.8 1854.4,524.5" fill="url(#o3)"/><polygon points="1096,475.8 1855,514.6 1853.7,534.5" fill="url(#o4)"/><polygon points="1096,475.8 1854.4,524.5 1852.9,544.6" fill="url(#o5)"/><polygon points="1096,475.8 1853.7,534.5 1851.9,554.7" fill="url(#o6)"/><polygon points="1096,475.8 1852.9,544.6 1850.7,564.9" fill="url(#o7)"/><polygon points="1096,475.8 1851.9,554.7 1849.5,575.2" fill="url(#o8)"/><polygon points="1096,475.8 1850.7,564.9 1848,585.5" fill="url(#o9)"/><polygon points="1096,475.8 1849.5,575.2 1846.4,595.9" fill="url(#o10)"/><polygon points="1096,475.8 1848,585.5 1844.7,606.4" fill="url(#o11)"/><polygon points="1096,475.8 1846.4,595.9 1842.8,616.9" fill="url(#o12)"/><polygon points="1096,475.8 1844.7,606.4 1840.7,627.4" fill="url(#o13)"/><polygon points="1096,475.8 1842.8,616.9 1838.5,638" fill="url(#o14)"/><polygon points="1096,475.8 1840.7,627.4 1836.1,648.6" fill="url(#o15)"/><polygon points="1096,475.8 1838.5,638 1833.5,659.3" fill="url(#o16)"/><polygon points="1096,475.8 1836.1,648.6 1830.8,670" fill="url(#o17)"/><polygon points="1096,475.8 1833.5,659.3 1827.8,680.7" fill="url(#o18)"/><polygon points="1096,475.8 1830.8,670 1824.8,691.5" fill="url(#o19)"/><polygon points="1096,475.8 1827.8,680.7 1821.5,702.2" fill="url(#o20)"/><polygon points="1096,475.8 1824.8,691.5 1818,713" fill="url(#o21)"/><polygon points="1096,475.8 1821.5,702.2 1814.4,723.7" fill="url(#o22)"/><polygon points="1096,475.8 1818,713 1810.6,734.5" fill="url(#o23)"/><polygon points="1096,475.8 1814.4,723.7 1806.6,745.2" fill="url(#o24)"/><polygon points="1096,475.8 1810.6,734.5 1802.5,756" fill="url(#o25)"/><polygon points="1096,475.8 1806.6,745.2 1798.1,766.7" fill="url(#o26)"/><polygon points="1096,475.8 1802.5,756 1793.6,777.4" fill="url(#o27)"/><polygon points="1096,475.8 1798.1,766.7 1788.9,788.1" fill="url(#o28)"/><polygon points="1096,475.8 1793.6,777.4 1784,798.7" fill="url(#o29)"/><polygon points="1096,475.8 1788.9,788.1 1778.9,809.3" fill="url(#o30)"/><polygon points="1096,475.8 1784,798.7 1773.6,819.9" fill="url(#o31)"/><polygon points="1096,475.8 1778.9,809.3 1768.2,830.4" fill="url(#o32)"/><polygon points="1096,475.8 1773.6,819.9 1762.6,840.8" fill="url(#o33)"/><polygon points="1096,475.8 1768.2,830.4 1756.8,851.2" fill="url(#o34)"/><polygon points="1096,475.8 1762.6,840.8 1750.9,861.5" fill="url(#o35)"/><polygon points="1096,475.8 1756.8,851.2 1744.7,871.8" fill="url(#o36)"/><polygon points="1096,475.8 1750.9,861.5 1738.4,881.9" fill="url(#o37)"/><polygon points="1096,475.8 1744.7,871.8 1731.9,892" fill="url(#o38)"/><polygon points="1096,475.8 1738.4,881.9 1725.3,902" fill="url(#o39)"/><polygon points="1096,475.8 1731.9,892 1718.5,911.8" fill="url(#o40)"/><polygon points="1096,475.8 1725.3,902 1711.5,921.6" fill="url(#o41)"/><polygon points="1096,475.8 1718.5,911.8 1704.4,931.3" fill="url(#o42)"/><polygon points="1096,475.8 1711.5,921.6 1697.1,940.9" fill="url(#o43)"/><polygon points="1096,475.8 1704.4,931.3 1689.7,950.3" fill="url(#o44)"/><polygon points="1096,475.8 1697.1,940.9 1682.1,959.6" fill="url(#o45)"/><polygon points="1096,475.8 1689.7,950.3 1674.4,968.8" fill="url(#o46)"/><polygon points="1096,475.8 1682.1,959.6 1666.5,977.9" fill="url(#o47)"/><polygon points="1096,475.8 1674.4,968.8 1658.5,986.8" fill="url(#o48)"/><polygon points="1096,475.8 1666.5,977.9 1650.4,995.6" fill="url(#o49)"/><polygon points="1096,475.8 1658.5,986.8 1642.2,1004.3" fill="url(#o50)"/><polygon points="1096,475.8 1650.4,995.6 1633.8,1012.8" fill="url(#o51)"/><polygon points="1096,475.8 1642.2,1004.3 1625.3,1021.2" fill="url(#o52)"/><polygon points="1096,475.8 1633.8,1012.8 1616.7,1029.4" fill="url(#o53)"/><polygon points="1096,475.8 1625.3,1021.2 1608,1037.4" fill="url(#o54)"/><polygon points="1096,475.8 1616.7,1029.4 1599.2,1045.3" fill="url(#o55)"/><polygon points="1096,475.8 1608,1037.4 1590.3,1053.1" fill="url(#o56)"/><polygon points="1096,475.8 1599.2,1045.3 1581.4,1060.6" fill="url(#o57)"/><polygon points="1096,475.8 1590.3,1053.1 1572.3,1068.1" fill="url(#o58)"/><polygon points="1096,475.8 1581.4,1060.6 1563.2,1075.3" fill="url(#o59)"/><polygon points="1096,475.8 1572.3,1068.1 1553.9,1082.4" fill="url(#o60)"/><polygon points="1096,475.8 1563.2,1075.3 1544.6,1089.3" fill="url(#o61)"/><polygon points="1096,475.8 1553.9,1082.4 1535.3,1096" fill="url(#o62)"/><polygon points="1096,475.8 1544.6,1089.3 1525.9,1102.6" fill="url(#o63)"/><polygon points="1096,475.8 1535.3,1096 1516.4,1108.9" fill="url(#o64)"/><polygon points="1096,475.8 1525.9,1102.6 1506.9,1115.2" fill="url(#o65)"/><polygon points="1096,475.8 1516.4,1108.9 1497.4,1121.2" fill="url(#o66)"/><polygon points="1096,475.8 1506.9,1115.2 1487.8,1127.1" fill="url(#o67)"/><polygon points="1096,475.8 1497.4,1121.2 1478.2,1132.7" fill="url(#o68)"/><polygon points="1096,475.8 1487.8,1127.1 1468.6,1138.3" fill="url(#o69)"/><polygon points="1096,475.8 1478.2,1132.7 1458.9,1143.6" fill="url(#o70)"/><polygon points="1096,475.8 1468.6,1138.3 1449.2,1148.8" fill="url(#o71)"/><polygon points="1096,475.8 1458.9,1143.6 1439.6,1153.7" fill="url(#o72)"/><polygon points="1096,475.8 1449.2,1148.8 1429.9,1158.6" fill="url(#o73)"/><polygon points="1096,475.8 1439.6,1153.7 1420.2,1163.2" fill="url(#o74)"/><polygon points="1096,475.8 1429.9,1158.6 1410.5,1167.7" fill="url(#o75)"/><polygon points="1096,475.8 1420.2,1163.2 1400.9,1172" fill="url(#o76)"/><polygon points="1096,475.8 1410.5,1167.7 1391.2,1176.2" fill="url(#o77)"/><polygon points="1096,475.8 1400.9,1172 1381.6,1180.1" fill="url(#o78)"/><polygon points="1096,475.8 1391.2,1176.2 1372,1184" fill="url(#o79)"/><polygon points="1096,475.8 1381.6,1180.1 1362.4,1187.6" fill="url(#o80)"/><polygon points="1096,475.8 1372,1184 1352.8,1191.1" fill="url(#o81)"/><polygon points="1096,475.8 1362.4,1187.6 1343.3,1194.5" fill="url(#o82)"/><polygon points="1096,475.8 1352.8,1191.1 1333.9,1197.7" fill="url(#o83)"/><polygon points="1096,475.8 1343.3,1194.5 1324.4,1200.7" fill="url(#o84)"/><polygon points="1096,475.8 1333.9,1197.7 1315,1203.6" fill="url(#o85)"/><polygon points="1096,475.8 1324.4,1200.7 1305.7,1206.3" fill="url(#o86)"/><polygon points="1096,475.8 1315,1203.6 1296.4,1208.9" fill="url(#o87)"/><polygon points="1096,475.8 1305.7,1206.3 1287.2,1211.4" fill="url(#o88)"/><polygon points="1096,475.8 1296.4,1208.9 1278.1,1213.7" fill="url(#o89)"/><polygon points="1096,475.8 1287.2,1211.4 1269,1215.9" fill="url(#o90)"/><polygon points="1096,475.8 1278.1,1213.7 1259.9,1217.9" fill="url(#o91)"/><polygon points="1096,475.8 1269,1215.9 1250.8,1219.9" fill="url(#o92)"/><polygon points="1096,475.8 1259.9,1217.9 1241.7,1221.7" fill="url(#o93)"/><polygon points="1096,475.8 1250.8,1219.9 1232.6,1223.5" fill="url(#o94)"/><polygon points="1096,475.8 1241.7,1221.7 1223.5,1225.1" fill="url(#o95)"/><polygon points="1096,475.8 1232.6,1223.5 1214.3,1226.6" fill="url(#o96)"/><polygon points="1096,475.8 1223.5,1225.1 1205.1,1228" fill="url(#o97)"/><polygon points="1096,475.8 1214.3,1226.6 1195.9,1229.2" fill="url(#o98)"/><polygon points="1096,475.8 1205.1,1228 1186.7,1230.4" fill="url(#o99)"/><polygon points="1096,475.8 1195.9,1229.2 1177.5,1231.5" fill="url(#o100)"/><polygon points="1096,475.8 1186.7,1230.4 1168.2,1232.4" fill="url(#o101)"/><polygon points="1096,475.8 1177.5,1231.5 1159,1233.2" fill="url(#o102)"/><polygon points="1096,475.8 1168.2,1232.4 1149.7,1233.9" fill="url(#o103)"/><polygon points="1096,475.8 1159,1233.2 1140.5,1234.5" fill="url(#o104)"/><polygon points="1096,475.8 1149.7,1233.9 1131.2,1235" fill="url(#o105)"/><polygon points="1096,475.8 1140.5,1234.5 1121.9,1235.4" fill="url(#o106)"/><polygon points="1096,475.8 1131.2,1235 1112.4,1235.7" fill="url(#o107)"/><polygon points="1096,475.8 1121.9,1235.4 1102.9,1235.8" fill="url(#o108)"/><polygon points="1096,475.8 1112.4,1235.7 1093.1,1235.8" fill="url(#o109)"/><polygon points="1096,475.8 1102.9,1235.8 1083.3,1235.7" fill="url(#o110)"/><polygon points="1096,475.8 1093.1,1235.8 1073.3,1235.5" fill="url(#o111)"/><polygon points="1096,475.8 1083.3,1235.7 1063.1,1235.1" fill="url(#o112)"/><polygon points="1096,475.8 1073.3,1235.5 1052.8,1234.6" fill="url(#o113)"/><polygon points="1096,475.8 1063.1,1235.1 1042.3,1233.9" fill="url(#o114)"/><polygon points="1096,475.8 1052.8,1234.6 1031.7,1233.1" fill="url(#o115)"/><polygon points="1096,475.8 1042.3,1233.9 1020.9,1232.1" fill="url(#o116)"/><polygon points="1096,475.8 1031.7,1233.1 1010,1231" fill="url(#o117)"/><polygon points="1096,475.8 1020.9,1232.1 998.8,1229.6" fill="url(#o118)"/><polygon points="1096,475.8 1010,1231 987.5,1228.1" fill="url(#o119)"/><polygon points="1096,475.8 998.8,1229.6 976.1,1226.3" fill="url(#o120)"/><polygon points="1096,475.8 987.5,1228.1 964.4,1224.4" fill="url(#o121)"/><polygon points="1096,475.8 976.1,1226.3 952.5,1222.2" fill="url(#o122)"/><polygon points="1096,475.8 964.4,1224.4 940.5,1219.8" fill="url(#o123)"/><polygon points="1096,475.8 952.5,1222.2 928.3,1217.1" fill="url(#o124)"/><polygon points="1096,475.8 940.5,1219.8 915.9,1214.2" fill="url(#o125)"/><polygon points="1096,475.8 928.3,1217.1 903.4,1211" fill="url(#o126)"/><polygon points="1096,475.8 915.9,1214.2 890.6,1207.6" fill="url(#o127)"/><polygon points="1096,475.8 903.4,1211 877.7,1203.8" fill="url(#o128)"/><polygon points="1096,475.8 890.6,1207.6 864.7,1199.8" fill="url(#o129)"/><polygon points="1096,475.8 877.7,1203.8 851.5,1195.4" fill="url(#o130)"/><polygon points="1096,475.8 864.7,1199.8 838.1,1190.7" fill="url(#o131)"/><polygon points="1096,475.8 851.5,1195.4 824.5,1185.7" fill="url(#o132)"/><polygon points="1096,475.8 838.1,1190.7 810.9,1180.3" fill="url(#o133)"/><polygon points="1096,475.8 824.5,1185.7 797.1,1174.6" fill="url(#o134)"/><polygon points="1096,475.8 810.9,1180.3 783.2,1168.5" fill="url(#o135)"/><polygon points="1096,475.8 797.1,1174.6 769.1,1162" fill="url(#o136)"/><polygon points="1096,475.8 783.2,1168.5 755,1155.1" fill="url(#o137)"/><polygon points="1096,475.8 769.1,1162 740.8,1147.7" fill="url(#o138)"/><polygon points="1096,475.8 755,1155.1 726.5,1140" fill="url(#o139)"/><polygon points="1096,475.8 740.8,1147.7 712.2,1131.8" fill="url(#o140)"/><polygon points="1096,475.8 726.5,1140 697.8,1123.2" fill="url(#o141)"/><polygon points="1096,475.8 712.2,1131.8 683.4,1114.1" fill="url(#o142)"/><polygon points="1096,475.8 697.8,1123.2 669,1104.6" fill="url(#o143)"/><polygon points="1096,475.8 683.4,1114.1 654.6,1094.6" fill="url(#o144)"/><polygon points="1096,475.8 669,1104.6 640.3,1084.1" fill="url(#o145)"/><polygon points="1096,475.8 654.6,1094.6 626,1073.1" fill="url(#o146)"/><polygon points="1096,475.8 640.3,1084.1 611.8,1061.7" fill="url(#o147)"/><polygon points="1096,475.8 626,1073.1 597.7,1049.7" fill="url(#o148)"/><polygon points="1096,475.8 611.8,1061.7 583.8,1037.3" fill="url(#o149)"/><polygon points="1096,475.8 597.7,1049.7 570,1024.4" fill="url(#o150)"/><polygon points="1096,475.8 583.8,1037.3 556.4,1011" fill="url(#o151)"/><polygon points="1096,475.8 570,1024.4 542.9,997.1" fill="url(#o152)"/><polygon points="1096,475.8 556.4,1011 529.7,982.8" fill="url(#o153)"/><polygon points="1096,475.8 542.9,997.1 516.8,967.9" fill="url(#o154)"/><polygon points="1096,475.8 529.7,982.8 504.1,952.6" fill="url(#o155)"/><polygon points="1096,475.8 516.8,967.9 491.8,936.8" fill="url(#o156)"/><polygon points="1096,475.8 504.1,952.6 479.7,920.6" fill="url(#o157)"/><polygon points="1096,475.8 491.8,936.8 468,903.9" fill="url(#o158)"/><polygon points="1096,475.8 479.7,920.6 456.7,886.9" fill="url(#o159)"/><polygon points="1096,475.8 468,903.9 445.8,869.3" fill="url(#o160)"/><polygon points="1096,475.8 456.7,886.9 435.3,851.4" fill="url(#o161)"/><polygon points="1096,475.8 445.8,869.3 425.2,833.2" fill="url(#o162)"/><polygon points="1096,475.8 435.3,851.4 415.6,814.5" fill="url(#o163)"/><polygon points="1096,475.8 425.2,833.2 406.5,795.6" fill="url(#o164)"/><polygon points="1096,475.8 415.6,814.5 397.9,776.3" fill="url(#o165)"/><polygon points="1096,475.8 406.5,795.6 389.8,756.7" fill="url(#o166)"/><polygon points="1096,475.8 397.9,776.3 382.2,736.9" fill="url(#o167)"/><polygon points="1096,475.8 389.8,756.7 375.2,716.9" fill="url(#o168)"/><polygon points="1096,475.8 382.2,736.9 368.8,696.6" fill="url(#o169)"/><polygon points="1096,475.8 375.2,716.9 362.9,676.2" fill="url(#o170)"/><polygon points="1096,475.8 368.8,696.6 357.5,655.6" fill="url(#o171)"/><polygon points="1096,475.8 362.9,676.2 352.8,634.9" fill="url(#o172)"/><polygon points="1096,475.8 357.5,655.6 348.7,614.1" fill="url(#o173)"/><polygon points="1096,475.8 352.8,634.9 345.1,593.3" fill="url(#o174)"/><polygon points="1096,475.8 348.7,614.1 342.1,572.5" fill="url(#o175)"/><polygon points="1096,475.8 345.1,593.3 339.8,551.6" fill="url(#o176)"/><polygon points="1096,475.8 342.1,572.5 338,530.8" fill="url(#o177)"/><polygon points="1096,475.8 339.8,551.6 336.8,510.1" fill="url(#o178)"/><polygon points="1096,475.8 338,530.8 336.1,489.4" fill="url(#o179)"/><polygon points="1096,475.8 336.8,510.1 336,468.8" fill="url(#o180)"/><polygon points="1096,475.8 336.1,489.4 336.5,448.4" fill="url(#o181)"/><polygon points="1096,475.8 336,468.8 337.5,428.2" fill="url(#o182)"/><polygon points="1096,475.8 336.5,448.4 339,408.1" fill="url(#o183)"/><polygon points="1096,475.8 337.5,428.2 341,388.3" fill="url(#o184)"/><polygon points="1096,475.8 339,408.1 343.6,368.7" fill="url(#o185)"/><polygon points="1096,475.8 341,388.3 346.6,349.3" fill="url(#o186)"/><polygon points="1096,475.8 343.6,368.7 350.1,330.1" fill="url(#o187)"/><polygon points="1096,475.8 346.6,349.3 354,311.3" fill="url(#o188)"/><polygon points="1096,475.8 350.1,330.1 358.4,292.7" fill="url(#o189)"/><polygon points="1096,475.8 354,311.3 363.2,274.4" fill="url(#o190)"/><polygon points="1096,475.8 358.4,292.7 368.3,256.4" fill="url(#o191)"/><polygon points="1096,475.8 363.2,274.4 373.9,238.7" fill="url(#o192)"/><polygon points="1096,475.8 368.3,256.4 379.9,221.3" fill="url(#o193)"/><polygon points="1096,475.8 373.9,238.7 386.2,204.3" fill="url(#o194)"/><polygon points="1096,475.8 379.9,221.3 392.8,187.5" fill="url(#o195)"/><polygon points="1096,475.8 386.2,204.3 399.8,171" fill="url(#o196)"/><polygon points="1096,475.8 392.8,187.5 407.1,154.7" fill="url(#o197)"/><polygon points="1096,475.8 399.8,171 414.8,138.8" fill="url(#o198)"/><polygon points="1096,475.8 407.1,154.7 422.8,123" fill="url(#o199)"/><polygon points="1096,475.8 414.8,138.8 431.2,107.5" fill="url(#o200)"/><polygon points="1096,475.8 422.8,123 440,92.1" fill="url(#o201)"/><polygon points="1096,475.8 431.2,107.5 449.1,76.9" fill="url(#o202)"/><polygon points="1096,475.8 440,92.1 458.7,61.7" fill="url(#o203)"/><polygon points="1096,475.8 449.1,76.9 468.8,46.5" fill="url(#o204)"/><polygon points="1096,475.8 458.7,61.7 479.6,31.3" fill="url(#o205)"/><polygon points="1096,475.8 468.8,46.5 491,15.9" fill="url(#o206)"/><polygon points="1096,475.8 479.6,31.3 503.1,0.3" fill="url(#o207)"/><polygon points="1096,475.8 491,15.9 516.1,-15.4" fill="url(#o208)"/><polygon points="1096,475.8 503.1,0.3 530,-31.4" fill="url(#o209)"/><polygon points="1096,475.8 516.1,-15.4 544.8,-47.4" fill="url(#o210)"/><polygon points="1096,475.8 530,-31.4 560.6,-63.6" fill="url(#o211)"/><polygon points="1096,475.8 544.8,-47.4 577.5,-79.8" fill="url(#o212)"/><polygon points="1096,475.8 560.6,-63.6 595.5,-96.1" fill="url(#o213)"/><polygon points="1096,475.8 577.5,-79.8 614.8,-112.4" fill="url(#o214)"/><polygon points="1096,475.8 595.5,-96.1 635.2,-128.6" fill="url(#o215)"/><polygon points="1096,475.8 614.8,-112.4 657,-144.6" fill="url(#o216)"/><polygon points="1096,475.8 635.2,-128.6 680.1,-160.3" fill="url(#o217)"/><polygon points="1096,475.8 657,-144.6 704.6,-175.6" fill="url(#o218)"/><polygon points="1096,475.8 680.1,-160.3 730.4,-190.4" fill="url(#o219)"/><polygon points="1096,475.8 704.6,-175.6 757.6,-204.7" fill="url(#o220)"/><polygon points="1096,475.8 730.4,-190.4 786.2,-218.1" fill="url(#o221)"/><polygon points="1096,475.8 757.6,-204.7 816.1,-230.7" fill="url(#o222)"/><polygon points="1096,475.8 786.2,-218.1 847.3,-242.3" fill="url(#o223)"/><polygon points="1096,475.8 816.1,-230.7 879.7,-252.7" fill="url(#o224)"/><polygon points="1096,475.8 847.3,-242.3 913.4,-261.9" fill="url(#o225)"/><polygon points="1096,475.8 879.7,-252.7 948,-269.6" fill="url(#o226)"/><polygon points="1096,475.8 913.4,-261.9 983.7,-275.8" fill="url(#o227)"/><polygon points="1096,475.8 948,-269.6 1020.1,-280.4" fill="url(#o228)"/><polygon points="1096,475.8 983.7,-275.8 1057.3,-283.2" fill="url(#o229)"/><polygon points="1096,475.8 1020.1,-280.4 1094.9,-284.2" fill="url(#o230)"/><polygon points="1096,475.8 1057.3,-283.2 1132.8,-283.3" fill="url(#o231)"/><polygon points="1096,475.8 1094.9,-284.2 1170.9,-280.5" fill="url(#o232)"/><polygon points="1096,475.8 1132.8,-283.3 1209,-275.7" fill="url(#o233)"/><polygon points="1096,475.8 1170.9,-280.5 1246.7,-269.1" fill="url(#o234)"/><polygon points="1096,475.8 1209,-275.7 1284.1,-260.5" fill="url(#o235)"/><polygon points="1096,475.8 1246.7,-269.1 1320.8,-250.1" fill="url(#o236)"/><polygon points="1096,475.8 1284.1,-260.5 1356.7,-238" fill="url(#o237)"/><polygon points="1096,475.8 1320.8,-250.1 1391.7,-224.3" fill="url(#o238)"/><polygon points="1096,475.8 1356.7,-238 1425.5,-209" fill="url(#o239)"/><polygon points="1096,475.8 1391.7,-224.3 1458.2,-192.3" fill="url(#o240)"/><polygon points="1096,475.8 1425.5,-209 1489.4,-174.4" fill="url(#o241)"/><polygon points="1096,475.8 1458.2,-192.3 1519.2,-155.4" fill="url(#o242)"/><polygon points="1096,475.8 1489.4,-174.4 1547.6,-135.4" fill="url(#o243)"/><polygon points="1096,475.8 1519.2,-155.4 1574.3,-114.7" fill="url(#o244)"/><polygon points="1096,475.8 1547.6,-135.4 1599.5,-93.4" fill="url(#o245)"/><polygon points="1096,475.8 1574.3,-114.7 1623.1,-71.6" fill="url(#o246)"/><polygon points="1096,475.8 1599.5,-93.4 1645.2,-49.5" fill="url(#o247)"/><polygon points="1096,475.8 1623.1,-71.6 1665.7,-27.2" fill="url(#o248)"/><polygon points="1096,475.8 1645.2,-49.5 1684.6,-4.9" fill="url(#o249)"/><polygon points="1096,475.8 1665.7,-27.2 1702.1,17.4" fill="url(#o250)"/><polygon points="1096,475.8 1684.6,-4.9 1718.2,39.5" fill="url(#o251)"/><polygon points="1096,475.8 1702.1,17.4 1733,61.3" fill="url(#o252)"/><polygon points="1096,475.8 1718.2,39.5 1746.5,82.8" fill="url(#o253)"/><polygon points="1096,475.8 1733,61.3 1758.8,103.9" fill="url(#o254)"/><polygon points="1096,475.8 1746.5,82.8 1769.9,124.5" fill="url(#o255)"/><polygon points="1096,475.8 1758.8,103.9 1780,144.6" fill="url(#o256)"/><polygon points="1096,475.8 1769.9,124.5 1789.1,164.2" fill="url(#o257)"/><polygon points="1096,475.8 1780,144.6 1797.4,183.1" fill="url(#o258)"/><polygon points="1096,475.8 1789.1,164.2 1804.7,201.5" fill="url(#o259)"/><polygon points="1096,475.8 1797.4,183.1 1811.3,219.2" fill="url(#o260)"/><polygon points="1096,475.8 1804.7,201.5 1817.2,236.3" fill="url(#o261)"/><polygon points="1096,475.8 1811.3,219.2 1822.5,252.7" fill="url(#o262)"/><polygon points="1096,475.8 1817.2,236.3 1827.2,268.5" fill="url(#o263)"/><polygon points="1096,475.8 1822.5,252.7 1831.3,283.7" fill="url(#o264)"/><polygon points="1096,475.8 1827.2,268.5 1834.9,298.2" fill="url(#o265)"/><polygon points="1096,475.8 1831.3,283.7 1838.1,312.2" fill="url(#o266)"/><polygon points="1096,475.8 1834.9,298.2 1841,325.5" fill="url(#o267)"/><polygon points="1096,475.8 1838.1,312.2 1843.4,338.2" fill="url(#o268)"/><polygon points="1096,475.8 1841,325.5 1845.6,350.4" fill="url(#o269)"/><polygon points="1096,475.8 1843.4,338.2 1847.4,362" fill="url(#o270)"/><polygon points="1096,475.8 1845.6,350.4 1849,373.1" fill="url(#o271)"/><polygon points="1096,475.8 1847.4,362 1850.4,383.7" fill="url(#o272)"/><polygon points="1096,475.8 1849,373.1 1851.5,393.7" fill="url(#o273)"/><polygon points="1096,475.8 1850.4,383.7 1852.5,403.3" fill="url(#o274)"/><polygon points="1096,475.8 1851.5,393.7 1853.3,412.6" fill="url(#o275)"/><polygon points="1096,475.8 1852.5,403.3 1854.1,421.8" fill="url(#o276)"/><polygon points="1096,475.8 1853.3,412.6 1854.7,431.1" fill="url(#o277)"/><polygon points="1096,475.8 1854.1,421.8 1855.2,440.4" fill="url(#o278)"/><polygon points="1096,475.8 1854.7,431.1 1855.5,449.7" fill="url(#o279)"/><polygon points="1096,475.8 1855.2,440.4 1855.8,459" fill="url(#o280)"/><polygon points="1096,475.8 1855.5,449.7 1855.9,468.4" fill="url(#o281)"/><polygon points="1096,475.8 1855.8,459 1856,475.8" fill="url(#o282)"/><polygon points="1096,475.8 1855.9,468.4 1855.9,485.4" fill="url(#o283)"/></g></g><g clip-path="url(#ct)"><g filter="url(#gb)"><circle cx="1096" cy="475.8" r="14" fill="#fff"/><polygon points="1096,475.8 1856,475.8 1855.1,512" fill="url(#i0)"/><polygon points="1096,475.8 1855.8,493.8 1854,530.5" fill="url(#i1)"/><polygon points="1096,475.8 1855.1,512 1852.4,549.4" fill="url(#i2)"/><polygon points="1096,475.8 1854,530.5 1850.3,568.4" fill="url(#i3)"/><polygon points="1096,475.8 1852.4,549.4 1847.7,587.7" fill="url(#i4)"/><polygon points="1096,475.8 1850.3,568.4 1844.5,607.2" fill="url(#i5)"/><polygon points="1096,475.8 1847.7,587.7 1840.8,626.9" fill="url(#i6)"/><polygon points="1096,475.8 1844.5,607.2 1836.5,646.8" fill="url(#i7)"/><polygon points="1096,475.8 1840.8,626.9 1831.6,666.8" fill="url(#i8)"/><polygon points="1096,475.8 1836.5,646.8 1826.1,686.8" fill="url(#i9)"/><polygon points="1096,475.8 1831.6,666.8 1820,707" fill="url(#i10)"/><polygon points="1096,475.8 1826.1,686.8 1813.2,727.1" fill="url(#i11)"/><polygon points="1096,475.8 1820,707 1805.8,747.3" fill="url(#i12)"/><polygon points="1096,475.8 1813.2,727.1 1797.8,767.4" fill="url(#i13)"/><polygon points="1096,475.8 1805.8,747.3 1789.2,787.5" fill="url(#i14)"/><polygon points="1096,475.8 1797.8,767.4 1779.8,807.4" fill="url(#i15)"/><polygon points="1096,475.8 1789.2,787.5 1769.9,827.2" fill="url(#i16)"/><polygon points="1096,475.8 1779.8,807.4 1759.3,846.8" fill="url(#i17)"/><polygon points="1096,475.8 1769.9,827.2 1748.1,866.1" fill="url(#i18)"/><polygon points="1096,475.8 1759.3,846.8 1736.3,885.2" fill="url(#i19)"/><polygon points="1096,475.8 1748.1,866.1 1723.9,904" fill="url(#i20)"/><polygon points="1096,475.8 1736.3,885.2 1710.9,922.5" fill="url(#i21)"/><polygon points="1096,475.8 1723.9,904 1697.3,940.6" fill="url(#i22)"/><polygon points="1096,475.8 1710.9,922.5 1683.3,958.2" fill="url(#i23)"/><polygon points="1096,475.8 1697.3,940.6 1668.7,975.5" fill="url(#i24)"/><polygon points="1096,475.8 1683.3,958.2 1653.6,992.3" fill="url(#i25)"/><polygon points="1096,475.8 1668.7,975.5 1638,1008.5" fill="url(#i26)"/><polygon points="1096,475.8 1653.6,992.3 1622.1,1024.3" fill="url(#i27)"/><polygon points="1096,475.8 1638,1008.5 1605.7,1039.5" fill="url(#i28)"/><polygon points="1096,475.8 1622.1,1024.3 1589,1054.2" fill="url(#i29)"/><polygon points="1096,475.8 1605.7,1039.5 1572,1068.3" fill="url(#i30)"/><polygon points="1096,475.8 1589,1054.2 1554.7,1081.8" fill="url(#i31)"/><polygon points="1096,475.8 1572,1068.3 1537.1,1094.7" fill="url(#i32)"/><polygon points="1096,475.8 1554.7,1081.8 1519.3,1107" fill="url(#i33)"/><polygon points="1096,475.8 1537.1,1094.7 1501.4,1118.7" fill="url(#i34)"/><polygon points="1096,475.8 1519.3,1107 1483.3,1129.7" fill="url(#i35)"/><polygon points="1096,475.8 1501.4,1118.7 1465.1,1140.2" fill="url(#i36)"/><polygon points="1096,475.8 1483.3,1129.7 1446.8,1150" fill="url(#i37)"/><polygon points="1096,475.8 1465.1,1140.2 1428.5,1159.2" fill="url(#i38)"/><polygon points="1096,475.8 1446.8,1150 1410.2,1167.8" fill="url(#i39)"/><polygon points="1096,475.8 1428.5,1159.2 1392,1175.8" fill="url(#i40)"/><polygon points="1096,475.8 1410.2,1167.8 1373.8,1183.2" fill="url(#i41)"/><polygon points="1096,475.8 1392,1175.8 1355.7,1190.1" fill="url(#i42)"/><polygon points="1096,475.8 1373.8,1183.2 1337.7,1196.4" fill="url(#i43)"/><polygon points="1096,475.8 1355.7,1190.1 1319.8,1202.1" fill="url(#i44)"/><polygon points="1096,475.8 1337.7,1196.4 1302.2,1207.3" fill="url(#i45)"/><polygon points="1096,475.8 1319.8,1202.1 1284.7,1212" fill="url(#i46)"/><polygon points="1096,475.8 1302.2,1207.3 1267.4,1216.3" fill="url(#i47)"/><polygon points="1096,475.8 1284.7,1212 1250.3,1220" fill="url(#i48)"/><polygon points="1096,475.8 1267.4,1216.3 1233.6,1223.3" fill="url(#i49)"/><polygon points="1096,475.8 1250.3,1220 1217,1226.1" fill="url(#i50)"/><polygon points="1096,475.8 1233.6,1223.3 1200.8,1228.6" fill="url(#i51)"/><polygon points="1096,475.8 1217,1226.1 1184.8,1230.6" fill="url(#i52)"/><polygon points="1096,475.8 1200.8,1228.6 1169.1,1232.3" fill="url(#i53)"/><polygon points="1096,475.8 1184.8,1230.6 1153.8,1233.6" fill="url(#i54)"/><polygon points="1096,475.8 1169.1,1232.3 1138.7,1234.6" fill="url(#i55)"/><polygon points="1096,475.8 1153.8,1233.6 1124,1235.3" fill="url(#i56)"/><polygon points="1096,475.8 1138.7,1234.6 1109.6,1235.7" fill="url(#i57)"/><polygon points="1096,475.8 1124,1235.3 1095.5,1235.8" fill="url(#i58)"/><polygon points="1096,475.8 1109.6,1235.7 1081.7,1235.7" fill="url(#i59)"/><polygon points="1096,475.8 1095.5,1235.8 1068.3,1235.3" fill="url(#i60)"/><polygon points="1096,475.8 1081.7,1235.7 1055.1,1234.7" fill="url(#i61)"/><polygon points="1096,475.8 1068.3,1235.3 1041.8,1233.9" fill="url(#i62)"/><polygon points="1096,475.8 1055.1,1234.7 1028.6,1232.8" fill="url(#i63)"/><polygon points="1096,475.8 1041.8,1233.9 1015.3,1231.5" fill="url(#i64)"/><polygon points="1096,475.8 1028.6,1232.8 1001,1229.9" fill="url(#i65)"/><polygon points="1096,475.8 1015.3,1231.5 985.6,1227.8" fill="url(#i66)"/><polygon points="1096,475.8 1001,1229.9 968.9,1225.1" fill="url(#i67)"/><polygon points="1096,475.8 985.6,1227.8 951.1,1221.9" fill="url(#i68)"/><polygon points="1096,475.8 968.9,1225.1 931.9,1217.9" fill="url(#i69)"/><polygon points="1096,475.8 951.1,1221.9 911.3,1213.1" fill="url(#i70)"/><polygon points="1096,475.8 931.9,1217.9 889.4,1207.2" fill="url(#i71)"/><polygon points="1096,475.8 911.3,1213.1 865.9,1200.2" fill="url(#i72)"/><polygon points="1096,475.8 889.4,1207.2 841,1191.8" fill="url(#i73)"/><polygon points="1096,475.8 865.9,1200.2 814.5,1181.8" fill="url(#i74)"/><polygon points="1096,475.8 841,1191.8 786.6,1170" fill="url(#i75)"/><polygon points="1096,475.8 814.5,1181.8 757.2,1156.1" fill="url(#i76)"/><polygon points="1096,475.8 786.6,1170 726.4,1139.9" fill="url(#i77)"/><polygon points="1096,475.8 757.2,1156.1 694.5,1121.1" fill="url(#i78)"/><polygon points="1096,475.8 726.4,1139.9 661.5,1099.4" fill="url(#i79)"/><polygon points="1096,475.8 694.5,1121.1 629.4,1075.8" fill="url(#i80)"/><polygon points="1096,475.8 661.5,1099.4 598.7,1050.5" fill="url(#i81)"/><polygon points="1096,475.8 629.4,1075.8 569.3,1023.7" fill="url(#i82)"/><polygon points="1096,475.8 598.7,1050.5 541.3,995.4" fill="url(#i83)"/><polygon points="1096,475.8 569.3,1023.7 514.9,965.7" fill="url(#i84)"/><polygon points="1096,475.8 541.3,995.4 490,934.6" fill="url(#i85)"/><polygon points="1096,475.8 514.9,965.7 466.9,902.2" fill="url(#i86)"/><polygon points="1096,475.8 490,934.6 445.4,868.7" fill="url(#i87)"/><polygon points="1096,475.8 466.9,902.2 425.7,834.1" fill="url(#i88)"/><polygon points="1096,475.8 445.4,868.7 407.9,798.6" fill="url(#i89)"/><polygon points="1096,475.8 425.7,834.1 392,762.1" fill="url(#i90)"/><polygon points="1096,475.8 407.9,798.6 377.9,724.9" fill="url(#i91)"/><polygon points="1096,475.8 392,762.1 365.9,687" fill="url(#i92)"/><polygon points="1096,475.8 377.9,724.9 355.8,648.5" fill="url(#i93)"/><polygon points="1096,475.8 365.9,687 347.8,609.5" fill="url(#i94)"/><polygon points="1096,475.8 355.8,648.5 341.9,570.2" fill="url(#i95)"/><polygon points="1096,475.8 347.8,609.5 338,530.6" fill="url(#i96)"/><polygon points="1096,475.8 341.9,570.2 336.1,490.8" fill="url(#i97)"/><polygon points="1096,475.8 338,530.6 336.4,451" fill="url(#i98)"/><polygon points="1096,475.8 336.1,490.8 338.7,411.3" fill="url(#i99)"/><polygon points="1096,475.8 336.4,451 343.1,371.8" fill="url(#i100)"/><polygon points="1096,475.8 338.7,411.3 349.6,332.5" fill="url(#i101)"/><polygon points="1096,475.8 343.1,371.8 358.1,293.6" fill="url(#i102)"/><polygon points="1096,475.8 349.6,332.5 368.7,255.3" fill="url(#i103)"/><polygon points="1096,475.8 358.1,293.6 381.2,217.5" fill="url(#i104)"/><polygon points="1096,475.8 368.7,255.3 395.7,180.5" fill="url(#i105)"/><polygon points="1096,475.8 381.2,217.5 412.2,144.2" fill="url(#i106)"/><polygon points="1096,475.8 395.7,180.5 430.4,108.9" fill="url(#i107)"/><polygon points="1096,475.8 412.2,144.2 450.6,74.5" fill="url(#i108)"/><polygon points="1096,475.8 430.4,108.9 472.4,41.3" fill="url(#i109)"/><polygon points="1096,475.8 450.6,74.5 496,9.3" fill="url(#i110)"/><polygon points="1096,475.8 472.4,41.3 521.3,-21.5" fill="url(#i111)"/><polygon points="1096,475.8 496,9.3 548.1,-50.9" fill="url(#i112)"/><polygon points="1096,475.8 521.3,-21.5 576.1,-78.5" fill="url(#i113)"/><polygon points="1096,475.8 548.1,-50.9 603.5,-103" fill="url(#i114)"/><polygon points="1096,475.8 576.1,-78.5 630.1,-124.6" fill="url(#i115)"/><polygon points="1096,475.8 603.5,-103 656.1,-144" fill="url(#i116)"/><polygon points="1096,475.8 630.1,-124.6 684.1,-162.9" fill="url(#i117)"/><polygon points="1096,475.8 656.1,-144 714.1,-181.2" fill="url(#i118)"/><polygon points="1096,475.8 684.1,-162.9 746,-198.8" fill="url(#i119)"/><polygon points="1096,475.8 714.1,-181.2 779.9,-215.3" fill="url(#i120)"/><polygon points="1096,475.8 746,-198.8 815.7,-230.6" fill="url(#i121)"/><polygon points="1096,475.8 779.9,-215.3 853,-244.3" fill="url(#i122)"/><polygon points="1096,475.8 815.7,-230.6 891.1,-256" fill="url(#i123)"/><polygon points="1096,475.8 853,-244.3 929.7,-265.7" fill="url(#i124)"/><polygon points="1096,475.8 891.1,-256 968.7,-273.4" fill="url(#i125)"/><polygon points="1096,475.8 929.7,-265.7 1008.1,-279.1" fill="url(#i126)"/><polygon points="1096,475.8 968.7,-273.4 1047.7,-282.6" fill="url(#i127)"/><polygon points="1096,475.8 1008.1,-279.1 1087.5,-284.1" fill="url(#i128)"/><polygon points="1096,475.8 1047.7,-282.6 1127.3,-283.5" fill="url(#i129)"/><polygon points="1096,475.8 1087.5,-284.1 1167,-280.8" fill="url(#i130)"/><polygon points="1096,475.8 1127.3,-283.5 1206.5,-276.1" fill="url(#i131)"/><polygon points="1096,475.8 1167,-280.8 1245.7,-269.3" fill="url(#i132)"/><polygon points="1096,475.8 1206.5,-276.1 1284.4,-260.4" fill="url(#i133)"/><polygon points="1096,475.8 1245.7,-269.3 1322.7,-249.5" fill="url(#i134)"/><polygon points="1096,475.8 1284.4,-260.4 1360.4,-236.7" fill="url(#i135)"/><polygon points="1096,475.8 1322.7,-249.5 1397.3,-221.9" fill="url(#i136)"/><polygon points="1096,475.8 1360.4,-236.7 1433.4,-205.1" fill="url(#i137)"/><polygon points="1096,475.8 1397.3,-221.9 1468.6,-186.6" fill="url(#i138)"/><polygon points="1096,475.8 1433.4,-205.1 1502.7,-166.1" fill="url(#i139)"/><polygon points="1096,475.8 1468.6,-186.6 1535.8,-144" fill="url(#i140)"/><polygon points="1096,475.8 1502.7,-166.1 1567.6,-120.1" fill="url(#i141)"/><polygon points="1096,475.8 1535.8,-144 1597.5,-95.2" fill="url(#i142)"/><polygon points="1096,475.8 1567.6,-120.1 1625.1,-69.7" fill="url(#i143)"/><polygon points="1096,475.8 1597.5,-95.2 1650.5,-43.9" fill="url(#i144)"/><polygon points="1096,475.8 1625.1,-69.7 1673.8,-17.8" fill="url(#i145)"/><polygon points="1096,475.8 1650.5,-43.9 1695,8.1" fill="url(#i146)"/><polygon points="1096,475.8 1673.8,-17.8 1714.2,33.9" fill="url(#i147)"/><polygon points="1096,475.8 1695,8.1 1731.6,59.2" fill="url(#i148)"/><polygon points="1096,475.8 1714.2,33.9 1747.2,84.1" fill="url(#i149)"/><polygon points="1096,475.8 1731.6,59.2 1761.2,108.3" fill="url(#i150)"/><polygon points="1096,475.8 1747.2,84.1 1773.7,131.8" fill="url(#i151)"/><polygon points="1096,475.8 1761.2,108.3 1784.8,154.6" fill="url(#i152)"/><polygon points="1096,475.8 1773.7,131.8 1794.6,176.6" fill="url(#i153)"/><polygon points="1096,475.8 1784.8,154.6 1803.2,197.7" fill="url(#i154)"/><polygon points="1096,475.8 1794.6,176.6 1810.9,217.9" fill="url(#i155)"/><polygon points="1096,475.8 1803.2,197.7 1817.5,237.2" fill="url(#i156)"/><polygon points="1096,475.8 1810.9,217.9 1823.4,255.7" fill="url(#i157)"/><polygon points="1096,475.8 1817.5,237.2 1828.5,273.2" fill="url(#i158)"/><polygon points="1096,475.8 1823.4,255.7 1832.9,290" fill="url(#i159)"/><polygon points="1096,475.8 1828.5,273.2 1836.7,305.8" fill="url(#i160)"/><polygon points="1096,475.8 1832.9,290 1840,320.9" fill="url(#i161)"/><polygon points="1096,475.8 1836.7,305.8 1842.9,335.4" fill="url(#i162)"/><polygon points="1096,475.8 1840,320.9 1845.5,350.2" fill="url(#i163)"/><polygon points="1096,475.8 1842.9,335.4 1847.9,365.4" fill="url(#i164)"/><polygon points="1096,475.8 1845.5,350.2 1850,381" fill="url(#i165)"/><polygon points="1096,475.8 1847.9,365.4 1851.9,397" fill="url(#i166)"/><polygon points="1096,475.8 1850,381 1853.4,413.3" fill="url(#i167)"/><polygon points="1096,475.8 1851.9,397 1854.6,430" fill="url(#i168)"/><polygon points="1096,475.8 1853.4,413.3 1855.4,447.1" fill="url(#i169)"/><polygon points="1096,475.8 1854.6,430 1855.9,464.5" fill="url(#i170)"/><polygon points="1096,475.8 1855.4,447.1 1856,475.8" fill="url(#i171)"/><polygon points="1096,475.8 1855.9,464.5 1855.8,493.8" fill="url(#i172)"/><circle cx="1096" cy="475.8" r="13" fill="url(#wg)"/></g></g></g>
<rect x="779.2" y="227.2" width="1001.2" height="985.8" fill="none" stroke="#a9a9a9" stroke-width="2"/>
<text x="1187.99" y="219.4" font-size="21.65" fill="#d2d2d2" text-anchor="start" font-weight="normal" textLength="130.83" lengthAdjust="spacingAndGlyphs" >CIE 1976 u'v'</text>
<rect x="769.6" y="1211.9" width="9.6" height="2.2" fill="#d2d2d2" />
<text x="755.62" y="1221.7" font-size="22.63" fill="#d2d2d2" text-anchor="start" font-weight="normal" textLength="13.99" lengthAdjust="spacingAndGlyphs" >0</text>
<rect x="778.1" y="1213" width="2.2" height="8.8" fill="#d2d2d2" />
<text x="771.62" y="1246.2" font-size="22.63" fill="#d2d2d2" text-anchor="start" font-weight="normal" textLength="13.99" lengthAdjust="spacingAndGlyphs" >0</text>
<rect x="769.6" y="1133.2" width="9.6" height="2.2" fill="#d2d2d2" />
<text x="725.10" y="1143" font-size="22.63" fill="#d2d2d2" text-anchor="start" font-weight="normal" textLength="44.55" lengthAdjust="spacingAndGlyphs" >0.05</text>
<rect x="858.2" y="1213" width="2.2" height="8.8" fill="#d2d2d2" />
<text x="836.46" y="1246.2" font-size="22.63" fill="#d2d2d2" text-anchor="start" font-weight="normal" textLength="44.55" lengthAdjust="spacingAndGlyphs" >0.05</text>
<rect x="769.6" y="1054.5" width="9.6" height="2.2" fill="#d2d2d2" />
<text x="737.39" y="1064.3" font-size="22.63" fill="#d2d2d2" text-anchor="start" font-weight="normal" textLength="32.37" lengthAdjust="spacingAndGlyphs" >0.1</text>
<rect x="938.2" y="1213" width="2.2" height="8.8" fill="#d2d2d2" />
<text x="922.66" y="1246.2" font-size="22.63" fill="#d2d2d2" text-anchor="start" font-weight="normal" textLength="32.37" lengthAdjust="spacingAndGlyphs" >0.1</text>
<rect x="769.6" y="975.8" width="9.6" height="2.2" fill="#d2d2d2" />
<text x="725.10" y="985.6" font-size="22.63" fill="#d2d2d2" text-anchor="start" font-weight="normal" textLength="44.55" lengthAdjust="spacingAndGlyphs" >0.15</text>
<rect x="1018.3" y="1213" width="2.2" height="8.8" fill="#d2d2d2" />
<text x="996.58" y="1246.2" font-size="22.63" fill="#d2d2d2" text-anchor="start" font-weight="normal" textLength="44.55" lengthAdjust="spacingAndGlyphs" >0.15</text>
<rect x="769.6" y="897.1" width="9.6" height="2.2" fill="#d2d2d2" />
<text x="737.39" y="906.9" font-size="22.63" fill="#d2d2d2" text-anchor="start" font-weight="normal" textLength="32.37" lengthAdjust="spacingAndGlyphs" >0.2</text>
<rect x="1098.3" y="1213" width="2.2" height="8.8" fill="#d2d2d2" />
<text x="1082.78" y="1246.2" font-size="22.63" fill="#d2d2d2" text-anchor="start" font-weight="normal" textLength="32.37" lengthAdjust="spacingAndGlyphs" >0.2</text>
<rect x="769.6" y="818.4" width="9.6" height="2.2" fill="#d2d2d2" />
<text x="725.10" y="828.2" font-size="22.63" fill="#d2d2d2" text-anchor="start" font-weight="normal" textLength="44.55" lengthAdjust="spacingAndGlyphs" >0.25</text>
<rect x="1178.4" y="1213" width="2.2" height="8.8" fill="#d2d2d2" />
<text x="1156.70" y="1246.2" font-size="22.63" fill="#d2d2d2" text-anchor="start" font-weight="normal" textLength="44.55" lengthAdjust="spacingAndGlyphs" >0.25</text>
<rect x="769.6" y="739.7" width="9.6" height="2.2" fill="#d2d2d2" />
<text x="737.39" y="749.5" font-size="22.63" fill="#d2d2d2" text-anchor="start" font-weight="normal" textLength="32.24" lengthAdjust="spacingAndGlyphs" >0.3</text>
<rect x="1258.5" y="1213" width="2.2" height="8.8" fill="#d2d2d2" />
<text x="1242.90" y="1246.2" font-size="22.63" fill="#d2d2d2" text-anchor="start" font-weight="normal" textLength="32.24" lengthAdjust="spacingAndGlyphs" >0.3</text>
<rect x="769.6" y="661" width="9.6" height="2.2" fill="#d2d2d2" />
<text x="725.10" y="670.8" font-size="22.63" fill="#d2d2d2" text-anchor="start" font-weight="normal" textLength="44.55" lengthAdjust="spacingAndGlyphs" >0.35</text>
<rect x="1338.5" y="1213" width="2.2" height="8.8" fill="#d2d2d2" />
<text x="1316.82" y="1246.2" font-size="22.63" fill="#d2d2d2" text-anchor="start" font-weight="normal" textLength="44.55" lengthAdjust="spacingAndGlyphs" >0.35</text>
<rect x="769.6" y="582.3" width="9.6" height="2.2" fill="#d2d2d2" />
<text x="737.40" y="592.1" font-size="22.63" fill="#d2d2d2" text-anchor="start" font-weight="normal" textLength="31.88" lengthAdjust="spacingAndGlyphs" >0.4</text>
<rect x="1418.6" y="1213" width="2.2" height="8.8" fill="#d2d2d2" />
<text x="1403.03" y="1246.2" font-size="22.63" fill="#d2d2d2" text-anchor="start" font-weight="normal" textLength="31.88" lengthAdjust="spacingAndGlyphs" >0.4</text>
<rect x="769.6" y="503.6" width="9.6" height="2.2" fill="#d2d2d2" />
<text x="725.10" y="513.4" font-size="22.63" fill="#d2d2d2" text-anchor="start" font-weight="normal" textLength="44.55" lengthAdjust="spacingAndGlyphs" >0.45</text>
<rect x="1498.6" y="1213" width="2.2" height="8.8" fill="#d2d2d2" />
<text x="1476.94" y="1246.2" font-size="22.63" fill="#d2d2d2" text-anchor="start" font-weight="normal" textLength="44.55" lengthAdjust="spacingAndGlyphs" >0.45</text>
<rect x="769.6" y="424.9" width="9.6" height="2.2" fill="#d2d2d2" />
<text x="737.39" y="434.7" font-size="22.63" fill="#d2d2d2" text-anchor="start" font-weight="normal" textLength="32.24" lengthAdjust="spacingAndGlyphs" >0.5</text>
<rect x="1578.7" y="1213" width="2.2" height="8.8" fill="#d2d2d2" />
<text x="1563.14" y="1246.2" font-size="22.63" fill="#d2d2d2" text-anchor="start" font-weight="normal" textLength="32.24" lengthAdjust="spacingAndGlyphs" >0.5</text>
<rect x="769.6" y="346.2" width="9.6" height="2.2" fill="#d2d2d2" />
<text x="725.10" y="356" font-size="22.63" fill="#d2d2d2" text-anchor="start" font-weight="normal" textLength="44.55" lengthAdjust="spacingAndGlyphs" >0.55</text>
<rect x="1658.8" y="1213" width="2.2" height="8.8" fill="#d2d2d2" />
<text x="1637.06" y="1246.2" font-size="22.63" fill="#d2d2d2" text-anchor="start" font-weight="normal" textLength="44.55" lengthAdjust="spacingAndGlyphs" >0.55</text>
<rect x="769.6" y="267.5" width="9.6" height="2.2" fill="#d2d2d2" />
<text x="737.39" y="277.3" font-size="22.63" fill="#d2d2d2" text-anchor="start" font-weight="normal" textLength="32.24" lengthAdjust="spacingAndGlyphs" >0.6</text>
<rect x="1738.8" y="1213" width="2.2" height="8.8" fill="#d2d2d2" />
<text x="1723.26" y="1246.2" font-size="22.63" fill="#d2d2d2" text-anchor="start" font-weight="normal" textLength="32.24" lengthAdjust="spacingAndGlyphs" >0.6</text>
<rect x="1912.3" y="191" width="604" height="606" fill="#1f1f1f" />
<rect x="1922" y="201.7" width="584.6" height="584.5" fill="#333" />
<rect x="1967.9" y="237.9" width="534.4" height="504.6" fill="#262626" />
<use href="#gamut" transform="matrix(0.53210,0,0,0.51252,1553.287,120.818)"/>
<rect x="1967.9" y="237.9" width="534.4" height="504.6" fill="none" stroke="#a9a9a9" stroke-width="2"/>
<text x="2148.89" y="229.4" font-size="20.67" fill="#d2d2d2" text-anchor="start" font-weight="normal" textLength="131.24" lengthAdjust="spacingAndGlyphs" >CIE 1976 u'v'</text>
<rect x="1958.5" y="741.5" width="9" height="2" fill="#d2d2d2" />
<text x="1944.46" y="751.3" font-size="20.81" fill="#d2d2d2" text-anchor="start" font-weight="normal" textLength="13.42" lengthAdjust="spacingAndGlyphs" >0</text>
<rect x="1966.9" y="742.5" width="2" height="9.2" fill="#d2d2d2" />
<text x="1960.41" y="775.4" font-size="20.81" fill="#d2d2d2" text-anchor="start" font-weight="normal" textLength="13.42" lengthAdjust="spacingAndGlyphs" >0</text>
<rect x="1958.5" y="661.7" width="9" height="2" fill="#d2d2d2" />
<text x="1925.99" y="671.5" font-size="20.81" fill="#d2d2d2" text-anchor="start" font-weight="normal" textLength="32.05" lengthAdjust="spacingAndGlyphs" >0.1</text>
<rect x="2050.8" y="742.5" width="2" height="9.2" fill="#d2d2d2" />
<text x="2035.13" y="775.4" font-size="20.81" fill="#d2d2d2" text-anchor="start" font-weight="normal" textLength="32.05" lengthAdjust="spacingAndGlyphs" >0.1</text>
<rect x="1958.5" y="580.8" width="9" height="2" fill="#d2d2d2" />
<text x="1925.99" y="590.6" font-size="20.81" fill="#d2d2d2" text-anchor="start" font-weight="normal" textLength="32.05" lengthAdjust="spacingAndGlyphs" >0.2</text>
<rect x="2136.3" y="742.5" width="2" height="9.2" fill="#d2d2d2" />
<text x="2120.57" y="775.4" font-size="20.81" fill="#d2d2d2" text-anchor="start" font-weight="normal" textLength="32.05" lengthAdjust="spacingAndGlyphs" >0.2</text>
<rect x="1958.5" y="500" width="9" height="2" fill="#d2d2d2" />
<text x="1926.00" y="509.8" font-size="20.81" fill="#d2d2d2" text-anchor="start" font-weight="normal" textLength="31.93" lengthAdjust="spacingAndGlyphs" >0.3</text>
<rect x="2221.7" y="742.5" width="2" height="9.2" fill="#d2d2d2" />
<text x="2206.02" y="775.4" font-size="20.81" fill="#d2d2d2" text-anchor="start" font-weight="normal" textLength="31.93" lengthAdjust="spacingAndGlyphs" >0.3</text>
<rect x="1958.5" y="419.1" width="9" height="2" fill="#d2d2d2" />
<text x="1926.01" y="428.9" font-size="20.81" fill="#d2d2d2" text-anchor="start" font-weight="normal" textLength="31.57" lengthAdjust="spacingAndGlyphs" >0.4</text>
<rect x="2307.2" y="742.5" width="2" height="9.2" fill="#d2d2d2" />
<text x="2291.47" y="775.4" font-size="20.81" fill="#d2d2d2" text-anchor="start" font-weight="normal" textLength="31.57" lengthAdjust="spacingAndGlyphs" >0.4</text>
<rect x="1958.5" y="338.3" width="9" height="2" fill="#d2d2d2" />
<text x="1926.00" y="348.1" font-size="20.81" fill="#d2d2d2" text-anchor="start" font-weight="normal" textLength="31.93" lengthAdjust="spacingAndGlyphs" >0.5</text>
<rect x="2392.6" y="742.5" width="2" height="9.2" fill="#d2d2d2" />
<text x="2376.90" y="775.4" font-size="20.81" fill="#d2d2d2" text-anchor="start" font-weight="normal" textLength="31.93" lengthAdjust="spacingAndGlyphs" >0.5</text>
<rect x="1958.5" y="257.5" width="9" height="2" fill="#d2d2d2" />
<text x="1926.00" y="267.3" font-size="20.81" fill="#d2d2d2" text-anchor="start" font-weight="normal" textLength="31.93" lengthAdjust="spacingAndGlyphs" >0.6</text>
<rect x="2478" y="742.5" width="2" height="9.2" fill="#d2d2d2" />
<text x="2462.34" y="775.4" font-size="20.81" fill="#d2d2d2" text-anchor="start" font-weight="normal" textLength="31.93" lengthAdjust="spacingAndGlyphs" >0.6</text>
<rect x="2085.6" y="305.1" width="20.2" height="20.2" fill="none" stroke="#efefef" stroke-width="1.9"/>
<rect x="2129.4" y="310.6" width="20.2" height="20.2" fill="none" stroke="#efefef" stroke-width="1.9"/>
<rect x="2237.1" y="329.6" width="20.2" height="20.2" fill="none" stroke="#efefef" stroke-width="1.9"/>
<rect x="2099.2" y="358.9" width="20.2" height="20.2" fill="none" stroke="#efefef" stroke-width="1.9"/>
<rect x="2165.9" y="403.3" width="20.2" height="20.2" fill="none" stroke="#efefef" stroke-width="1.9"/>
<rect x="2118" y="451" width="20.2" height="20.2" fill="none" stroke="#efefef" stroke-width="1.9"/>
<rect x="2124.7" y="352.6" width="19.8" height="19.8" fill="none" stroke="#000" stroke-width="2.6"/>
<rect x="2330" y="567.5" width="166.5" height="167" fill="#3c3c3c" />
<rect x="2334" y="572" width="159" height="158.5" fill="#9a9a9a" />
<g clip-path="url(#cin)"><g filter="url(#nb)"><rect x="2315.3" y="553.5" width="196.7" height="195.3" fill="#fff"/><polygon points="2437.4,649.8 2737.4,649.8 2732.8,701.9" fill="url(#n0)"/><polygon points="2437.4,649.8 2736.3,675.9 2727.2,727.4" fill="url(#n1)"/><polygon points="2437.4,649.8 2732.8,701.9 2719.3,752.4" fill="url(#n2)"/><polygon points="2437.4,649.8 2727.2,727.4 2709.3,776.6" fill="url(#n3)"/><polygon points="2437.4,649.8 2719.3,752.4 2697.2,799.8" fill="url(#n4)"/><polygon points="2437.4,649.8 2709.3,776.6 2683.1,821.9" fill="url(#n5)"/><polygon points="2437.4,649.8 2697.2,799.8 2667.2,842.6" fill="url(#n6)"/><polygon points="2437.4,649.8 2683.1,821.9 2649.5,861.9" fill="url(#n7)"/><polygon points="2437.4,649.8 2667.2,842.6 2630.2,879.6" fill="url(#n8)"/><polygon points="2437.4,649.8 2649.5,861.9 2609.5,895.5" fill="url(#n9)"/><polygon points="2437.4,649.8 2630.2,879.6 2587.4,909.6" fill="url(#n10)"/><polygon points="2437.4,649.8 2609.5,895.5 2564.2,921.7" fill="url(#n11)"/><polygon points="2437.4,649.8 2587.4,909.6 2540,931.7" fill="url(#n12)"/><polygon points="2437.4,649.8 2564.2,921.7 2515,939.6" fill="url(#n13)"/><polygon points="2437.4,649.8 2540,931.7 2489.5,945.2" fill="url(#n14)"/><polygon points="2437.4,649.8 2515,939.6 2463.5,948.7" fill="url(#n15)"/><polygon points="2437.4,649.8 2489.5,945.2 2437.4,949.8" fill="url(#n16)"/><polygon points="2437.4,649.8 2463.5,948.7 2411.3,948.7" fill="url(#n17)"/><polygon points="2437.4,649.8 2437.4,949.8 2385.3,945.2" fill="url(#n18)"/><polygon points="2437.4,649.8 2411.3,948.7 2359.8,939.6" fill="url(#n19)"/><polygon points="2437.4,649.8 2385.3,945.2 2334.8,931.7" fill="url(#n20)"/><polygon points="2437.4,649.8 2359.8,939.6 2310.6,921.7" fill="url(#n21)"/><polygon points="2437.4,649.8 2334.8,931.7 2287.4,909.6" fill="url(#n22)"/><polygon points="2437.4,649.8 2310.6,921.7 2265.3,895.5" fill="url(#n23)"/><polygon points="2437.4,649.8 2287.4,909.6 2244.6,879.6" fill="url(#n24)"/><polygon points="2437.4,649.8 2265.3,895.5 2225.3,861.9" fill="url(#n25)"/><polygon points="2437.4,649.8 2244.6,879.6 2207.6,842.6" fill="url(#n26)"/><polygon points="2437.4,649.8 2225.3,861.9 2191.7,821.9" fill="url(#n27)"/><polygon points="2437.4,649.8 2207.6,842.6 2177.6,799.8" fill="url(#n28)"/><polygon points="2437.4,649.8 2191.7,821.9 2165.5,776.6" fill="url(#n29)"/><polygon points="2437.4,649.8 2177.6,799.8 2155.5,752.4" fill="url(#n30)"/><polygon points="2437.4,649.8 2165.5,776.6 2147.6,727.4" fill="url(#n31)"/><polygon points="2437.4,649.8 2155.5,752.4 2142,701.9" fill="url(#n32)"/><polygon points="2437.4,649.8 2147.6,727.4 2138.5,675.9" fill="url(#n33)"/><polygon points="2437.4,649.8 2142,701.9 2137.4,649.8" fill="url(#n34)"/><polygon points="2437.4,649.8 2138.5,675.9 2138.5,623.7" fill="url(#n35)"/><polygon points="2437.4,649.8 2137.4,649.8 2142,597.7" fill="url(#n36)"/><polygon points="2437.4,649.8 2138.5,623.7 2147.6,572.2" fill="url(#n37)"/><polygon points="2437.4,649.8 2142,597.7 2155.5,547.2" fill="url(#n38)"/><polygon points="2437.4,649.8 2147.6,572.2 2165.5,523" fill="url(#n39)"/><polygon points="2437.4,649.8 2155.5,547.2 2177.6,499.8" fill="url(#n40)"/><polygon points="2437.4,649.8 2165.5,523 2191.7,477.7" fill="url(#n41)"/><polygon points="2437.4,649.8 2177.6,499.8 2207.6,457" fill="url(#n42)"/><polygon points="2437.4,649.8 2191.7,477.7 2225.3,437.7" fill="url(#n43)"/><polygon points="2437.4,649.8 2207.6,457 2244.6,420" fill="url(#n44)"/><polygon points="2437.4,649.8 2225.3,437.7 2265.3,404.1" fill="url(#n45)"/><polygon points="2437.4,649.8 2244.6,420 2287.4,390" fill="url(#n46)"/><polygon points="2437.4,649.8 2265.3,404.1 2310.6,377.9" fill="url(#n47)"/><polygon points="2437.4,649.8 2287.4,390 2334.8,367.9" fill="url(#n48)"/><polygon points="2437.4,649.8 2310.6,377.9 2359.8,360" fill="url(#n49)"/><polygon points="2437.4,649.8 2334.8,367.9 2385.3,354.4" fill="url(#n50)"/><polygon points="2437.4,649.8 2359.8,360 2411.3,350.9" fill="url(#n51)"/><polygon points="2437.4,649.8 2385.3,354.4 2437.4,349.8" fill="url(#n52)"/><polygon points="2437.4,649.8 2411.3,350.9 2463.5,350.9" fill="url(#n53)"/><polygon points="2437.4,649.8 2437.4,349.8 2489.5,354.4" fill="url(#n54)"/><polygon points="2437.4,649.8 2463.5,350.9 2515,360" fill="url(#n55)"/><polygon points="2437.4,649.8 2489.5,354.4 2540,367.9" fill="url(#n56)"/><polygon points="2437.4,649.8 2515,360 2564.2,377.9" fill="url(#n57)"/><polygon points="2437.4,649.8 2540,367.9 2587.4,390" fill="url(#n58)"/><polygon points="2437.4,649.8 2564.2,377.9 2609.5,404.1" fill="url(#n59)"/><polygon points="2437.4,649.8 2587.4,390 2630.2,420" fill="url(#n60)"/><polygon points="2437.4,649.8 2609.5,404.1 2649.5,437.7" fill="url(#n61)"/><polygon points="2437.4,649.8 2630.2,420 2667.2,457" fill="url(#n62)"/><polygon points="2437.4,649.8 2649.5,437.7 2683.1,477.7" fill="url(#n63)"/><polygon points="2437.4,649.8 2667.2,457 2697.2,499.8" fill="url(#n64)"/><polygon points="2437.4,649.8 2683.1,477.7 2709.3,523" fill="url(#n65)"/><polygon points="2437.4,649.8 2697.2,499.8 2719.3,547.2" fill="url(#n66)"/><polygon points="2437.4,649.8 2709.3,523 2727.2,572.2" fill="url(#n67)"/><polygon points="2437.4,649.8 2719.3,547.2 2732.8,597.7" fill="url(#n68)"/><polygon points="2437.4,649.8 2727.2,572.2 2736.3,623.7" fill="url(#n69)"/><polygon points="2437.4,649.8 2732.8,597.7 2737.4,649.8" fill="url(#n70)"/><polygon points="2437.4,649.8 2736.3,623.7 2736.3,675.9" fill="url(#n71)"/></g></g>
<rect x="2427.5" y="639.9" width="19.8" height="19.8" fill="none" stroke="#000" stroke-width="2.6"/>
<rect x="1913.2" y="845.9" width="605" height="182.7" fill="#262626" />
<rect x="1913.2" y="845.9" width="605" height="182.7" fill="none" stroke="#a9a9a9" stroke-width="2"/>
<rect x="1904.2" y="844.9" width="9" height="2" fill="#d2d2d2" />
<text x="1878.19" y="855.8" font-size="22.49" fill="#d2d2d2" text-anchor="start" font-weight="normal" textLength="25.38" lengthAdjust="spacingAndGlyphs" >15</text>
<rect x="1913.2" y="905.8" width="605" height="2" fill="#8c8c8c" />
<rect x="1904.2" y="905.8" width="9" height="2" fill="#d2d2d2" />
<text x="1878.20" y="916.7" font-size="22.49" fill="#d2d2d2" text-anchor="start" font-weight="normal" textLength="25.25" lengthAdjust="spacingAndGlyphs" >10</text>
<rect x="1913.2" y="966.7" width="605" height="2" fill="#8c8c8c" />
<rect x="1904.2" y="966.7" width="9" height="2" fill="#d2d2d2" />
<text x="1890.02" y="977.6" font-size="22.49" fill="#d2d2d2" text-anchor="start" font-weight="normal" textLength="13.58" lengthAdjust="spacingAndGlyphs" >5</text>
<rect x="1904.2" y="1027.6" width="9" height="2" fill="#d2d2d2" />
<text x="1890.16" y="1038.5" font-size="22.49" fill="#d2d2d2" text-anchor="start" font-weight="normal" textLength="13.30" lengthAdjust="spacingAndGlyphs" >0</text>
<rect x="1912.2" y="1028.6" width="2" height="9" fill="#d2d2d2" />
<rect x="2113.9" y="1028.6" width="2" height="9" fill="#d2d2d2" />
<rect x="2315.5" y="1028.6" width="2" height="9" fill="#d2d2d2" />
<rect x="2517.2" y="1028.6" width="2" height="9" fill="#d2d2d2" />
<text x="2008.31" y="1054.6" font-size="22.49" fill="#d2d2d2" text-anchor="start" font-weight="normal" textLength="12.61" lengthAdjust="spacingAndGlyphs" >0</text>
<text x="2195.39" y="1054.6" font-size="22.49" fill="#d2d2d2" text-anchor="start" font-weight="normal" textLength="39.16" lengthAdjust="spacingAndGlyphs" >100</text>
<text x="2396.13" y="1054.6" font-size="22.49" fill="#d2d2d2" text-anchor="start" font-weight="normal" textLength="43.67" lengthAdjust="spacingAndGlyphs" >50%</text>
<text x="2137.00" y="837.4" font-size="21.65" fill="#d2d2d2" text-anchor="start" font-weight="normal" textLength="123.97" lengthAdjust="spacingAndGlyphs" >DeltaE 2000</text>
<text x="1912.40" y="842.3" font-size="22.35" fill="#f0f0f0" text-anchor="start" font-weight="normal" textLength="63.33" lengthAdjust="spacingAndGlyphs" >Avg: 0</text>
<text x="2445.46" y="842.3" font-size="22.35" fill="#f0f0f0" text-anchor="start" font-weight="normal" textLength="72.81" lengthAdjust="spacingAndGlyphs" >Max: 0</text>
<rect x="1912.2" y="844.3" width="607" height="3.2" fill="#b4b4b4" />
<rect x="1913.2" y="1096.9" width="605" height="182.8" fill="#262626" />
<rect x="1913.2" y="1096.9" width="605" height="182.8" fill="none" stroke="#a9a9a9" stroke-width="2"/>
<rect x="1904.2" y="1095.9" width="9" height="2" fill="#d2d2d2" />
<text x="1878.19" y="1106.8" font-size="22.49" fill="#d2d2d2" text-anchor="start" font-weight="normal" textLength="25.38" lengthAdjust="spacingAndGlyphs" >15</text>
<rect x="1913.2" y="1156.8" width="605" height="2" fill="#8c8c8c" />
<rect x="1904.2" y="1156.8" width="9" height="2" fill="#d2d2d2" />
<text x="1878.20" y="1167.7" font-size="22.49" fill="#d2d2d2" text-anchor="start" font-weight="normal" textLength="25.25" lengthAdjust="spacingAndGlyphs" >10</text>
<rect x="1913.2" y="1217.8" width="605" height="2" fill="#8c8c8c" />
<rect x="1904.2" y="1217.8" width="9" height="2" fill="#d2d2d2" />
<text x="1890.02" y="1228.7" font-size="22.49" fill="#d2d2d2" text-anchor="start" font-weight="normal" textLength="13.58" lengthAdjust="spacingAndGlyphs" >5</text>
<rect x="1904.2" y="1278.7" width="9" height="2" fill="#d2d2d2" />
<text x="1890.16" y="1289.6" font-size="22.49" fill="#d2d2d2" text-anchor="start" font-weight="normal" textLength="13.30" lengthAdjust="spacingAndGlyphs" >0</text>
<rect x="1912.2" y="1279.7" width="2" height="9" fill="#d2d2d2" />
<rect x="2113.9" y="1279.7" width="2" height="9" fill="#d2d2d2" />
<rect x="2315.5" y="1279.7" width="2" height="9" fill="#d2d2d2" />
<rect x="2517.2" y="1279.7" width="2" height="9" fill="#d2d2d2" />
<text x="2008.31" y="1305.7" font-size="22.49" fill="#d2d2d2" text-anchor="start" font-weight="normal" textLength="12.61" lengthAdjust="spacingAndGlyphs" >0</text>
<text x="2195.39" y="1305.7" font-size="22.49" fill="#d2d2d2" text-anchor="start" font-weight="normal" textLength="39.16" lengthAdjust="spacingAndGlyphs" >100</text>
<text x="2396.13" y="1305.7" font-size="22.49" fill="#d2d2d2" text-anchor="start" font-weight="normal" textLength="43.67" lengthAdjust="spacingAndGlyphs" >50%</text>
<text x="2147.18" y="1088.4" font-size="21.65" fill="#d2d2d2" text-anchor="start" font-weight="normal" textLength="104.00" lengthAdjust="spacingAndGlyphs" >DeltaE ITP</text>
<text x="1912.40" y="1093.3" font-size="22.35" fill="#f0f0f0" text-anchor="start" font-weight="normal" textLength="63.33" lengthAdjust="spacingAndGlyphs" >Avg: 0</text>
<text x="2445.46" y="1093.3" font-size="22.35" fill="#f0f0f0" text-anchor="start" font-weight="normal" textLength="72.81" lengthAdjust="spacingAndGlyphs" >Max: 0</text>
<rect x="1912.2" y="1095.3" width="607" height="3.2" fill="#b4b4b4" />
<rect x="-12" y="5" width="63" height="54" rx="8.5" fill="url(#gPlay)" stroke="#cdcdcd" stroke-width="2"/>
<circle cx="22.9" cy="31.8" r="19.4" fill="url(#gCirc)"/>
<polygon points="17.7,20.9 17.7,40.8 28.9,30.9" fill="#fff"/>
<path d="M56.6,64.5 V12 Q56.6,4.9 63.5,4.9 H231 Q237.9,4.9 237.9,12 V64.5 Z" fill="url(#gTab)"/>
<path d="M56.6,64.5 V12 Q56.6,4.9 63.5,4.9 H231 Q237.9,4.9 237.9,12 V64.5" fill="none" stroke="#8e8e8e" stroke-width="1.6"/>
<rect x="171.2" y="6" width="1.8" height="58.5" fill="#8a8a8a" />
<text x="66.58" y="44.6" font-size="22.21" fill="#e8e8e8" text-anchor="start" font-weight="normal" textLength="94.50" lengthAdjust="spacingAndGlyphs" >History 1</text>
<circle cx="202.6" cy="37.6" r="18" fill="url(#gCircD)"/>
<rect x="197.2" y="39.2" width="11" height="1.6" fill="#9a9a9a" />
<rect x="201.9" y="34.5" width="1.6" height="11" fill="#9a9a9a" />
<path d="M1403.8,64.5 V11 Q1403.8,4.8 1410.3,4.8 H1756.9 Q1763.4,4.8 1763.4,11 V64.5 Z" fill="url(#gDD)"/>
<path d="M1403.8,64.5 V11 Q1403.8,4.8 1410.3,4.8 H1416.1 V64.5 Z" fill="url(#gGreen)"/>
<circle cx="1730.8" cy="33.8" r="18.6" fill="url(#gDDc)"/>
<polygon points="1721,32 1740.6,32 1730.8,41.6" fill="#fff"/>
<text x="1420.31" y="27.8" font-size="20.11" fill="#f2f2f2" text-anchor="start" font-weight="normal" textLength="284.83" lengthAdjust="spacingAndGlyphs" >Portrait Displays C6 HDR5000</text>
<text x="1422.20" y="56.2" font-size="20.11" fill="#f2f2f2" text-anchor="start" font-weight="normal" textLength="138.25" lengthAdjust="spacingAndGlyphs" >* EIZO CS2731</text>
<path d="M1775.7,64.5 V11 Q1775.7,4.8 1782.2,4.8 H2026.9 Q2033.4,4.8 2033.4,11 V64.5 Z" fill="url(#gDD)"/>
<path d="M1775.7,64.5 V11 Q1775.7,4.8 1782.2,4.8 H1788 V64.5 Z" fill="url(#gYellow)"/>
<circle cx="2001.4" cy="33.8" r="18.6" fill="url(#gDDc)"/>
<polygon points="1991.6,32 2011.2,32 2001.4,41.6" fill="#fff"/>
<text x="1791.54" y="27.8" font-size="20.11" fill="#f2f2f2" text-anchor="start" font-weight="normal" textLength="67.80" lengthAdjust="spacingAndGlyphs" >Source</text>
<path d="M2045.7,64.5 V11 Q2045.7,4.8 2052.2,4.8 H2428.4 Q2434.9,4.8 2434.9,11 V64.5 Z" fill="url(#gDD)"/>
<path d="M2045.7,64.5 V11 Q2045.7,4.8 2052.2,4.8 H2058 V64.5 Z" fill="url(#gGreen)"/>
<circle cx="2329.5" cy="33.8" r="18.6" fill="url(#gDDc)"/>
<polygon points="2319.7,32 2339.3,32 2329.5,41.6" fill="#fff"/>
<text x="2061.91" y="27.8" font-size="20.11" fill="#f2f2f2" text-anchor="start" font-weight="normal" textLength="242.01" lengthAdjust="spacingAndGlyphs" >EIZO ColorEdge monitors</text>
<text x="2061.77" y="56.2" font-size="20.11" fill="#f2f2f2" text-anchor="start" font-weight="normal" textLength="76.31" lengthAdjust="spacingAndGlyphs" >Mode 4</text>
<rect x="2366.6" y="10" width="1.4" height="54.5" fill="#3e3e3e" />
<rect x="2368" y="10" width="1.2" height="54.5" fill="#7c7c7c" />
<rect x="2380.7" y="16.8" width="47.5" height="28.5" rx="4" fill="url(#gMon)" stroke="#1e1e1e" stroke-width="2.6"/>
<path d="M2397,46.6 H2412 L2413.5,48.6 H2395.5 Z" fill="#222"/><ellipse cx="2404.6" cy="50.2" rx="12.4" ry="2.3" fill="#333"/>
<text x="2386.28" y="37.2" font-size="18.44" fill="#c6c6c6" text-anchor="start" font-weight="normal" textLength="35.62" lengthAdjust="spacingAndGlyphs" stroke="#c6c6c6" stroke-width="0.5">DDC</text>
<rect x="2441.6" y="5" width="65.6" height="54" rx="8.5" fill="url(#gPlay)" stroke="#d4d4d4" stroke-width="2"/>
<circle cx="2474.4" cy="32" r="19.4" fill="url(#gCirc)"/>
<g transform="translate(2474.6,32.1)" fill="#e6e6e6"><polygon points="-2.5,-9.4 -1.4,-13.3 1.4,-13.3 2.5,-9.4" transform="rotate(0)"/><polygon points="-2.5,-9.4 -1.4,-13.3 1.4,-13.3 2.5,-9.4" transform="rotate(45)"/><polygon points="-2.5,-9.4 -1.4,-13.3 1.4,-13.3 2.5,-9.4" transform="rotate(90)"/><polygon points="-2.5,-9.4 -1.4,-13.3 1.4,-13.3 2.5,-9.4" transform="rotate(135)"/><polygon points="-2.5,-9.4 -1.4,-13.3 1.4,-13.3 2.5,-9.4" transform="rotate(180)"/><polygon points="-2.5,-9.4 -1.4,-13.3 1.4,-13.3 2.5,-9.4" transform="rotate(225)"/><polygon points="-2.5,-9.4 -1.4,-13.3 1.4,-13.3 2.5,-9.4" transform="rotate(270)"/><polygon points="-2.5,-9.4 -1.4,-13.3 1.4,-13.3 2.5,-9.4" transform="rotate(315)"/><circle r="8.2" fill="none" stroke="#e6e6e6" stroke-width="4.3"/></g>
<rect x="2509.6" y="5" width="70" height="54" rx="8.5" fill="url(#gPlay)" stroke="#d4d4d4" stroke-width="2"/>
<circle cx="2537.5" cy="32" r="19.4" fill="url(#gCirc)"/>
<polygon points="2542,21 2542,41 2530.8,31" fill="#fff"/>
<rect x="0" y="64.5" width="2560" height="1.6" fill="#2a2a2a" />
<text x="32.18" y="141.6" font-size="61.45" fill="#f4f4f4" text-anchor="start" font-weight="normal" textLength="514.30" lengthAdjust="spacingAndGlyphs" stroke="#f4f4f4" stroke-width="0.8">3D LUT Calibration</text>
<text x="46.13" y="211.9" font-size="24.44" fill="#ececec" text-anchor="start" font-weight="normal" textLength="50.91" lengthAdjust="spacingAndGlyphs" >Click</text>
<text x="104.88" y="211.9" font-size="24.44" fill="#fff" text-anchor="start" font-weight="bold" textLength="95.11" lengthAdjust="spacingAndGlyphs" >AutoCal</text>
<text x="206.32" y="211.9" font-size="24.44" fill="#ececec" text-anchor="start" font-weight="normal" textLength="437.67" lengthAdjust="spacingAndGlyphs" >to calibrate the 3D LUT on your display.</text>
<text x="47.30" y="245.6" font-size="24.44" fill="#ececec" text-anchor="start" font-weight="normal" textLength="492.74" lengthAdjust="spacingAndGlyphs" >After the calibration completes, you can click</text>
<text x="546.78" y="245.6" font-size="24.44" fill="#fff" text-anchor="start" font-weight="bold" textLength="100.93" lengthAdjust="spacingAndGlyphs" >Measure</text>
<text x="654.88" y="245.6" font-size="24.44" fill="#ececec" text-anchor="start" font-weight="normal" textLength="23.52" lengthAdjust="spacingAndGlyphs" >to</text>
<text x="46.29" y="278.5" font-size="24.44" fill="#ececec" text-anchor="start" font-weight="normal" textLength="342.64" lengthAdjust="spacingAndGlyphs" >quickly validate the calibration.</text>
<rect x="199.6" y="359.2" width="302" height="60.4" fill="#252525" rx="1" filter="url(#bl)"/>
<rect x="201.9" y="361.3" width="296.9" height="55.7" fill="url(#gBtn)" />
<text x="277.70" y="404.2" font-size="35.89" fill="#f4f4f4" text-anchor="start" font-weight="normal" textLength="145.83" lengthAdjust="spacingAndGlyphs" >Measure</text>
<rect x="1415" y="113" width="21.6" height="21" fill="#808080" />
<path d="M1413.2,123.4 L1417.4,119.6 L1423.4,126.2 L1435.2,109.2 L1439.6,112.2 L1424,134.6 Z" fill="#fff" stroke="#6a6a6a" stroke-width="1.2" stroke-linejoin="round"/>
<text x="1450.89" y="132.3" font-size="22.91" fill="#f0f0f0" text-anchor="start" font-weight="normal" textLength="255.16" lengthAdjust="spacingAndGlyphs" >Include Luminance Error</text>
<rect x="1775.8" y="76.6" width="429.4" height="82.6" fill="#262626" rx="1" filter="url(#bl)"/>
<rect x="1780.5" y="80.8" width="420" height="73.9" fill="url(#gBtn2)" />
<text x="1905.00" y="135.6" font-size="45.81" fill="#f6f6f6" text-anchor="start" font-weight="normal" textLength="172.38" lengthAdjust="spacingAndGlyphs" >AutoCal</text>
<rect x="2256.6" y="97.6" width="260.4" height="40.6" fill="#2a2a2a" rx="1" filter="url(#bl)"/>
<rect x="2258.4" y="99.2" width="257" height="37.6" fill="url(#gBtn2)" />
<text x="2306.40" y="127.5" font-size="23.46" fill="#f4f4f4" text-anchor="start" font-weight="normal" textLength="161.06" lengthAdjust="spacingAndGlyphs" >Show Datagrid</text>
<rect x="0" y="1319.3" width="2560" height="121" fill="#3b3b3b" />
<rect x="0" y="1417.2" width="1920" height="23" fill="#515151" />
<g clip-path="url(#cstrip)">
<rect x="-0.2" y="1319.8" width="99.4" height="96.6" rx="8" fill="url(#gTile)" stroke="#5e5e5e" stroke-width="1.2"/>
<rect x="10.1" y="1329.4" width="80.2" height="25.2" fill="url(#gInset)" rx="7" />
<rect x="11.1" y="1330.6" width="78.2" height="22.6" fill="rgb(0,124,0)" rx="6" />
<text x="18.93" y="1383" font-size="18.44" fill="#2b2b2b" text-anchor="start" font-weight="bold" textLength="36.74" lengthAdjust="spacingAndGlyphs" >112</text>
<text x="19.46" y="1407.1" font-size="18.44" fill="#2b2b2b" text-anchor="start" font-weight="bold" textLength="60.81" lengthAdjust="spacingAndGlyphs" >Green</text>
<rect x="103.1" y="1319.8" width="99.4" height="96.6" rx="8" fill="url(#gTile)" stroke="#5e5e5e" stroke-width="1.2"/>
<rect x="113.4" y="1329.4" width="80.2" height="25.2" fill="url(#gInset)" rx="7" />
<rect x="114.4" y="1330.6" width="78.2" height="22.6" fill="rgb(188,188,188)" rx="6" />
<text x="122.34" y="1383" font-size="18.44" fill="#2b2b2b" text-anchor="start" font-weight="bold" textLength="35.98" lengthAdjust="spacingAndGlyphs" >184</text>
<text x="123.63" y="1407.1" font-size="18.44" fill="#2b2b2b" text-anchor="start" font-weight="bold" textLength="59.39" lengthAdjust="spacingAndGlyphs" >White</text>
<rect x="206.5" y="1319.8" width="99.4" height="96.6" rx="8" fill="url(#gTileS)" stroke="#2c2c2c" stroke-width="1.2"/>
<rect x="216.7" y="1329.4" width="79.4" height="47.8" fill="rgb(0,0,0)" rx="6.5" />
<text x="216.57" y="1407.1" font-size="18.58" fill="#fff" text-anchor="start" font-weight="bold" textLength="78.97" lengthAdjust="spacingAndGlyphs" >0 White</text>
<rect x="309.8" y="1319.8" width="99.4" height="96.6" rx="8" fill="url(#gTile)" stroke="#5e5e5e" stroke-width="1.2"/>
<rect x="320.1" y="1329.4" width="80.2" height="25.2" fill="url(#gInset)" rx="7" />
<rect x="321.1" y="1330.6" width="78.2" height="22.6" fill="rgb(140,140,140)" rx="6" />
<text x="328.97" y="1383" font-size="18.44" fill="#2b2b2b" text-anchor="start" font-weight="bold" textLength="36.66" lengthAdjust="spacingAndGlyphs" >136</text>
<text x="330.29" y="1407.1" font-size="18.44" fill="#2b2b2b" text-anchor="start" font-weight="bold" textLength="59.39" lengthAdjust="spacingAndGlyphs" >White</text>
<rect x="413.1" y="1319.8" width="99.4" height="96.6" rx="8" fill="url(#gTile)" stroke="#5e5e5e" stroke-width="1.2"/>
<rect x="422.3" y="1328.4" width="81.4" height="50.2" fill="url(#gInset)" rx="7.5" />
<rect x="423.3" y="1329.4" width="79.4" height="47.8" fill="rgb(0,10,0)" rx="6.5" />
<text x="417.55" y="1407.1" font-size="18.58" fill="#2b2b2b" text-anchor="start" font-weight="bold" textLength="90.55" lengthAdjust="spacingAndGlyphs" >10 Green</text>
<rect x="516.4" y="1319.8" width="99.4" height="96.6" rx="8" fill="url(#gTile)" stroke="#5e5e5e" stroke-width="1.2"/>
<rect x="526.7" y="1329.4" width="80.2" height="25.2" fill="url(#gInset)" rx="7" />
<rect x="527.7" y="1330.6" width="78.2" height="22.6" fill="rgb(250,250,250)" rx="6" />
<text x="536.19" y="1383" font-size="18.44" fill="#2b2b2b" text-anchor="start" font-weight="bold" textLength="36.20" lengthAdjust="spacingAndGlyphs" >250</text>
<text x="536.95" y="1407.1" font-size="18.44" fill="#2b2b2b" text-anchor="start" font-weight="bold" textLength="59.39" lengthAdjust="spacingAndGlyphs" >White</text>
<rect x="619.8" y="1319.8" width="99.4" height="96.6" rx="8" fill="url(#gTile)" stroke="#5e5e5e" stroke-width="1.2"/>
<rect x="629" y="1328.4" width="81.4" height="50.2" fill="url(#gInset)" rx="7.5" />
<rect x="630" y="1329.4" width="79.4" height="47.8" fill="rgb(242,0,0)" rx="6.5" />
<text x="630.00" y="1407.1" font-size="18.58" fill="#2b2b2b" text-anchor="start" font-weight="bold" textLength="79.59" lengthAdjust="spacingAndGlyphs" >240 Red</text>
<rect x="723.1" y="1319.8" width="99.4" height="96.6" rx="8" fill="url(#gTile)" stroke="#5e5e5e" stroke-width="1.2"/>
<rect x="733.4" y="1329.4" width="80.2" height="25.2" fill="url(#gInset)" rx="7" />
<rect x="734.4" y="1330.6" width="78.2" height="22.6" fill="rgb(232,232,232)" rx="6" />
<text x="742.85" y="1383" font-size="18.44" fill="#2b2b2b" text-anchor="start" font-weight="bold" textLength="36.20" lengthAdjust="spacingAndGlyphs" >230</text>
<text x="743.61" y="1407.1" font-size="18.44" fill="#2b2b2b" text-anchor="start" font-weight="bold" textLength="59.39" lengthAdjust="spacingAndGlyphs" >White</text>
<rect x="826.4" y="1319.8" width="99.4" height="96.6" rx="8" fill="url(#gTile)" stroke="#5e5e5e" stroke-width="1.2"/>
<rect x="835.6" y="1328.4" width="81.4" height="50.2" fill="url(#gInset)" rx="7.5" />
<rect x="836.6" y="1329.4" width="79.4" height="47.8" fill="rgb(0,0,72)" rx="6.5" />
<text x="839.42" y="1407.1" font-size="18.58" fill="#2b2b2b" text-anchor="start" font-weight="bold" textLength="73.39" lengthAdjust="spacingAndGlyphs" >60 Blue</text>
<rect x="929.8" y="1319.8" width="99.4" height="96.6" rx="8" fill="url(#gTile)" stroke="#5e5e5e" stroke-width="1.2"/>
<rect x="940.1" y="1329.4" width="80.2" height="25.2" fill="url(#gInset)" rx="7" />
<rect x="941.1" y="1330.6" width="78.2" height="22.6" fill="rgb(242,242,242)" rx="6" />
<text x="949.51" y="1383" font-size="18.44" fill="#2b2b2b" text-anchor="start" font-weight="bold" textLength="36.20" lengthAdjust="spacingAndGlyphs" >240</text>
<text x="950.27" y="1407.1" font-size="18.44" fill="#2b2b2b" text-anchor="start" font-weight="bold" textLength="59.39" lengthAdjust="spacingAndGlyphs" >White</text>
<rect x="1033.1" y="1319.8" width="99.4" height="96.6" rx="8" fill="url(#gTile)" stroke="#5e5e5e" stroke-width="1.2"/>
<rect x="1043.4" y="1329.4" width="80.2" height="25.2" fill="url(#gInset)" rx="7" />
<rect x="1044.4" y="1330.6" width="78.2" height="22.6" fill="rgb(0,158,0)" rx="6" />
<text x="1052.31" y="1383" font-size="18.44" fill="#2b2b2b" text-anchor="start" font-weight="bold" textLength="35.98" lengthAdjust="spacingAndGlyphs" >144</text>
<text x="1052.76" y="1407.1" font-size="18.44" fill="#2b2b2b" text-anchor="start" font-weight="bold" textLength="60.81" lengthAdjust="spacingAndGlyphs" >Green</text>
<rect x="1136.4" y="1319.8" width="99.4" height="96.6" rx="8" fill="url(#gTile)" stroke="#5e5e5e" stroke-width="1.2"/>
<rect x="1146.7" y="1329.4" width="80.2" height="25.2" fill="url(#gInset)" rx="7" />
<rect x="1147.7" y="1330.6" width="78.2" height="22.6" fill="rgb(168,168,168)" rx="6" />
<text x="1155.64" y="1383" font-size="18.44" fill="#2b2b2b" text-anchor="start" font-weight="bold" textLength="35.98" lengthAdjust="spacingAndGlyphs" >164</text>
<text x="1156.93" y="1407.1" font-size="18.44" fill="#2b2b2b" text-anchor="start" font-weight="bold" textLength="59.39" lengthAdjust="spacingAndGlyphs" >White</text>
<rect x="1239.8" y="1319.8" width="99.4" height="96.6" rx="8" fill="url(#gTile)" stroke="#5e5e5e" stroke-width="1.2"/>
<rect x="1249" y="1328.4" width="81.4" height="50.2" fill="url(#gInset)" rx="7.5" />
<rect x="1250" y="1329.4" width="79.4" height="47.8" fill="rgb(252,0,0)" rx="6.5" />
<text x="1249.98" y="1407.1" font-size="18.58" fill="#2b2b2b" text-anchor="start" font-weight="bold" textLength="79.59" lengthAdjust="spacingAndGlyphs" >250 Red</text>
<rect x="1343.1" y="1319.8" width="99.4" height="96.6" rx="8" fill="url(#gTile)" stroke="#5e5e5e" stroke-width="1.2"/>
<rect x="1353.4" y="1329.4" width="80.2" height="25.2" fill="url(#gInset)" rx="7" />
<rect x="1354.4" y="1330.6" width="78.2" height="22.6" fill="rgb(132,132,132)" rx="6" />
<text x="1362.28" y="1383" font-size="18.44" fill="#2b2b2b" text-anchor="start" font-weight="bold" textLength="36.55" lengthAdjust="spacingAndGlyphs" >128</text>
<text x="1363.59" y="1407.1" font-size="18.44" fill="#2b2b2b" text-anchor="start" font-weight="bold" textLength="59.39" lengthAdjust="spacingAndGlyphs" >White</text>
<rect x="1446.4" y="1319.8" width="99.4" height="96.6" rx="8" fill="url(#gTile)" stroke="#5e5e5e" stroke-width="1.2"/>
<rect x="1455.6" y="1328.4" width="81.4" height="50.2" fill="url(#gInset)" rx="7.5" />
<rect x="1456.6" y="1329.4" width="79.4" height="47.8" fill="rgb(32,32,32)" rx="6.5" />
<text x="1451.69" y="1407.1" font-size="18.58" fill="#2b2b2b" text-anchor="start" font-weight="bold" textLength="89.12" lengthAdjust="spacingAndGlyphs" >30 White</text>
<rect x="1549.8" y="1319.8" width="99.4" height="96.6" rx="8" fill="url(#gTile)" stroke="#5e5e5e" stroke-width="1.2"/>
<rect x="1560" y="1329.4" width="80.2" height="25.2" fill="url(#gInset)" rx="7" />
<rect x="1561" y="1330.6" width="78.2" height="22.6" fill="rgb(148,148,148)" rx="6" />
<text x="1568.96" y="1383" font-size="18.44" fill="#2b2b2b" text-anchor="start" font-weight="bold" textLength="35.98" lengthAdjust="spacingAndGlyphs" >144</text>
<text x="1570.25" y="1407.1" font-size="18.44" fill="#2b2b2b" text-anchor="start" font-weight="bold" textLength="59.39" lengthAdjust="spacingAndGlyphs" >White</text>
<rect x="1653.1" y="1319.8" width="99.4" height="96.6" rx="8" fill="url(#gTile)" stroke="#5e5e5e" stroke-width="1.2"/>
<rect x="1662.3" y="1328.4" width="81.4" height="50.2" fill="url(#gInset)" rx="7.5" />
<rect x="1663.3" y="1329.4" width="79.4" height="47.8" fill="rgb(142,0,0)" rx="6.5" />
<text x="1662.78" y="1407.1" font-size="18.58" fill="#2b2b2b" text-anchor="start" font-weight="bold" textLength="80.12" lengthAdjust="spacingAndGlyphs" >136 Red</text>
<rect x="1756.4" y="1319.8" width="99.4" height="96.6" rx="8" fill="url(#gTile)" stroke="#5e5e5e" stroke-width="1.2"/>
<rect x="1766.7" y="1329.4" width="80.2" height="25.2" fill="url(#gInset)" rx="7" />
<rect x="1767.7" y="1330.6" width="78.2" height="22.6" fill="rgb(224,224,224)" rx="6" />
<text x="1776.15" y="1383" font-size="18.44" fill="#2b2b2b" text-anchor="start" font-weight="bold" textLength="36.20" lengthAdjust="spacingAndGlyphs" >220</text>
<text x="1776.91" y="1407.1" font-size="18.44" fill="#2b2b2b" text-anchor="start" font-weight="bold" textLength="59.39" lengthAdjust="spacingAndGlyphs" >White</text>
<rect x="1859.7" y="1319.8" width="99.4" height="96.6" rx="8" fill="url(#gTile)" stroke="#5e5e5e" stroke-width="1.2"/>
<rect x="1868.9" y="1328.4" width="81.4" height="50.2" fill="url(#gInset)" rx="7.5" />
<rect x="1869.9" y="1329.4" width="79.4" height="47.8" fill="rgb(204,0,0)" rx="6.5" />
<text x="1869.44" y="1407.1" font-size="18.58" fill="#2b2b2b" text-anchor="start" font-weight="bold" textLength="80.12" lengthAdjust="spacingAndGlyphs" >184 Red</text>
</g>
<rect x="2" y="1419.4" width="19.8" height="19" fill="#7d7d7d" rx="3" />
<polygon points="17.6,1421.8 17.6,1436.4 6.4,1429.1" fill="#3c3c3c"/>
<rect x="26.2" y="1419" width="339.4" height="19.4" fill="#3a3a3a" rx="9.7" />
<rect x="1897.6" y="1419.4" width="19.8" height="19" fill="#7d7d7d" rx="3" />
<polygon points="1901.8,1421.8 1901.8,1436.4 1913,1429.1" fill="#3c3c3c"/>
<path d="M1920,1356 V1326 Q1920,1319.6 1926,1319.6 H2009.4 Q2015.4,1319.6 2015.4,1326 V1356 Z" fill="url(#gP1)"/>
<rect x="1920" y="1357.3" width="95.4" height="83" fill="url(#gP2)" />
<circle cx="1967.7" cy="1338.4" r="14.6" fill="url(#gIc)" filter="url(#sf)"/>
<polygon points="1959.3,1340.6 1976.1,1340.6 1967.7,1332.6" fill="#3a3a3a"/>
<rect x="1936.6" y="1368.3" width="62.4" height="61.2" fill="#2d2d2d" rx="9" />
<rect x="1941" y="1372.7" width="53.6" height="52.4" fill="url(#gStop)" rx="5" />
<rect x="1954.5" y="1385.7" width="26.6" height="26.6" fill="#000" />
<rect x="2017.5" y="1319.6" width="91.3" height="59.4" fill="url(#gB1)" />
<circle cx="2063.4" cy="1349.4" r="19.4" fill="url(#gIc)" filter="url(#sf)"/>
<rect x="2110.5" y="1319.6" width="87.8" height="59.4" fill="url(#gB1)" />
<circle cx="2154.3" cy="1349.4" r="19.4" fill="url(#gIc)" filter="url(#sf)"/>
<rect x="2199.8" y="1319.6" width="88.2" height="59.4" fill="url(#gB1)" />
<circle cx="2244.3" cy="1349.4" r="19.4" fill="url(#gIc)" filter="url(#sf)"/>
<rect x="2290" y="1319.6" width="87.2" height="59.4" fill="url(#gB1)" />
<circle cx="2333.7" cy="1349.4" r="19.4" fill="url(#gIc)" filter="url(#sf)"/>
<rect x="2379" y="1319.6" width="88" height="59.4" fill="url(#gB1)" />
<circle cx="2422.9" cy="1349.4" r="19.4" fill="url(#gIc)" filter="url(#sf)"/>
<rect x="2055.6" y="1341.6" width="15.4" height="15.4" fill="#383838" />
<polygon points="2148.2,1340.4 2148.2,1359.6 2165.2,1350" fill="#383838"/>
<path d="M2237.4,1342.2 h-3.8 v16.6 h3.8 M2251,1342.2 h3.8 v16.6 h-3.8" fill="none" stroke="#383838" stroke-width="3.2"/>
<rect x="2238.6" y="1348.2" width="2.6" height="2.7" fill="#383838" />
<rect x="2244.6" y="1348.2" width="2.6" height="2.7" fill="#383838" />
<path d="M2333.3,1349.2 c-3,-5 -12.3,-5 -12.3,0 c0,5 9.3,5 12.3,0 c3,-5 12.3,-5 12.3,0 c0,5 -9.3,5 -12.3,0 Z" fill="none" stroke="#383838" stroke-width="2.8"/>
<g fill="none" stroke="#383838" stroke-width="3.4"><path d="M2415.3,1346.6 a8.4,8.4 0 0 1 14.4,-2.6"/><path d="M2430.5,1352.4 a8.4,8.4 0 0 1 -14.4,2.6"/></g>
<polygon points="2433.3,1339 2433.7,1347.4 2425.7,1346.6" fill="#383838"/><polygon points="2412.5,1360 2412.1,1351.6 2420.1,1352.4" fill="#383838"/>
<rect x="2471.4" y="1322.8" width="85.2" height="53.1" fill="url(#g123)" />
<text x="2485.30" y="1361.9" font-size="35.61" fill="#fff" text-anchor="start" font-weight="normal" textLength="57.81" lengthAdjust="spacingAndGlyphs" >123</text>
<path d="M2017.5,1440 V1387 Q2017.5,1381.6 2023,1381.6 H2288.2 V1440 Z" fill="url(#gB2)"/>
<rect x="2290" y="1381.6" width="270" height="58.4" fill="url(#gB2)" />
<circle cx="2078.6" cy="1411" r="19.4" fill="url(#gIc2)" filter="url(#sf)"/>
<circle cx="2502.4" cy="1411" r="19.4" fill="url(#gIc2)" filter="url(#sf)"/>
<path d="M2078.4,1400.6 l-8,10.4 l8,10.4 M2087.4,1400.6 l-8,10.4 l8,10.4" fill="none" stroke="#3c3c3c" stroke-width="2.6"/>
<path d="M2493.2,1400.6 l8,10.4 l-8,10.4 M2502.2,1400.6 l8,10.4 l-8,10.4" fill="none" stroke="#3c3c3c" stroke-width="2.6"/>
<text x="2128.71" y="1426.2" font-size="41.62" fill="#363636" text-anchor="start" font-weight="normal" textLength="102.61" lengthAdjust="spacingAndGlyphs" stroke="#363636" stroke-width="0.9">Back</text>
<text x="2339.86" y="1426.2" font-size="41.62" fill="#363636" text-anchor="start" font-weight="normal" textLength="106.46" lengthAdjust="spacingAndGlyphs" stroke="#363636" stroke-width="0.9">Next</text>
<rect x="2551.5" y="0" width="8.5" height="1440" fill="url(#gEdge)" /></svg></body></html>
